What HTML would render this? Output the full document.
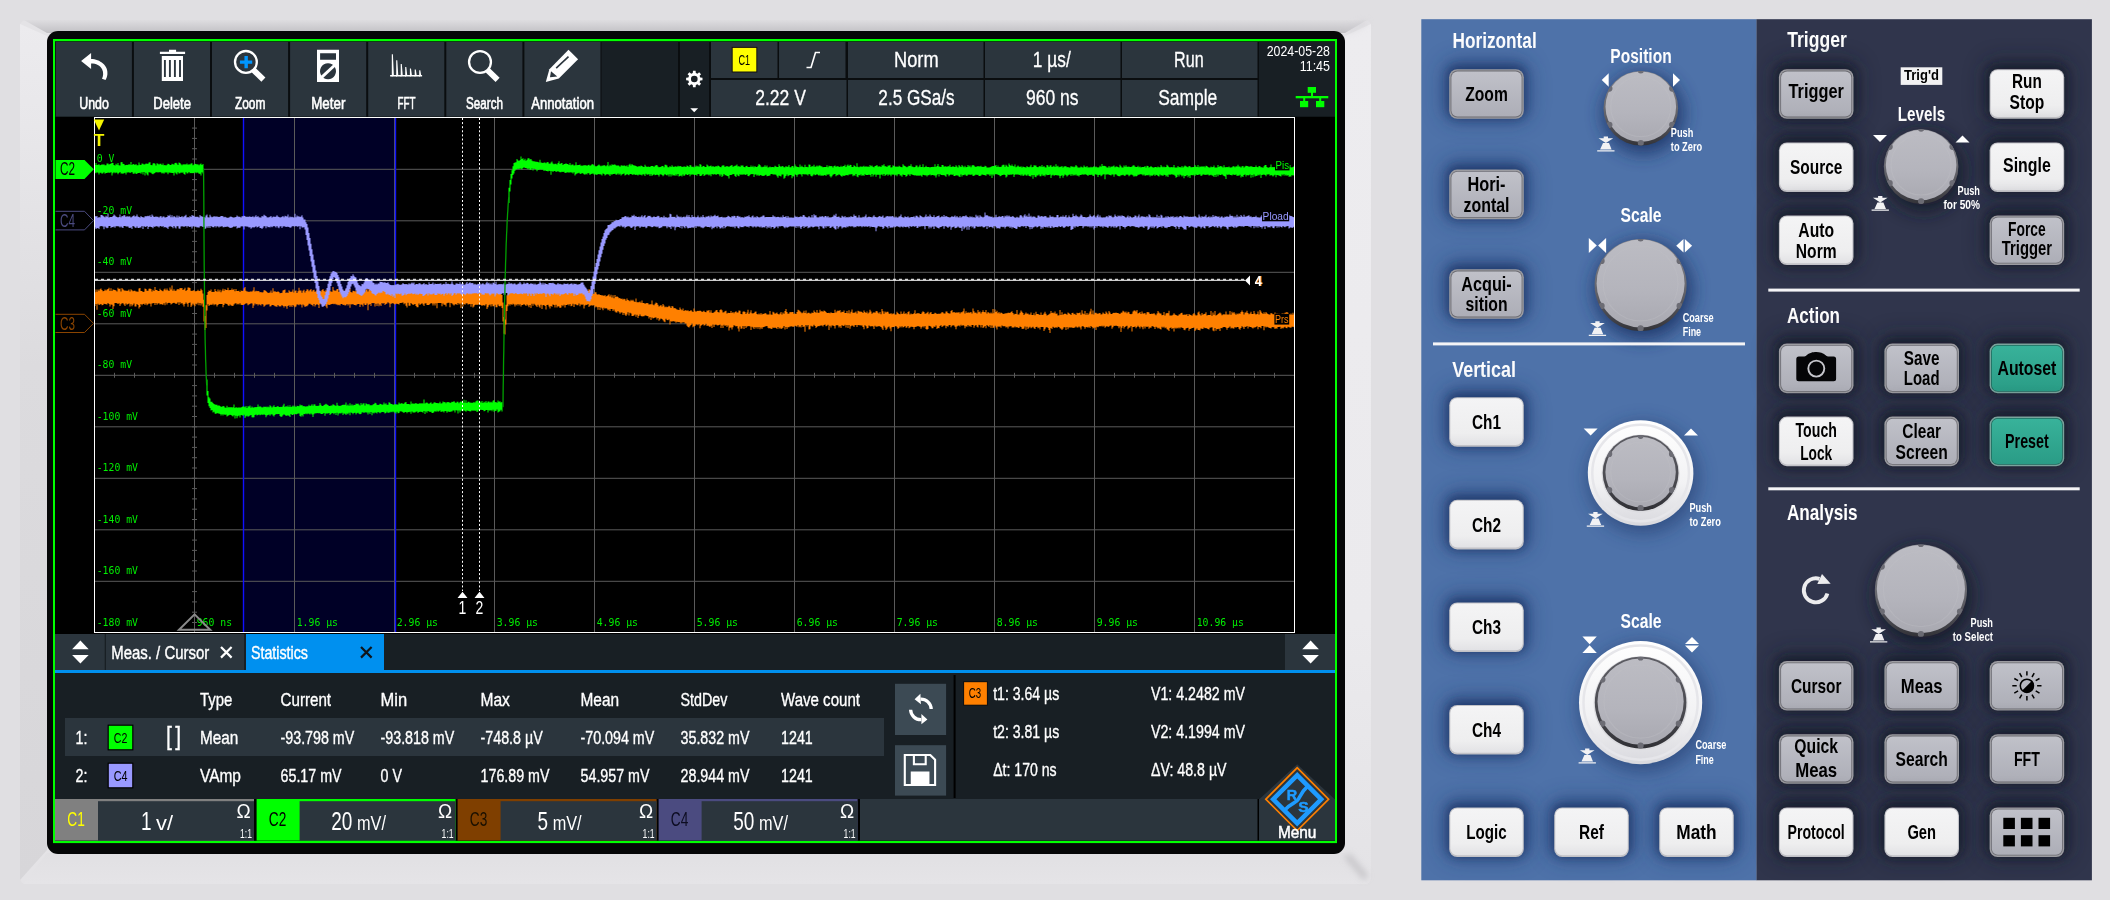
<!DOCTYPE html>
<html lang="en"><head><meta charset="utf-8"><title>Oscilloscope</title>
<style>
html,body{margin:0;padding:0;background:#e0dfe2;overflow:hidden}
svg{display:block;position:absolute;left:0;top:0;will-change:transform}
text{white-space:pre}
.s,.sb{font-family:"Liberation Sans",Arial,sans-serif}
.sb,.mb{font-weight:bold}
.m,.mb{font-family:"DejaVu Sans Mono","Liberation Mono",monospace}
</style></head>
<body>
<svg width="2110" height="900" viewBox="0 0 2110 900">
<defs>
<linearGradient id="bzT" x1="0" y1="0" x2="0" y2="1"><stop offset="0" stop-color="#dedde0"/><stop offset="1" stop-color="#c1c0c4"/></linearGradient>
<linearGradient id="bzB" x1="0" y1="0" x2="0" y2="1"><stop offset="0" stop-color="#e1e0e3"/><stop offset="1" stop-color="#e5e4e7"/></linearGradient>
<linearGradient id="bzL" x1="0" y1="0" x2="0" y2="1"><stop offset="0" stop-color="#ecebee"/><stop offset="0.12" stop-color="#e8e7ea"/><stop offset="0.4" stop-color="#dcdbde"/><stop offset="1" stop-color="#d7d6d9"/></linearGradient>
<linearGradient id="bzR" x1="0" y1="0" x2="0" y2="1"><stop offset="0" stop-color="#edecef"/><stop offset="0.7" stop-color="#ebeaed"/><stop offset="1" stop-color="#e4e3e6"/></linearGradient>
<filter id="bzblur" x="-100%" y="-100%" width="300%" height="300%"><feGaussianBlur stdDeviation="3"/></filter>
<filter id="bl" x="-50%" y="-50%" width="200%" height="200%"><feGaussianBlur stdDeviation="7.5"/></filter>
<filter id="bl3" x="-60%" y="-80%" width="220%" height="260%"><feGaussianBlur stdDeviation="10"/></filter>
<filter id="bl4" x="-50%" y="-50%" width="200%" height="200%"><feGaussianBlur stdDeviation="4.5"/></filter>
<filter id="bl2" x="-50%" y="-50%" width="200%" height="200%"><feGaussianBlur stdDeviation="9"/></filter>
<linearGradient id="gG" x1="0" y1="0" x2="0" y2="1"><stop offset="0" stop-color="#c0c1c9"/><stop offset="1" stop-color="#adaeb7"/></linearGradient>
<linearGradient id="gW" x1="0" y1="0" x2="0" y2="1"><stop offset="0" stop-color="#f4f4f5"/><stop offset="0.75" stop-color="#eeeeef"/><stop offset="1" stop-color="#e2e2e5"/></linearGradient>
<linearGradient id="gT" x1="0" y1="0" x2="0" y2="1"><stop offset="0" stop-color="#38b29a"/><stop offset="1" stop-color="#2a9c86"/></linearGradient>
<linearGradient id="kF" x1="0" y1="0" x2="0" y2="1"><stop offset="0" stop-color="#bcbcc3"/><stop offset="0.6" stop-color="#b4b4bc"/><stop offset="1" stop-color="#a9a9b1"/></linearGradient>
<linearGradient id="kR" x1="0" y1="0" x2="0" y2="1"><stop offset="0" stop-color="#85858c"/><stop offset="0.5" stop-color="#6a6a71"/><stop offset="0.85" stop-color="#45454b"/><stop offset="1" stop-color="#333338"/></linearGradient>
<linearGradient id="kR2" x1="0" y1="0" x2="0" y2="1"><stop offset="0" stop-color="#5c5c63"/><stop offset="0.6" stop-color="#4a4a50"/><stop offset="1" stop-color="#303035"/></linearGradient>
<linearGradient id="kW" x1="0" y1="0" x2="0" y2="1"><stop offset="0" stop-color="#ffffff"/><stop offset="0.6" stop-color="#f2f2f4"/><stop offset="1" stop-color="#d9d9de"/></linearGradient>
</defs>
<rect x="0" y="0" width="2110" height="900" fill="#e0dfe2"/>
<rect x="20" y="20" width="1351" height="864" fill="#e4e3e6" rx="6"/>
<path d="M24 20H1367L1345 33H47Z" fill="url(#bzT)"/>
<path d="M20 24L47 36V850L20 880Z" fill="url(#bzL)"/>
<path d="M1371 24L1345 36V850L1371 880Z" fill="url(#bzR)"/>
<path d="M47 853H1345L1368 884H23Z" fill="url(#bzB)"/>
<path d="M1347 855L1366 878" stroke="#bdbcc0" stroke-width="7" opacity="0.7" filter="url(#bzblur)"/>
<path d="M1347 31L1367 22" stroke="#cfced2" stroke-width="5" opacity="0.6" filter="url(#bzblur)"/>
<g id="screen">
<rect x="47" y="31" width="1298" height="823" fill="#050607" rx="11"/>
<rect x="53" y="39" width="1284" height="804.1" fill="#00ff00"/>
<rect x="55" y="41.5" width="1280" height="799.1" fill="#000"/>
<rect x="55" y="41.5" width="1280" height="75.5" fill="#0a0d0f"/>
<rect x="55.8" y="41.8" width="76.1" height="74.8" fill="#2b353d"/>
<text class="s" transform="translate(94.00 108.90) scale(0.7836 1)" font-size="15.8" fill="#fff" text-anchor="middle" stroke="#fff" stroke-width="0.6">Undo</text>
<rect x="133.9" y="41.8" width="76.1" height="74.8" fill="#2b353d"/>
<text class="s" transform="translate(172.10 108.90) scale(0.8276 1)" font-size="15.8" fill="#fff" text-anchor="middle" stroke="#fff" stroke-width="0.6">Delete</text>
<rect x="212" y="41.8" width="76.1" height="74.8" fill="#2b353d"/>
<text class="s" transform="translate(250.20 108.90) scale(0.7576 1)" font-size="15.8" fill="#fff" text-anchor="middle" stroke="#fff" stroke-width="0.6">Zoom</text>
<rect x="290.1" y="41.8" width="76.1" height="74.8" fill="#2b353d"/>
<text class="s" transform="translate(328.30 108.90) scale(0.8443 1)" font-size="15.8" fill="#fff" text-anchor="middle" stroke="#fff" stroke-width="0.6">Meter</text>
<rect x="368.2" y="41.8" width="76.1" height="74.8" fill="#2b353d"/>
<text class="s" transform="translate(406.40 108.90) scale(0.6217 1)" font-size="15.8" fill="#fff" text-anchor="middle" stroke="#fff" stroke-width="0.6">FFT</text>
<rect x="446.3" y="41.8" width="76.1" height="74.8" fill="#2b353d"/>
<text class="s" transform="translate(484.50 108.90) scale(0.7371 1)" font-size="15.8" fill="#fff" text-anchor="middle" stroke="#fff" stroke-width="0.6">Search</text>
<rect x="524.4" y="41.8" width="76.1" height="74.8" fill="#2b353d"/>
<text class="s" transform="translate(562.60 108.90) scale(0.8312 1)" font-size="15.8" fill="#fff" text-anchor="middle" stroke="#fff" stroke-width="0.6">Annotation</text>
<rect x="601.5" y="41.8" width="76.5" height="74.8" fill="#181f24"/>
<rect x="680" y="41.8" width="29" height="74.8" fill="#181f24"/>
<rect x="711" y="41.8" width="66.5" height="36.2" fill="#2b353d"/>
<rect x="779" y="41.8" width="66.5" height="36.2" fill="#2b353d"/>
<rect x="848" y="41.8" width="135.5" height="36.2" fill="#2b353d"/>
<rect x="985" y="41.8" width="135.5" height="36.2" fill="#2b353d"/>
<rect x="1122" y="41.8" width="135.5" height="36.2" fill="#2b353d"/>
<rect x="711" y="80" width="135.5" height="36.6" fill="#2b353d"/>
<rect x="848" y="80" width="135.5" height="36.6" fill="#2b353d"/>
<rect x="985" y="80" width="135.5" height="36.6" fill="#2b353d"/>
<rect x="1122" y="80" width="135.5" height="36.6" fill="#2b353d"/>
<rect x="1259" y="41.8" width="76" height="74.8" fill="#181f24"/>
<text class="s" transform="translate(916.30 67.00) scale(0.8109 1)" font-size="22.5" fill="#fff" text-anchor="middle" stroke="#fff" stroke-width="0.3">Norm</text>
<text class="s" transform="translate(1051.80 67.00) scale(0.7699 1)" font-size="22.5" fill="#fff" text-anchor="middle" stroke="#fff" stroke-width="0.3">1 µs/</text>
<text class="s" transform="translate(1188.80 67.00) scale(0.7171 1)" font-size="22.5" fill="#fff" text-anchor="middle" stroke="#fff" stroke-width="0.3">Run</text>
<text class="s" transform="translate(780.50 104.80) scale(0.7794 1)" font-size="22.5" fill="#fff" text-anchor="middle" stroke="#fff" stroke-width="0.3">2.22 V</text>
<text class="s" transform="translate(916.50 104.80) scale(0.7636 1)" font-size="22.5" fill="#fff" text-anchor="middle" stroke="#fff" stroke-width="0.3">2.5 GSa/s</text>
<text class="s" transform="translate(1052.30 104.80) scale(0.7786 1)" font-size="22.5" fill="#fff" text-anchor="middle" stroke="#fff" stroke-width="0.3">960 ns</text>
<text class="s" transform="translate(1187.70 104.80) scale(0.7746 1)" font-size="22.5" fill="#fff" text-anchor="middle" stroke="#fff" stroke-width="0.3">Sample</text>
<rect x="731.7" y="46.9" width="25.6" height="25.6" fill="#101010"/>
<rect x="732.7" y="47.9" width="23.6" height="23.6" fill="#ffff00"/>
<text class="s" transform="translate(744.30 64.80) scale(0.5892 1)" font-size="15.4" fill="#000" text-anchor="middle">C1</text>
<path d="M806.5 67.5h4.5l4.5-15h4.5" fill="none" stroke="#fff" stroke-width="1.6"/>
<text class="s" transform="translate(1330.00 56.00) scale(0.7983 1)" font-size="15.5" fill="#fff" text-anchor="end">2024-05-28</text>
<text class="s" transform="translate(1330.00 71.00) scale(0.8050 1)" font-size="15.5" fill="#fff" text-anchor="end">11:45</text>
<g fill="#00ff00"><rect x="1307.7" y="87" width="8.3" height="5.8"/><rect x="1311" y="92" width="2" height="5"/><rect x="1295.7" y="96" width="32.6" height="2.3"/><rect x="1303.2" y="98" width="2" height="4"/><rect x="1319.2" y="98" width="2" height="4"/><rect x="1300" y="101" width="8.2" height="6.2"/><rect x="1316" y="101" width="8.3" height="6.2"/></g>
<path d="M702.49 77.68L702.49 80.32L700.25 80.52L699.58 82.13L701.03 83.86L699.16 85.73L697.43 84.28L695.82 84.95L695.62 87.19L692.98 87.19L692.78 84.95L691.17 84.28L689.44 85.73L687.57 83.86L689.02 82.13L688.35 80.52L686.11 80.32L686.11 77.68L688.35 77.48L689.02 75.87L687.57 74.14L689.44 72.27L691.17 73.72L692.78 73.05L692.98 70.81L695.62 70.81L695.82 73.05L697.43 73.72L699.16 72.27L701.03 74.14L699.58 75.87L700.25 77.48ZM697.62 79A3.32 3.32 0 1 0 690.98 79A3.32 3.32 0 1 0 697.62 79Z" fill="#fff" fill-rule="evenodd"/>
<path d="M690.3 108.2h7.8l-3.9 4z" fill="#fff"/>
<path d="M81.1 61L91.1 53V59C100 59 108.6 66 107.4 74.2C107.1 76.6 106.5 78.5 105.5 80L102 78.8C103.4 76 103.6 72.4 102.2 69.5C100.2 65.6 96.2 63.6 91.1 63.6V68.9Z" fill="#fff"/>
<path d="M159.9 51.7h9.1v-1.9h7.1v1.9h9v2.4h-25.2zM161.8 56h21.2v25h-21.2z" fill="#fff"/>
<path d="M164.9 60v16.9M169.9 60v16.9M174.9 60v16.9M180 60v16.9" stroke="#2b353d" stroke-width="1.9"/>
<path d="M252.8 69.4l10.6 10.2" stroke="#fff" stroke-width="5.8"/><circle cx="245.9" cy="61.9" r="10.9" fill="#2b353d" stroke="#fff" stroke-width="2.3"/><path d="M239.9 62.1h12.3M246.15 56v12.2" stroke="#0096ff" stroke-width="3.4"/>
<path d="M317 49.8h22v32.2h-22zM320.1 53.2h15.9v6.6h-15.9zM328 63.2a8 8 0 1 0 .01 0z" fill="#fff" fill-rule="evenodd"/><path d="M321.3 77.6l13.6-12.6" stroke="#fff" stroke-width="3"/>
<path d="M391.8 77V54.3h1.1l1 21.7zM396.2 77V60.2h1.1l1 15.8zM400.7 77V64.1h1.1l1 11.9zM405.2 77V67h1.1l1 9.0zM409.90000000000003 77V68.6h1.1l1 7.4zM414.7 77V69.6h1.1l1 6.4zM419.2 77V70.2h1.1l1 5.8zM390.1 75h32v1.5h-32z" fill="#fff"/>
<path d="M487 69.6l10.6 10.2" stroke="#fff" stroke-width="5.8"/><circle cx="480" cy="62" r="10.95" fill="#2b353d" stroke="#fff" stroke-width="2.3"/>
<path d="M545.8 81.9L549.4 69.3L568.5 49.8L578.1 59.2L558.8 78.5Z" fill="#fff"/><path d="M551 71.2L557.2 76.5L550 77.2Z" fill="#2b353d"/><path d="M556.2 68.1L568.5 56.6" stroke="#2b353d" stroke-width="1.6"/>
<rect x="243.5" y="118" width="152" height="514" fill="#000026"/>
<path d="M194.5 117.5V632.5M294.5 117.5V632.5M394.5 117.5V632.5M494.5 117.5V632.5M594.5 117.5V632.5M694.5 117.5V632.5M794.5 117.5V632.5M894.5 117.5V632.5M994.5 117.5V632.5M1094.5 117.5V632.5M1194.5 117.5V632.5M94.5 169.3H1294.5M94.5 220.8H1294.5M94.5 272.3H1294.5M94.5 323.8H1294.5M94.5 375.3H1294.5M94.5 426.8H1294.5M94.5 478.3H1294.5M94.5 529.8H1294.5M94.5 581.3H1294.5" stroke="#5a5a5a" stroke-width="1" fill="none"/>
<path d="M192 128.1h5M192 138.4h5M192 148.7h5M192 159.0h5M192 169.3h5M192 179.6h5M192 189.9h5M192 200.2h5M192 210.5h5M192 220.8h5M192 231.1h5M192 241.4h5M192 251.7h5M192 262.0h5M192 272.3h5M192 282.6h5M192 292.9h5M192 303.2h5M192 313.5h5M192 323.8h5M192 334.1h5M192 344.4h5M192 354.7h5M192 365.0h5M192 375.3h5M192 385.6h5M192 395.9h5M192 406.2h5M192 416.5h5M192 426.8h5M192 437.1h5M192 447.4h5M192 457.7h5M192 468.0h5M192 478.3h5M192 488.6h5M192 498.9h5M192 509.2h5M192 519.5h5M192 529.8h5M192 540.1h5M192 550.4h5M192 560.7h5M192 571.0h5M192 581.3h5M192 591.6h5M192 601.9h5M192 612.2h5M192 622.5h5M114.5 372.8v5M134.5 372.8v5M154.5 372.8v5M174.5 372.8v5M194.5 372.8v5M214.5 372.8v5M234.5 372.8v5M254.5 372.8v5M274.5 372.8v5M294.5 372.8v5M314.5 372.8v5M334.5 372.8v5M354.5 372.8v5M374.5 372.8v5M394.5 372.8v5M414.5 372.8v5M434.5 372.8v5M454.5 372.8v5M474.5 372.8v5M494.5 372.8v5M514.5 372.8v5M534.5 372.8v5M554.5 372.8v5M574.5 372.8v5M594.5 372.8v5M614.5 372.8v5M634.5 372.8v5M654.5 372.8v5M674.5 372.8v5M694.5 372.8v5M714.5 372.8v5M734.5 372.8v5M754.5 372.8v5M774.5 372.8v5M794.5 372.8v5M814.5 372.8v5M834.5 372.8v5M854.5 372.8v5M874.5 372.8v5M894.5 372.8v5M914.5 372.8v5M934.5 372.8v5M954.5 372.8v5M974.5 372.8v5M994.5 372.8v5M1014.5 372.8v5M1034.5 372.8v5M1054.5 372.8v5M1074.5 372.8v5M1094.5 372.8v5M1114.5 372.8v5M1134.5 372.8v5M1154.5 372.8v5M1174.5 372.8v5M1194.5 372.8v5M1214.5 372.8v5M1234.5 372.8v5M1254.5 372.8v5M1274.5 372.8v5" stroke="#5a5a5a" stroke-width="1" fill="none"/>
<path d="M243.5 117.5V632.5M395.5 117.5V632.5" stroke="#1010ff" stroke-width="1.4"/>
<path d="M94.5 292.3H95.5V289.4H96.5V291.7H97.5V289.6H98.5V290.7H99.5V289.2H100.5V288.4H101.5V289.9H102.5V291.3H103.5V291.1H104.5V289.5H105.5V290.5H106.5V289.5H107.5V289H108.5V287.8H109.5V290.9H110.5V288.3H111.5V291.1H112.5V289.4H113.5V289.8H114.5V290H115.5V290.4H116.5V291.4H117.5V287.8H118.5V289H119.5V288.4H120.5V291.5H121.5V288.1H122.5V289.2H123.5V290.3H124.5V290.8H125.5V290.4H126.5V291.1H127.5V290.6H128.5V289.5H129.5V291.4H130.5V289.3H131.5V290.2H132.5V291.2H133.5V290.7H134.5V290.8H135.5V291.4H136.5V291.5H137.5V291.8H138.5V288.5H139.5V288H140.5V290.9H141.5H141.5H142.5V292H143.5V291.8H144.5V288.5H145.5V288.9H146.5V290.8H147.5V290.7H148.5V288.7H149.5V288.5H150.5V288.9H151.5V291.4H152.5V289.8H153.5V291.1H154.5V287.1H155.5V290H156.5V290.1H157.5V291.1H158.5V290.9H159.5V288.8H160.5V290H161.5V290.8H162.5V291.2H163.5V289.5H164.5V288.4H165.5V290.2H166.5V288.6H167.5V290.2H168.5V290.9H169.5V287.6H170.5V289.4H171.5V285.6H172.5V290.7H173.5V289.3H174.5V290.8H175.5H175.5H176.5V289.6H177.5V288.9H178.5V289.6H179.5V288.1H180.5V288.2H181.5V288H182.5V290.1H183.5V289.2H184.5V287.7H185.5V290.9H186.5V290.1H187.5V287.4H188.5V287.6H189.5V288.1H190.5V290.7H191.5V290.9H192.5V290.4H193.5V290.2H194.5V291.3H195.5V291.3H196.5V291H197.5V289.8H198.5V291H199.5V290.8H200.5V288.7H201.5V290.3H202.5V293.5H203.5V299.8H204.5V315.9H205.5V305.2H206.5V295.1H207.5V292.1H208.5V290.6H209.5V290.9H210.5V289.4H211.5V292.1H212.5V291.8H213.5V292H214.5V289.1H215.5V291.1H216.5V291.7H217.5V289.5H218.5V291.4H219.5V289.8H220.5V292.2H221.5V290.5H222.5V288.8H223.5V290.8H224.5V288.9H225.5V290.1H226.5V290H227.5V287.8H228.5V290.3H229.5V290H230.5V290.1H231.5V288.6H232.5V290.1H233.5V289.1H234.5V291.2H235.5V289H236.5V291H237.5H237.5H238.5V290.7H239.5V291.9H240.5V290.6H241.5V291H242.5V290.7H243.5V288.2H244.5V287H245.5V290.8H246.5V291.5H247.5H247.5H248.5V292H249.5V291.5H250.5V291.6H251.5V291.4H252.5V290.5H253.5V287.3H254.5V291.4H255.5V290.8H256.5V291.2H257.5V291.1H258.5V291.2H259.5V292.3H260.5V292H261.5V292.4H262.5V292.2H263.5V290.2H264.5H264.5H265.5V291.1H266.5V292H267.5V292.9H268.5V292.7H269.5V292.5H270.5V290.4H271.5V292.8H272.5V288.3H273.5V291.4H274.5V291.2H275.5V291.8H276.5V292H277.5V291.3H278.5V292.1H279.5V293.2H280.5V293H281.5V292.7H282.5V290.6H283.5V290H284.5V289.5H285.5V293.1H286.5V292.2H287.5V293.1H288.5V290.3H289.5V291.6H290.5V292H291.5V291.4H292.5V289.4H293.5V292.4H294.5V290.8H295.5V290.5H296.5V292.9H297.5V291.3H298.5V287.8H299.5V290.4H300.5V290.6H301.5V292.7H302.5V290.8H303.5V289.8H304.5V292.5H305.5V291.1H306.5V289.3H307.5V289.4H308.5V291.3H309.5V290H310.5V289.1H311.5V291.4H312.5V290.2H313.5V289.8H314.5V291.7H315.5V291.3H316.5V289.6H317.5V291.4H318.5V291.6H319.5V291H320.5V291.4H321.5V290.1H322.5V288.9H323.5V290.8H324.5V291.6H325.5V289.7H326.5V291H327.5V291.7H328.5V287.7H329.5V290.8H330.5V291.6H331.5V291.7H332.5V287.1H333.5V290.3H334.5V290.7H335.5V290.5H336.5V289H337.5V289.1H338.5V291.9H339.5V287.6H340.5V292.3H341.5V289.7H342.5V290.6H343.5V291.2H344.5V291.8H345.5V289.1H346.5V291.1H347.5V292.4H348.5V290.5H349.5V288.6H350.5V292H351.5V292.4H352.5V290.7H353.5V291H354.5V291.4H355.5V290.5H356.5V291.6H357.5V291.8H358.5V290H359.5V292H360.5V289.5H361.5V290.6H362.5V290.8H363.5V287.8H364.5V291.7H365.5V290H366.5V289H367.5V291.6H368.5V288.2H369.5V289.5H370.5V291H371.5V289.1H372.5V287.8H373.5V288.6H374.5V290.1H375.5V290H376.5V289.3H377.5V290.7H378.5V289.2H379.5V290.1H380.5V288.3H381.5V290.1H382.5V290.4H383.5V288.7H384.5V290.3H385.5V290.9H386.5V287.1H387.5V288.4H388.5V290.4H389.5V287.4H390.5V290.6H391.5V289.1H392.5V287.3H393.5V287.9H394.5V290.8H395.5V289.3H396.5V289H397.5V289.8H398.5V290.3H399.5V289.6H400.5V290.2H401.5V290.7H402.5V290.1H403.5V288H404.5V290H405.5V288H406.5V291.1H407.5V290.2H408.5V290.8H409.5V290.7H410.5V290H411.5V290.9H412.5V289.6H413.5V288.7H414.5V289.6H415.5V291H416.5V290H417.5V291.7H418.5V288.8H419.5V290.4H420.5V291.3H421.5V291.7H422.5V290.2H423.5V290.8H424.5V291.6H425.5V291H426.5V291.1H427.5V291.5H428.5V291.6H429.5V289.7H430.5V291.3H431.5V290.4H432.5V290.1H433.5V291.5H434.5V288.2H435.5V290.7H436.5V286.8H437.5V290.2H438.5V287.3H439.5V291H440.5V289.9H441.5V290.9H442.5V291.2H443.5H443.5H444.5V290.4H445.5V289.5H446.5V289.6H447.5V289.8H448.5V289.9H449.5V291.2H450.5V291H451.5V290.3H452.5V290.4H453.5V289.8H454.5V291.4H455.5V291.2H456.5V289.5H457.5V289.6H458.5V290.9H459.5V290.5H460.5V290.4H461.5V290.9H462.5V290.7H463.5V290.9H464.5H464.5H465.5V287.3H466.5V290.4H467.5V291.9H468.5V290.7H469.5V289.8H470.5V291.1H471.5V291.9H472.5V289.5H473.5V291.5H474.5V292.3H475.5V291.1H476.5H476.5H477.5V291.4H478.5V288.9H479.5V292.3H480.5V291.4H481.5V292.5H482.5V292H483.5V291.3H484.5V290.2H485.5V290.9H486.5H486.5H487.5V291.5H488.5V289.6H489.5V292.5H490.5V293.1H491.5V290.3H492.5V289.6H493.5V292.4H494.5V293H495.5V292.5H496.5V292.2H497.5V291.8H498.5V291.9H499.5V291.1H500.5V293.4H501.5V295.1H502.5V302.4H503.5V317H504.5V319.4H505.5V304.8H506.5V295.3H507.5V292.5H508.5V290.7H509.5V292.4H510.5V290.7H511.5V292.6H512.5V291.5H513.5V290.3H514.5V290.2H515.5V289.3H516.5V290.7H517.5H517.5H518.5V290.9H519.5V292H520.5V292.2H521.5V292.4H522.5V292.1H523.5V291.5H524.5V288.4H525.5V291.6H526.5V292.1H527.5V289.8H528.5V292.3H529.5V291.1H530.5V292.2H531.5V289.3H532.5V290.9H533.5V289.8H534.5V290.6H535.5V289.3H536.5V291H537.5V291.7H538.5V292.6H539.5V291.4H540.5V290.9H541.5V291.6H542.5V292.6H543.5V292.1H544.5V291.1H545.5V292.9H546.5V290.4H547.5V289.7H548.5V292H549.5V292.8H550.5V293H551.5V291H552.5V293H553.5V291.2H554.5V291.7H555.5V292.5H556.5V293H557.5V291.5H558.5V291.9H559.5V288.1H560.5V292.5H561.5V292.9H562.5V290.1H563.5V289.6H564.5V291.7H565.5V291.3H566.5V292H567.5V292.2H568.5V291.9H569.5V292.3H570.5V289.9H571.5V290.5H572.5V291.6H573.5V288.8H574.5V291.3H575.5V292.1H576.5V291.6H577.5V291.9H578.5V291.6H579.5V290.5H580.5V291.4H581.5V290H582.5V291.5H583.5V290.3H584.5H584.5H585.5V290.3H586.5V290.5H587.5V290.7H588.5V289.2H589.5V289.7H590.5V292.8H591.5V290.9H592.5V293.4H593.5V293.9H594.5V292.2H595.5H595.5H596.5V294.3H597.5V294.8H598.5V294H599.5V295H600.5V295.1H601.5V295.4H602.5V295.3H603.5V296H604.5V295.1H605.5V296.6H606.5V296H607.5V295.2H608.5V294.2H609.5V296.6H610.5V294.7H611.5V297.5H612.5V295.2H613.5V298.2H614.5V295.1H615.5V297H616.5V296.3H617.5V297H618.5V298.3H619.5V298H620.5V299H621.5V298.6H622.5V299.6H623.5V298.8H624.5V299.3H625.5V300.7H626.5V298.5H627.5V300H628.5V300.5H629.5V301.3H630.5V299.7H631.5V300.8H632.5V299.8H633.5V301.3H634.5V302H635.5V298.6H636.5V302.2H637.5V302.3H638.5V302.2H639.5V301.5H640.5V302.8H641.5V300.4H642.5V302.9H643.5V303H644.5V303.8H645.5V303.3H646.5V303H647.5V303.3H648.5V304.4H649.5V304.2H650.5V304.3H651.5V300.6H652.5V304.4H653.5V305.3H654.5V303.8H655.5V302.5H656.5V303.1H657.5V304.7H658.5V306.4H659.5V305.7H660.5V305H661.5V306.4H662.5V303.9H663.5V305.5H664.5V307.3H665.5V306.6H666.5V307.2H667.5V306.7H668.5V305.8H669.5V306.6H670.5V308.1H671.5V306.1H672.5V306.4H673.5V308.2H674.5V307.9H675.5V308.7H676.5V309.4H677.5V309.8H678.5V309.9H679.5V307.5H680.5V309.2H681.5V310.2H682.5V308.5H683.5V311.1H684.5V310.2H685.5H685.5H686.5V310.8H687.5V310.3H688.5V311.2H689.5V311H690.5V310H691.5V311.2H692.5V311.9H693.5V308.6H694.5V310.8H695.5V311.7H696.5V310.9H697.5V310.8H698.5V310.9H699.5V310.4H700.5V311H701.5V311.9H702.5V311.4H703.5V310.7H704.5V312H705.5V312.2H706.5V310.6H707.5V310.8H708.5V309.9H709.5V312.5H710.5V310.3H711.5V312.8H712.5V312.9H713.5V312.2H714.5V311.4H715.5V310.3H716.5V310.1H717.5V312H718.5V312.5H719.5V310.1H720.5V309.3H721.5V310.2H722.5V312.6H723.5V312.3H724.5V311.2H725.5V310.7H726.5V313.5H727.5V312.7H728.5V312.9H729.5V313H730.5V311H731.5V313H732.5V312H733.5V313.3H734.5V311.9H735.5V311.2H736.5V312.5H737.5H737.5H738.5V310.4H739.5V310.8H740.5V314H741.5V314.2H742.5V311.8H743.5V311.2H744.5V312H745.5V313.9H746.5V312.6H747.5V309.7H748.5V314H749.5V312.6H750.5V310.3H751.5V313.3H752.5V313.6H753.5V312.9H754.5V311.7H755.5V311.5H756.5V314.1H757.5V314.6H758.5V313.4H759.5V314.4H760.5V312.9H761.5V314.6H762.5V313.7H763.5V314H764.5V312.9H765.5V313.6H766.5V314.4H767.5V314.6H768.5V314.4H769.5V310.9H770.5V314.5H771.5V314.7H772.5V311.8H773.5V312.6H774.5V313.8H775.5V313.3H776.5V312.6H777.5V314.1H778.5V314.5H779.5V313.6H780.5V312.1H781.5V314.5H782.5V312.4H783.5V313.8H784.5V311.1H785.5V309.1H786.5V311.9H787.5V313.8H788.5V313.4H789.5V312H790.5V312.2H791.5V312.1H792.5H792.5H793.5V313.8H794.5V313.5H795.5V314.1H796.5V311.9H797.5V309.7H798.5V310.2H799.5V311.3H800.5V312.3H801.5V313.2H802.5V312.4H803.5V310.8H804.5V313.1H805.5V310.6H806.5V313.6H807.5V312.7H808.5V312.8H809.5V313.4H810.5V313.4H811.5V312.6H812.5V312.9H813.5V310.4H814.5V312H815.5V312.7H816.5V309.9H817.5V312.8H818.5H818.5H819.5V309.7H820.5V311.6H821.5V311H822.5V311.7H823.5V310.4H824.5V310.9H825.5V312.1H826.5V313.1H827.5H827.5H828.5V312.7H829.5V313.2H830.5V312.3H831.5V313H832.5H832.5H833.5V312.9H834.5V309.7H835.5V312.4H836.5V311.2H837.5V310.5H838.5V311.1H839.5V310.1H840.5V312.5H841.5V311.7H842.5V311.9H843.5V310.4H844.5V312.9H845.5V312.9H846.5V310.9H847.5V313.3H848.5V310.3H849.5V313.4H850.5V311.8H851.5V309.6H852.5V312.8H853.5H853.5H854.5V312.5H855.5V311.6H856.5V313.4H857.5V310.7H858.5V311.3H859.5V311.7H860.5V311.4H861.5V312.1H862.5V313H863.5V310.6H864.5V311.9H865.5V313.1H866.5V311.5H867.5V313.5H868.5V312.6H869.5V309.8H870.5V311.4H871.5V313.8H872.5V312.7H873.5V312.3H874.5V312.8H875.5V311.3H876.5V310.9H877.5V312.5H878.5V313.5H879.5V312.1H880.5V314.2H881.5V308.9H882.5V311.2H883.5V313.7H884.5V311.5H885.5V312.5H886.5V311.7H887.5V311.7H888.5V313.4H889.5V313.9H890.5V313.1H891.5V314.2H892.5V313.4H893.5H893.5H894.5V314.5H895.5H895.5H896.5V311.8H897.5V312.9H898.5V313.9H899.5V314.2H900.5V311.4H901.5V314.1H902.5V313.4H903.5V311.6H904.5V313.9H905.5V313.1H906.5V314.3H907.5V312H908.5V311.3H909.5V314.4H910.5V313.4H911.5V314.2H912.5V314.1H913.5V313.3H914.5V310.2H915.5V314H916.5V313.1H917.5V313.5H918.5V313.1H919.5V313.9H920.5V314H921.5V312.6H922.5V311.2H923.5V312H924.5V313.8H925.5V313.5H926.5V312.7H927.5V311.7H928.5V314.2H929.5V312.7H930.5V312.1H931.5V313.9H932.5H932.5H933.5V313.7H934.5V312.7H935.5V313.2H936.5V313.9H937.5V313.7H938.5H938.5H939.5H939.5H940.5V313.3H941.5V312H942.5V312.5H943.5V313.6H944.5H944.5H945.5V311.4H946.5H946.5H947.5V313.1H948.5V313.4H949.5V313.6H950.5V311H951.5V310.1H952.5V312.4H953.5V312H954.5V312.6H955.5V312.8H956.5V312.2H957.5V312.7H958.5V312H959.5V313.4H960.5V312.2H961.5V312.2H962.5V311.3H963.5V308.5H964.5V313.4H965.5V311.2H966.5V312.9H967.5V312.2H968.5V312.8H969.5V312.6H970.5V311.9H971.5V313.4H972.5V308.4H973.5V311.3H974.5V312.7H975.5V312.6H976.5V313.5H977.5V310H978.5V312.2H979.5V311.5H980.5V313.5H981.5V312H982.5V310.3H983.5V311.9H984.5V312.2H985.5V310H986.5V313.4H987.5V311.9H988.5V312.8H989.5V313.6H990.5V312.5H991.5V313.6H992.5V309H993.5V313.3H994.5V309.5H995.5V312.1H996.5V310.7H997.5V313.2H998.5V311.9H999.5V313.4H1000.5V312.4H1001.5V312.9H1002.5V314H1003.5V313.7H1004.5V313.6H1005.5V313.2H1006.5V313.3H1007.5V312.8H1008.5H1008.5H1009.5V313.1H1010.5V311.9H1011.5V311.2H1012.5V312.9H1013.5V314.4H1014.5V313.7H1015.5V314H1016.5V310.1H1017.5V314.5H1018.5V314.4H1019.5V312.7H1020.5V310.6H1021.5V311.7H1022.5V313.1H1023.5V314.9H1024.5V313.8H1025.5V312.6H1026.5V313.8H1027.5V313.5H1028.5V314.5H1029.5H1029.5H1030.5V312.5H1031.5V314.9H1032.5V315H1033.5V313.2H1034.5V315.3H1035.5V311.8H1036.5V314.1H1037.5V313.9H1038.5V314.5H1039.5V314.9H1040.5V312.5H1041.5V314.9H1042.5V314.7H1043.5V313.4H1044.5V311.8H1045.5V313.8H1046.5V315.5H1047.5V314.9H1048.5V314.3H1049.5V313.5H1050.5V311.1H1051.5V313H1052.5V312.5H1053.5V313.2H1054.5V311.5H1055.5V313.7H1056.5V313.5H1057.5V315.4H1058.5V315.2H1059.5V310H1060.5V314.9H1061.5V312.3H1062.5V314.7H1063.5V314H1064.5V313.4H1065.5V313.9H1066.5V314.7H1067.5V312.4H1068.5V313.2H1069.5V313.9H1070.5V314.9H1071.5V313.1H1072.5V312.7H1073.5V314.2H1074.5V313.8H1075.5V315H1076.5V312.7H1077.5V313.2H1078.5V313.1H1079.5V312.5H1080.5V314.7H1081.5V310.3H1082.5V313.5H1083.5V314.2H1084.5V310.9H1085.5V314.7H1086.5V312.9H1087.5V314.7H1088.5V313.5H1089.5V311.5H1090.5V308.8H1091.5V314.2H1092.5V310.5H1093.5V314.5H1094.5V312.7H1095.5V312.7H1096.5V313.6H1097.5V313.7H1098.5V313.3H1099.5V312.9H1100.5V314.5H1101.5V314.3H1102.5V312.5H1103.5V313.6H1104.5V313.9H1105.5V311.6H1106.5V312.8H1107.5V314.2H1108.5V310.9H1109.5V312.5H1110.5V313.9H1111.5V314H1112.5V313.1H1113.5V312.8H1114.5V313.1H1115.5V312.5H1116.5V313.1H1117.5H1117.5H1118.5V313.6H1119.5V313.9H1120.5V312.7H1121.5V312.6H1122.5V310.7H1123.5V311.4H1124.5V312.4H1125.5V311.4H1126.5V313.3H1127.5V311.8H1128.5V312.2H1129.5V313.9H1130.5V314.2H1131.5V313.8H1132.5V311.5H1133.5V310.4H1134.5V310.6H1135.5V311.6H1136.5V310.1H1137.5V313.4H1138.5V313.1H1139.5V312H1140.5V313.9H1141.5V311.6H1142.5V313.6H1143.5V313.6H1144.5V313H1145.5V314.4H1146.5V312.2H1147.5V312H1148.5V312.5H1149.5V314H1150.5H1150.5H1151.5V313.4H1152.5V314.1H1153.5V312.9H1154.5V314.2H1155.5V315.2H1156.5V313.4H1157.5V311.1H1158.5V312.5H1159.5V313.6H1160.5V313.5H1161.5V315.3H1162.5V315.1H1163.5V312H1164.5V315.4H1165.5V313.6H1166.5V313.1H1167.5V313.3H1168.5V310.7H1169.5V315.5H1170.5V315.4H1171.5V315.6H1172.5V314.7H1173.5V313.3H1174.5V314.6H1175.5V314.9H1176.5V315.4H1177.5V315.8H1178.5V314.4H1179.5V314.3H1180.5V313H1181.5V312.8H1182.5V314.8H1183.5H1183.5H1184.5V314.5H1185.5V314.8H1186.5V314.1H1187.5V316H1188.5V314.1H1189.5V314.8H1190.5V314.9H1191.5V315.8H1192.5V314.3H1193.5V313.1H1194.5V314.5H1195.5V315.4H1196.5V315.3H1197.5V312.6H1198.5V311.6H1199.5V314.3H1200.5V315.5H1201.5V313.1H1202.5V314.8H1203.5V314.1H1204.5V313.8H1205.5V312.2H1206.5V315.5H1207.5V315H1208.5H1208.5H1209.5H1209.5H1210.5V311.1H1211.5V315.7H1212.5V312.4H1213.5V314.8H1214.5V310.9H1215.5V315.5H1216.5V314.9H1217.5V313.9H1218.5V313.2H1219.5V312.6H1220.5V313.4H1221.5V315.3H1222.5V314.4H1223.5V314.2H1224.5V314.5H1225.5V311.6H1226.5V314.4H1227.5V314.4H1228.5V314.6H1229.5V310.9H1230.5V314.8H1231.5V311.8H1232.5V313.3H1233.5V312H1234.5V313.4H1235.5V314.7H1236.5V313.4H1237.5V314.3H1238.5V313.2H1239.5V313.8H1240.5V312.1H1241.5V310.6H1242.5V311.9H1243.5V314.4H1244.5V312.5H1245.5V312.6H1246.5V310.8H1247.5V312.9H1248.5V314.3H1249.5V313.4H1250.5V311.8H1251.5V313.9H1252.5V314H1253.5V311H1254.5V313.4H1255.5V314.6H1256.5V313.9H1257.5V311.6H1258.5V314.4H1259.5V310.1H1260.5V311.4H1261.5V312.9H1262.5V314H1263.5V312.3H1264.5V313.8H1265.5V311.9H1266.5V313.2H1267.5V314H1268.5V314.4H1269.5V314.5H1270.5V313H1271.5V313.4H1272.5V314.2H1273.5H1273.5H1274.5V312.5H1275.5V314.3H1276.5V313.6H1277.5V314.7H1278.5V313.8H1279.5V314.8H1280.5V314.4H1281.5V313.5H1282.5V313.6H1283.5V313.8H1284.5V312.8H1285.5V312.4H1286.5V312.1H1287.5V312.7H1288.5V313.9H1289.5V314.7H1290.5V313.4H1291.5V314.7H1292.5V312.7H1293.5V314.5H1294.5V327.3H1293.5V326.7H1292.5H1292.5H1291.5V327.7H1290.5V327.6H1289.5V327.2H1288.5V326.8H1287.5V328.3H1286.5V328.1H1285.5V326.8H1284.5V327.5H1283.5V328.4H1282.5V327.7H1281.5V329H1280.5V326.8H1279.5V327H1278.5V327H1277.5V328.8H1276.5V328.3H1275.5V329.1H1274.5V327.6H1273.5V327H1272.5V327.2H1271.5V328.4H1270.5V327.9H1269.5V327.8H1268.5V327.3H1267.5V326.7H1266.5V327.4H1265.5V326.6H1264.5V330.2H1263.5V325.9H1262.5V326H1261.5V328.3H1260.5V327.3H1259.5V326.9H1258.5V329.2H1257.5V326.2H1256.5V326.9H1255.5V327.5H1254.5V327.6H1253.5V328.4H1252.5V327.8H1251.5V326.9H1250.5V327H1249.5V326.6H1248.5V328.6H1247.5V326.1H1246.5V326.9H1245.5V326.8H1244.5V328.9H1243.5V327.2H1242.5V326.2H1241.5V327.9H1240.5V329.8H1239.5V328.7H1238.5V327H1237.5H1237.5H1236.5V327.8H1235.5V327H1234.5V328.5H1233.5H1233.5H1232.5V327.7H1231.5V328.4H1230.5V326.5H1229.5V327.5H1228.5V328.1H1227.5V329.8H1226.5V327.8H1225.5V327.1H1224.5H1224.5H1223.5V327.2H1222.5V328.2H1221.5V328.1H1220.5V330.9H1219.5V328.8H1218.5V329.3H1217.5V328.9H1216.5V330.7H1215.5V328H1214.5V331.3H1213.5V330.5H1212.5V327.2H1211.5V327.4H1210.5V327.7H1209.5V329.5H1208.5V328.9H1207.5V328.4H1206.5V327.9H1205.5V328.2H1204.5V327.5H1203.5V329H1202.5V328.7H1201.5V328.6H1200.5V330.6H1199.5V330H1198.5H1198.5H1197.5V328.6H1196.5V329.8H1195.5V331H1194.5V327.4H1193.5V328H1192.5V328.1H1191.5V328.7H1190.5V329H1189.5V330.8H1188.5V327.8H1187.5V328H1186.5V328.6H1185.5V330.3H1184.5V329.8H1183.5V327.9H1182.5V327.7H1181.5V327.3H1180.5V328.5H1179.5V327.5H1178.5V328.6H1177.5V327.7H1176.5V328.8H1175.5V327.7H1174.5V331.5H1173.5V328H1172.5V329.1H1171.5V327.5H1170.5V328H1169.5V330.9H1168.5V329.8H1167.5V329.2H1166.5V327.4H1165.5V328.3H1164.5V326.8H1163.5V327.7H1162.5V326.8H1161.5V329.4H1160.5V328.9H1159.5V327.8H1158.5V328.4H1157.5V327.4H1156.5V326.8H1155.5V329H1154.5V326.9H1153.5V326.3H1152.5H1152.5H1151.5V327.8H1150.5V327.4H1149.5V328.7H1148.5V326.5H1147.5V327.1H1146.5V326.4H1145.5V328.4H1144.5V326.4H1143.5V329.2H1142.5V327.2H1141.5V326.5H1140.5V328.4H1139.5V326.9H1138.5V325.8H1137.5V327H1136.5V328.2H1135.5V326.6H1134.5V327H1133.5H1133.5H1132.5V331.5H1131.5V325.9H1130.5V327.4H1129.5V327.8H1128.5V329.3H1127.5V325.7H1126.5V326.3H1125.5V327H1124.5V328.6H1123.5V325.9H1122.5V327.8H1121.5V331.9H1120.5V326.6H1119.5V328.2H1118.5V326.3H1117.5V326H1116.5V325.5H1115.5V326H1114.5V325.7H1113.5V327.3H1112.5V328.7H1111.5V325.5H1110.5V325.8H1109.5V326.6H1108.5V327.1H1107.5V326.1H1106.5V326.8H1105.5V327.8H1104.5V325.7H1103.5V326.7H1102.5V325.8H1101.5V326.4H1100.5V326.1H1099.5V326.6H1098.5V327.3H1097.5V326.7H1096.5V329.9H1095.5V327.4H1094.5V327.8H1093.5V328.5H1092.5V327H1091.5V326.1H1090.5V327.9H1089.5V326.8H1088.5V327.7H1087.5V327.1H1086.5V327.3H1085.5V328.7H1084.5V327.1H1083.5V326.1H1082.5V326.4H1081.5V329.6H1080.5V327.4H1079.5V326.4H1078.5V327.5H1077.5V327.6H1076.5V326.6H1075.5V327.4H1074.5V327.7H1073.5V328.1H1072.5V327.6H1071.5H1071.5H1070.5V327.4H1069.5V327.4H1068.5V329.2H1067.5V327H1066.5V329.9H1065.5V327.3H1064.5H1064.5H1063.5V328.7H1062.5V330.1H1061.5V328.8H1060.5V328.3H1059.5V327.1H1058.5V326.7H1057.5V327.9H1056.5V327H1055.5V328.1H1054.5V327.6H1053.5V326.8H1052.5V329.1H1051.5V328.1H1050.5V332.9H1049.5V330.1H1048.5V328H1047.5V327.1H1046.5V327.4H1045.5V329.3H1044.5V330.9H1043.5V327.1H1042.5V326.9H1041.5V327.1H1040.5V329.5H1039.5V327.6H1038.5V328.3H1037.5V326.8H1036.5V326.9H1035.5V329H1034.5V328.3H1033.5V326.7H1032.5V327.4H1031.5V328.2H1030.5V326.8H1029.5V327.8H1028.5V328.9H1027.5V326.8H1026.5V329.8H1025.5V326.6H1024.5V328.4H1023.5V328.9H1022.5V328.7H1021.5V326.9H1020.5V326.4H1019.5V328H1018.5V327.7H1017.5V327H1016.5V327.4H1015.5V326.5H1014.5V327.6H1013.5V327.6H1012.5V327.5H1011.5V325.9H1010.5V326.5H1009.5V326.4H1008.5V328.4H1007.5V326.7H1006.5V327.4H1005.5V326.2H1004.5V326.3H1003.5V326.2H1002.5V325.5H1001.5V327.7H1000.5V326.6H999.5V326.8H998.5V326.6H997.5V329.5H996.5V327.6H995.5V325.8H994.5V327.5H993.5V328H992.5V325.6H991.5V327.9H990.5V325.2H989.5V326.9H988.5V325.9H987.5V325.1H986.5V328.3H985.5V326H984.5V327.2H983.5V327.9H982.5V325.1H981.5V327.6H980.5V325.2H979.5V324.8H978.5V327.5H977.5V326.7H976.5V325.1H975.5V325.8H974.5V327.7H973.5V325.1H972.5V324.9H971.5V327.1H970.5V325.7H969.5V326.6H968.5V325.1H967.5V326.8H966.5V326.2H965.5V328.3H964.5V325.7H963.5V325H962.5V326H961.5V324.8H960.5V326.5H959.5V325.5H958.5V325.8H957.5V326.4H956.5V329.3H955.5V326.8H954.5V325.6H953.5V325.2H952.5V325.7H951.5V327.2H950.5V325.1H949.5V325.3H948.5V326.7H947.5V326H946.5V328.2H945.5V325.6H944.5H944.5H943.5V326.2H942.5V327.1H941.5V325.3H940.5V326.1H939.5V328.3H938.5V328.1H937.5V328.9H936.5V325.6H935.5V327.1H934.5V326.4H933.5V328.2H932.5V328.3H931.5V326.8H930.5V325.9H929.5V325.7H928.5V328.9H927.5V329.8H926.5V329.1H925.5V325.9H924.5V327.6H923.5V326.3H922.5V327.2H921.5V328.7H920.5V326.8H919.5V326.6H918.5V325.9H917.5V326.5H916.5V326.7H915.5V326.9H914.5V329.2H913.5V326.9H912.5V326.7H911.5V326.8H910.5V327.5H909.5V328.2H908.5V326.1H907.5V327.6H906.5V327.8H905.5V326.1H904.5V326.9H903.5V327.4H902.5V326.2H901.5V327.4H900.5V326.4H899.5V328H898.5V328.9H897.5V327.2H896.5V326.1H895.5V326.6H894.5V327H893.5V327.1H892.5V327.3H891.5V331.3H890.5V328.6H889.5V326.6H888.5V327.3H887.5V328.8H886.5V330H885.5V327.5H884.5V325.8H883.5V330.1H882.5V328.4H881.5V327H880.5V326.5H879.5V326H878.5V326.4H877.5H877.5H876.5V326.8H875.5V325.7H874.5V329H873.5V326.4H872.5V325.9H871.5V326.5H870.5V326.2H869.5V325.6H868.5V328H867.5V328.4H866.5V326.2H865.5V325.2H864.5V329.3H863.5V327.1H862.5V325.5H861.5V325.6H860.5V325.3H859.5V325.2H858.5V325H857.5V326.9H856.5V325.1H855.5V325.3H854.5V327H853.5V325.7H852.5V325.4H851.5V326.2H850.5V328.8H849.5V325.1H848.5V327.9H847.5V325H846.5V327.4H845.5V324.7H844.5V326.1H843.5V325.8H842.5V325.3H841.5V327.9H840.5V326.2H839.5V327.6H838.5V325.6H837.5V325H836.5V325.4H835.5V328.5H834.5V326.1H833.5V325.4H832.5V325.4H831.5V327.6H830.5V325.8H829.5V330H828.5V324.8H827.5V325.8H826.5V326.3H825.5V324.6H824.5V325H823.5V326.5H822.5V325.4H821.5H821.5H820.5V325.8H819.5V326.3H818.5V325.9H817.5V327.1H816.5V327.9H815.5V326H814.5V324.8H813.5V326.4H812.5V326.6H811.5V325.8H810.5V329.2H809.5V329.4H808.5V324.9H807.5V326.5H806.5V325H805.5V331.7H804.5V326.4H803.5V327H802.5V325.1H801.5V327.5H800.5V326.6H799.5V327.3H798.5V325.3H797.5V326.7H796.5V326.3H795.5V325.7H794.5V326.6H793.5V327H792.5V326.2H791.5V326.6H790.5V326.4H789.5V327.3H788.5H788.5H787.5V328.9H786.5V326.9H785.5V329.4H784.5V325.9H783.5V327.8H782.5V328.6H781.5V328.9H780.5V327.8H779.5V328.7H778.5V326.9H777.5V328.9H776.5V328H775.5V327.6H774.5V327.9H773.5V327.4H772.5V328.8H771.5V329.1H770.5V327.9H769.5V328.4H768.5V327.7H767.5V326.1H766.5V326.3H765.5V326.6H764.5V326.9H763.5V327.2H762.5V328.9H761.5V327.5H760.5V329.3H759.5V327.1H758.5V328.8H757.5V326.9H756.5V328.4H755.5V327H754.5V328.9H753.5V327.5H752.5V326.7H751.5V329.9H750.5V326.5H749.5V326.1H748.5V326.3H747.5V326.4H746.5V327.9H745.5V325.9H744.5V329.1H743.5V326H742.5V328.5H741.5V328.7H740.5V326.6H739.5V331.5H738.5V328.6H737.5V326H736.5V326.4H735.5V325.8H734.5V325.3H733.5V327.2H732.5V329.4H731.5V327.5H730.5V327.8H729.5V330.4H728.5V325.4H727.5V327.1H726.5V325.3H725.5V326.1H724.5V324.8H723.5V328.1H722.5V325.5H721.5V327.9H720.5V324.5H719.5V324.9H718.5V325.4H717.5V325.2H716.5V324.5H715.5V324.7H714.5V327.1H713.5V324.6H712.5V328.1H711.5V325.8H710.5V327H709.5V326.2H708.5V325.5H707.5V326H706.5V323.8H705.5V325.2H704.5V325.5H703.5V323.9H702.5V325H701.5V325.8H700.5V328.2H699.5V324.1H698.5V325.2H697.5V324.2H696.5V324.4H695.5V326H694.5V326.3H693.5V327.2H692.5V323.4H691.5V325.1H690.5V326.3H689.5V327.4H688.5V327H687.5V325.8H686.5V323.6H685.5V323.5H684.5V322.3H683.5V322.5H682.5V322.4H681.5V323.6H680.5V322.6H679.5V322H678.5V322.2H677.5V321.8H676.5V322.8H675.5V321.4H674.5V321.5H673.5V321.1H672.5V321.7H671.5V321.3H670.5V324.4H669.5V319.4H668.5V320.2H667.5V320H666.5V318.8H665.5V322.2H664.5V321.4H663.5V320.2H662.5V319H661.5V318.6H660.5V319.6H659.5V320.7H658.5V318.1H657.5V319.4H656.5V317.6H655.5H655.5H654.5V318.1H653.5V318.5H652.5V317.6H651.5V320H650.5V317.1H649.5V318.6H648.5V316.2H647.5V316H646.5V315.6H645.5V315.4H644.5V316.2H643.5H643.5H642.5V316.5H641.5V316H640.5V314.6H639.5V316H638.5V318H637.5V314.7H636.5V316.8H635.5V314.6H634.5V315.5H633.5V316H632.5H632.5H631.5V313.4H630.5V312.7H629.5V315.4H628.5V312.3H627.5V314.5H626.5V315.9H625.5V314.8H624.5V313H623.5V315H622.5V312.5H621.5H621.5H620.5V313.8H619.5V312.2H618.5V311.1H617.5V312.5H616.5V312.4H615.5V311.5H614.5V309.6H613.5V310.9H612.5V309.1H611.5V309H610.5V311.1H609.5V309.5H608.5V310.2H607.5V308.7H606.5V307.9H605.5V308.7H604.5V307.8H603.5V310.3H602.5V308.4H601.5V307.4H600.5V309.9H599.5V307.1H598.5V309.8H597.5V307.3H596.5V306.4H595.5V307.4H594.5V305.1H593.5V305.8H592.5V305.2H591.5V305.5H590.5V305.7H589.5V307H588.5V303.9H587.5V305H586.5V304.8H585.5V305.5H584.5V308.4H583.5V304.5H582.5V304.7H581.5V304.6H580.5V306.3H579.5V303.4H578.5V305.2H577.5H577.5H576.5V304.4H575.5V304.3H574.5V307H573.5V303.7H572.5V305.7H571.5V306.3H570.5V304.1H569.5V305.4H568.5V304.3H567.5V305.1H566.5V304.9H565.5V307.4H564.5V304.8H563.5V306.2H562.5V305.3H561.5V307.5H560.5V308H559.5V306.5H558.5V306.2H557.5V307.5H556.5V304.7H555.5V307.5H554.5V305H553.5V304.5H552.5V306.8H551.5V306.1H550.5V308.6H549.5V306.6H548.5V304.8H547.5V305.1H546.5V309.5H545.5V305.9H544.5V305.1H543.5V305.2H542.5V309.1H541.5V304.7H540.5V307.8H539.5V306.4H538.5V304.7H537.5V307H536.5V305.8H535.5V304.7H534.5V303.7H533.5V305.8H532.5V303.8H531.5V308H530.5V305.1H529.5V307.3H528.5V305.4H527.5V304.5H526.5V306.1H525.5V305.1H524.5V304.1H523.5V305H522.5H522.5H521.5V306.6H520.5V304.3H519.5V305.5H518.5V303.9H517.5V305.5H516.5V304.6H515.5V306.4H514.5V304.5H513.5V303.8H512.5V304.9H511.5V304.1H510.5V305.5H509.5V304.3H508.5V306.3H507.5V311.1H506.5V324.5H505.5V334.4H504.5V333.7H503.5V321.5H502.5V308.1H501.5V305.7H500.5V306.6H499.5V306H498.5V304.5H497.5V307.2H496.5H496.5H495.5V304.8H494.5V306.3H493.5V306.3H492.5V304.3H491.5V306.4H490.5V304.4H489.5V305.2H488.5V307.3H487.5V309.1H486.5V304.2H485.5V305.5H484.5V305.6H483.5V304.9H482.5V306H481.5V304.9H480.5V304.7H479.5V304.4H478.5V304.6H477.5V304.9H476.5V304.4H475.5V305.1H474.5V306.6H473.5V307.6H472.5V304H471.5V306.8H470.5V303.9H469.5V304.2H468.5V304.5H467.5V303.3H466.5V303.5H465.5V304.8H464.5V303.9H463.5V306.4H462.5V303.4H461.5V307.9H460.5V303.4H459.5V304.5H458.5V302.9H457.5V305H456.5V303.9H455.5V304.4H454.5V305.5H453.5V304.6H452.5V303.5H451.5V303.1H450.5V307.3H449.5V302.8H448.5V302.8H447.5V303.3H446.5V306.5H445.5V304.8H444.5H444.5H443.5V303.4H442.5V306.2H441.5V303H440.5V303H439.5V302.9H438.5V303H437.5V308.2H436.5V303.2H435.5V305.4H434.5V303.5H433.5V305.5H432.5V303.6H431.5V303H430.5V304H429.5V305H428.5V305.1H427.5V305H426.5V303.2H425.5V303.5H424.5V306H423.5V304.4H422.5V303.2H421.5V303.9H420.5V305H419.5V303.4H418.5V307.3H417.5V307.2H416.5V306.1H415.5V303.9H414.5V304.4H413.5V305.1H412.5V304.1H411.5V303.1H410.5V305.8H409.5V305.7H408.5V302.8H407.5V307.5H406.5V305.7H405.5V303.2H404.5V304.3H403.5V302.5H402.5V302.8H401.5V303.1H400.5V302.9H399.5V304.6H398.5V304H397.5V303.8H396.5H396.5H395.5V304.6H394.5V303.9H393.5V303.1H392.5V303.6H391.5V303.8H390.5V307.3H389.5V303.3H388.5V302.3H387.5V303.6H386.5V304H385.5V304.9H384.5V303H383.5V303.8H382.5V303H381.5V305.9H380.5V304.6H379.5V306.3H378.5V303.5H377.5V306.1H376.5V303.7H375.5V306.4H374.5V302.9H373.5V303.3H372.5V303H371.5V306.1H370.5V304H369.5V304.7H368.5V310.2H367.5V303.4H366.5V305.1H365.5V305H364.5V303.5H363.5V306.5H362.5V304.8H361.5V304.4H360.5V306.9H359.5V303.9H358.5V304.1H357.5V304.6H356.5V305.6H355.5V304.9H354.5V305H353.5V303.9H352.5V304.4H351.5V304.2H350.5V307.7H349.5V304.2H348.5V305.5H347.5V304H346.5V305.3H345.5V305.4H344.5V304.8H343.5V305.1H342.5V303.9H341.5H341.5H340.5V305.4H339.5V304.7H338.5V305.2H337.5V304.4H336.5V304.5H335.5V303.8H334.5V304.2H333.5V303.7H332.5V303.9H331.5V304.3H330.5V304.7H329.5V304.9H328.5V304.5H327.5V308.2H326.5V306.6H325.5V303.6H324.5V304H323.5V305.9H322.5V304.5H321.5V303.5H320.5V304.3H319.5V308H318.5V305.1H317.5V304.1H316.5V305H315.5V306.4H314.5V303.9H313.5V306.3H312.5V304.9H311.5V304.5H310.5V303.7H309.5V303.8H308.5V305.2H307.5V306.2H306.5H306.5H305.5V307.1H304.5V305.6H303.5V304.5H302.5V307.4H301.5V304.8H300.5V304.3H299.5V305.2H298.5V304.4H297.5H297.5H296.5V306.5H295.5V307.2H294.5V306.3H293.5V304.9H292.5V307.1H291.5V305.4H290.5V307.1H289.5V305.3H288.5V306.1H287.5V308.8H286.5V306.5H285.5V305.9H284.5V307.4H283.5V305.9H282.5V304.9H281.5V306.3H280.5V306.5H279.5V306.3H278.5V305H277.5V306.7H276.5V306.6H275.5V306.2H274.5V305.4H273.5V305.1H272.5V305H271.5V306.2H270.5V306.5H269.5V304.3H268.5V304.6H267.5V304.4H266.5V304.8H265.5V305.7H264.5V306.8H263.5V304.5H262.5V304.1H261.5V305.5H260.5V304.7H259.5V304.2H258.5V305.5H257.5V303.9H256.5V304.6H255.5V303.6H254.5V305.5H253.5V308.1H252.5V303.4H251.5V303.3H250.5V303.9H249.5V304.6H248.5V305.2H247.5V303.5H246.5V303.3H245.5V303.9H244.5V304.7H243.5V305H242.5V305.1H241.5V304.7H240.5V303.2H239.5V304.5H238.5V303.8H237.5V304.4H236.5V303.2H235.5V303.4H234.5V304.4H233.5V306.1H232.5V305.8H231.5V305.4H230.5V304.4H229.5V305.9H228.5V305.3H227.5V303.9H226.5V303.7H225.5V303.4H224.5V305.1H223.5V307.3H222.5V304H221.5V303.9H220.5H220.5H219.5V304H218.5V305H217.5V306.5H216.5V304.4H215.5V304.3H214.5V305.2H213.5V303.8H212.5V305.1H211.5V304.6H210.5V305H209.5V305.9H208.5V304.2H207.5V310.4H206.5V328H205.5V330.1H204.5V321.4H203.5V306.8H202.5V303.6H201.5V305.4H200.5V303.1H199.5V305.2H198.5V302.8H197.5V304.4H196.5V303.4H195.5V306.3H194.5V305.2H193.5V303.5H192.5V305.4H191.5V307.1H190.5V302.6H189.5V303H188.5V306.8H187.5V303.7H186.5V302.5H185.5V304H184.5V306.4H183.5V304.4H182.5V303.1H181.5V303.8H180.5V302.3H179.5V305H178.5V302.3H177.5V303.6H176.5V303.9H175.5V303.2H174.5V302.7H173.5V302.9H172.5V303.7H171.5V304.5H170.5V303H169.5V302.8H168.5V303H167.5V304.5H166.5V302.5H165.5V305.2H164.5V303.3H163.5V304.8H162.5V304.4H161.5V304H160.5V304.6H159.5V303.2H158.5V303.6H157.5V304.8H156.5V302.9H155.5V305H154.5V302.9H153.5V303.3H152.5V303.5H151.5V306.6H150.5V303.8H149.5V303.6H148.5V304.3H147.5V305.2H146.5V303.5H145.5V305.1H144.5V303.8H143.5V304H142.5V305.2H141.5V303.9H140.5V307.1H139.5V308.4H138.5V305H137.5V304.1H136.5V306.6H135.5V306.4H134.5V303.6H133.5V304.7H132.5V306.3H131.5V304.3H130.5V306.5H129.5V303.5H128.5V304H127.5V304.7H126.5V303.4H125.5V306H124.5V304.5H123.5V303.3H122.5H122.5H121.5V304.3H120.5V306H119.5V303.2H118.5V303.9H117.5V303.3H116.5V303.1H115.5V302.9H114.5V306.3H113.5V308.9H112.5V304.7H111.5V304.4H110.5V306.4H109.5V303.9H108.5V303.1H107.5V304.6H106.5V304.2H105.5V304.1H104.5V303.7H103.5V305.1H102.5V305.3H101.5V304H100.5V304.6H99.5V305.1H98.5V303.8H97.5V309.7H96.5V304H95.5V306H94.5Z" fill="#ff8000"/>
<path d="M94.5 216.1H95.5V216.5H96.5V216H97.5V217.7H98.5V217.1H99.5V217.5H100.5V215H101.5H101.5H102.5V215.7H103.5V216.4H104.5V217.2H105.5V215.7H106.5V216.8H107.5V213.5H108.5V217.6H109.5V217.1H110.5V217H111.5H111.5H112.5V216H113.5V214.5H114.5V215.4H115.5V216.6H116.5V217H117.5V217.5H118.5V216.9H119.5V214.4H120.5V217.3H121.5V216.1H122.5V216.2H123.5V215.1H124.5V215.5H125.5V217.1H126.5V215.9H127.5V216.8H128.5V216.2H129.5V216.5H130.5V217.4H131.5V216.8H132.5V216H133.5V215.3H134.5V216.6H135.5V216.2H136.5V214.4H137.5V216.4H138.5V216.9H139.5V217.4H140.5V216H141.5V216.9H142.5V217.3H143.5V217.6H144.5V216.3H145.5H145.5H146.5H146.5H147.5V215.8H148.5V216.3H149.5V215.3H150.5V216.9H151.5V214.6H152.5V215.8H153.5V217.1H154.5V216.7H155.5V216.4H156.5V216.8H157.5V216.7H158.5V217.4H159.5V216.6H160.5V216H161.5V217.5H162.5V216.6H163.5H163.5H164.5V217.6H165.5V217.2H166.5V217.1H167.5V215.3H168.5V216.1H169.5V214.7H170.5V217.2H171.5V215.3H172.5V217.2H173.5V216H174.5V216.7H175.5V217.4H176.5V215.6H177.5V217.6H178.5V215.7H179.5V216.9H180.5V217H181.5V216.1H182.5V217.2H183.5V216.4H184.5V215.7H185.5V214.7H186.5V217.6H187.5V217H188.5V217.6H189.5V216H190.5V216.9H191.5V215.1H192.5V215.8H193.5H193.5H194.5V216.8H195.5V216.8H196.5H196.5H197.5H197.5H198.5V217.6H199.5V215H200.5V216.2H201.5V216.3H202.5V217H203.5V217.1H204.5V217.5H205.5V215.5H206.5V214.5H207.5V217.2H208.5V217.6H209.5V214.7H210.5V216.6H211.5V217.2H212.5V216.8H213.5V216.3H214.5V216.5H215.5H215.5H216.5H216.5H217.5V216.7H218.5V217H219.5V216.7H220.5V216.1H221.5V216H222.5V216.3H223.5V217.2H224.5V216.8H225.5V217.2H226.5V217.7H227.5H227.5H228.5V217.4H229.5V216.8H230.5V216.4H231.5V216.9H232.5V217.4H233.5H233.5H234.5V217.2H235.5V217.1H236.5V215.6H237.5V216.5H238.5V216.7H239.5H239.5H240.5V217.5H241.5V216.3H242.5V216.2H243.5V215.7H244.5V216H245.5V217H246.5V216.5H247.5V217.1H248.5V216.6H249.5H249.5H250.5V217.1H251.5V216.8H252.5V216.2H253.5V217.2H254.5V216.6H255.5V215.2H256.5V216.9H257.5V216H258.5V217.2H259.5V217.6H260.5V217.4H261.5V216.1H262.5V216.5H263.5V214.8H264.5V215.6H265.5V216H266.5V217.2H267.5V217.4H268.5V217.3H269.5V216.8H270.5V216.1H271.5V217.5H272.5V216.8H273.5V216.6H274.5V217H275.5V216.4H276.5V215.2H277.5V216.6H278.5V216.9H279.5V217.4H280.5V217.2H281.5V216.7H282.5V215.9H283.5V217.3H284.5V215.7H285.5V216.3H286.5V216.6H287.5V214.5H288.5V217.5H289.5V216.4H290.5V217.3H291.5V216.7H292.5V217.3H293.5V217.4H294.5V213.8H295.5V217.2H296.5V215.4H297.5V216.4H298.5V216.3H299.5V217.1H300.5V216.4H301.5V215.3H302.5V217.5H303.5V219.6H304.5H304.5H305.5V222.3H306.5V224.1H307.5V227.6H308.5V233H309.5V237.9H310.5V243.7H311.5V249.2H312.5V254.6H313.5V259.8H314.5V265.3H315.5V270.5H316.5V276.1H317.5V281.5H318.5V286.1H319.5V290.8H320.5V295.5H321.5V296.9H322.5V299H323.5V298.9H324.5V295.3H325.5V292H326.5V287.9H327.5V283.7H328.5V279.3H329.5V276.3H330.5V273.6H331.5V272.3H332.5V271.1H333.5V271.3H334.5V271.7H335.5V272H336.5V273.1H337.5V275.1H338.5V277.3H339.5V280.8H340.5V284H341.5V286.6H342.5V289.4H343.5V291.1H344.5V290.4H345.5V288.2H346.5V285.3H347.5V282.1H348.5V279.7H349.5V277.9H350.5V276.1H351.5V276.2H352.5V274.2H353.5V275.7H354.5V277H355.5V277.6H356.5V280.4H357.5V283.3H358.5V285H359.5V285.4H360.5V286.2H361.5V283.9H362.5V284.3H363.5V282.5H364.5V280.1H365.5V278.6H366.5V277.9H367.5V279.2H368.5V279.8H369.5V279.7H370.5V280.6H371.5V280.8H372.5V282.5H373.5V283H374.5V284.6H375.5V283.6H376.5V284.4H377.5V283.5H378.5V283.4H379.5V281.8H380.5V282.1H381.5V282H382.5V282.5H383.5H383.5H384.5V282.2H385.5V283H386.5H386.5H387.5V282.2H388.5V283.7H389.5V284.7H390.5V284.9H391.5V285.2H392.5V284.9H393.5V285.2H394.5V284.8H395.5V284.4H396.5V284.2H397.5V283.8H398.5V284.6H399.5V284.8H400.5H400.5H401.5V284.2H402.5V283H403.5V284H404.5V284.2H405.5V284H406.5V284.2H407.5V284.4H408.5V283.2H409.5V284.3H410.5V283.5H411.5V282.5H412.5V283.6H413.5V282.6H414.5V284.7H415.5V284H416.5V283.9H417.5V284.2H418.5V283.2H419.5V283.3H420.5V284.3H421.5V284.4H422.5V283.9H423.5V283.1H424.5V284.4H425.5V284.1H426.5V284.6H427.5V284.7H428.5V282.3H429.5V283.9H430.5H430.5H431.5V283.7H432.5V282.6H433.5V284.5H434.5V283.5H435.5V283.9H436.5H436.5H437.5V283.7H438.5V283.9H439.5V283.6H440.5V283.4H441.5V284.7H442.5V284H443.5V283.8H444.5V284.3H445.5V282H446.5V283.9H447.5V283.4H448.5V284H449.5V284.3H450.5V283.7H451.5V281.5H452.5V283.7H453.5V284.8H454.5V284.7H455.5V283.6H456.5H456.5H457.5V283.8H458.5V284H459.5V282.3H460.5V284.3H461.5V283.4H462.5V283.1H463.5V284.7H464.5V284.4H465.5V283.5H466.5V282.1H467.5V284.1H468.5V283H469.5V282.3H470.5V283.3H471.5V283H472.5V283.2H473.5V284.6H474.5V283.8H475.5V284.4H476.5V284.6H477.5V283.7H478.5V284.1H479.5V283.2H480.5V284.5H481.5V283.8H482.5V283.3H483.5V284.3H484.5V284.5H485.5V283.2H486.5V281.7H487.5V283.6H488.5V282.8H489.5V284.2H490.5V283.2H491.5V284.6H492.5V282.7H493.5V282.8H494.5V284H495.5V281.8H496.5V284.4H497.5V284.6H498.5V283.9H499.5V284.3H500.5V284.1H501.5V284.2H502.5H502.5H503.5V283.3H504.5V284.6H505.5V284.4H506.5V283.7H507.5V283.9H508.5V282.3H509.5V283.7H510.5V283.3H511.5V283.6H512.5V284.2H513.5V283.6H514.5V283.5H515.5V284.6H516.5H516.5H517.5V283.8H518.5V283.4H519.5V282H520.5V283.4H521.5V284.5H522.5V284.1H523.5V282.4H524.5V283.7H525.5V283.6H526.5V282.8H527.5V283.1H528.5V284.3H529.5V284H530.5V282.9H531.5V284H532.5V283.6H533.5V284.4H534.5V283.5H535.5V284.4H536.5V284.4H537.5V283.9H538.5V283.5H539.5V281.5H540.5V283H541.5V284.5H542.5V282.7H543.5V284.4H544.5V282.9H545.5V283.9H546.5V284H547.5V284.5H548.5V283.1H549.5V282.9H550.5H550.5H551.5V283.3H552.5V282.8H553.5V283.4H554.5V284.1H555.5V284.7H556.5V284.2H557.5V283H558.5V284.2H559.5V283.7H560.5V284.3H561.5V284.5H562.5H562.5H563.5V283.4H564.5V283.8H565.5V283.9H566.5V283.8H567.5V283.4H568.5V284.5H569.5V284.1H570.5V283.6H571.5V283.5H572.5V284.5H573.5V283.5H574.5V284.1H575.5V283.7H576.5V284.5H577.5V284.4H578.5V284.2H579.5V284H580.5V282.8H581.5V282.4H582.5H582.5H583.5V284.7H584.5V286.5H585.5V287.8H586.5V289.2H587.5V290.9H588.5V292.9H589.5V290.2H590.5V286.1H591.5V281.6H592.5V276.6H593.5V271.6H594.5V267.1H595.5V263H596.5V258.9H597.5V254.6H598.5V250.2H599.5V246.4H600.5V242.4H601.5V239.1H602.5V236.4H603.5V233H604.5V230.2H605.5V228.9H606.5V228.3H607.5V225H608.5H608.5H609.5V224.5H610.5V223.8H611.5V222.2H612.5H612.5H613.5V221.3H614.5V221.1H615.5V219.8H616.5V220.2H617.5V220.1H618.5V219.9H619.5V218.9H620.5H620.5H621.5V217.3H622.5H622.5H623.5V217H624.5V216.1H625.5V216.2H626.5V217.3H627.5V216.5H628.5V217.6H629.5V217.3H630.5H630.5H631.5V215.5H632.5V215.9H633.5V214.8H634.5V216.6H635.5V216H636.5V217.1H637.5H637.5H638.5V216.4H639.5V217.3H640.5V216.5H641.5V215.3H642.5V217.2H643.5V216H644.5V215.1H645.5V217.7H646.5V217.1H647.5V215.7H648.5V216.1H649.5V215.7H650.5V216.7H651.5V217.4H652.5V217.1H653.5V216.3H654.5V217.1H655.5H655.5H656.5V216.6H657.5V215.7H658.5V216.3H659.5V217.7H660.5V217H661.5V217.2H662.5V217.5H663.5V215.8H664.5V217.4H665.5V217H666.5V217.7H667.5V217.5H668.5V217.3H669.5V213.7H670.5V214.2H671.5V216.9H672.5V216.8H673.5V217H674.5V216.8H675.5V217.7H676.5V214.8H677.5V216.6H678.5V216.5H679.5V217.3H680.5V216.6H681.5V217.4H682.5V216.9H683.5V216.6H684.5V217.2H685.5V216.6H686.5V214.7H687.5V216.7H688.5V214.9H689.5V216.9H690.5V217.4H691.5V215H692.5V217.1H693.5V216.8H694.5V216.8H695.5V217.5H696.5V217.1H697.5V215.5H698.5V217.2H699.5V217.4H700.5V216.6H701.5V217.2H702.5V214.9H703.5V217.1H704.5V217.6H705.5V216.4H706.5V216.7H707.5V216.2H708.5V215.8H709.5V217.2H710.5V215.5H711.5V216.5H712.5V216.2H713.5V215.8H714.5V214.7H715.5V216.2H716.5V215.9H717.5V215.5H718.5V217.3H719.5V217.2H720.5V216.9H721.5V216.8H722.5V217.5H723.5V217.2H724.5V217.6H725.5V217.2H726.5V216.9H727.5V215.8H728.5V216.3H729.5V217H730.5V217.6H731.5V216H732.5V216.5H733.5V215.7H734.5V215.9H735.5V217.7H736.5V216.1H737.5V215.8H738.5V216.7H739.5V216.6H740.5V217.4H741.5V217.1H742.5V217.4H743.5V217.5H744.5V216.5H745.5V217.1H746.5V216H747.5V216.6H748.5V215.3H749.5V216.9H750.5V217.6H751.5V216.3H752.5V215.4H753.5V217.6H754.5V216.8H755.5V217.6H756.5V216.1H757.5V217H758.5V217.5H759.5V217.2H760.5V216.8H761.5V216.5H762.5V215.4H763.5V215.5H764.5V217.3H765.5V216.9H766.5V217.1H767.5V216.9H768.5V217.1H769.5H769.5H770.5V216.9H771.5V217.1H772.5V215.2H773.5V216.6H774.5H774.5H775.5V217.3H776.5V217H777.5V216.7H778.5V217.1H779.5V217.4H780.5V216.7H781.5V217.5H782.5V215.3H783.5V217.1H784.5V216.9H785.5V216.1H786.5V217.7H787.5V216H788.5V217.6H789.5H789.5H790.5H790.5H791.5V217.6H792.5V217.7H793.5V217.6H794.5V215.7H795.5V216.9H796.5V216.4H797.5V217.2H798.5V217H799.5V216.8H800.5V216.3H801.5V217.1H802.5V215.3H803.5V215.1H804.5V216.4H805.5V216.9H806.5V217.5H807.5V217.3H808.5V216.1H809.5V217.3H810.5V217.6H811.5V215.1H812.5V217.6H813.5V214.2H814.5V215.4H815.5V215.2H816.5V217.2H817.5V217.4H818.5V217.2H819.5V216.3H820.5V217H821.5V216.1H822.5V216.4H823.5V217.2H824.5V215.9H825.5H825.5H826.5V217.3H827.5V216.1H828.5V217.6H829.5V217.3H830.5V217.6H831.5V216.9H832.5V216.5H833.5V214.8H834.5V215.8H835.5V213.8H836.5V217H837.5V216.8H838.5V216.4H839.5V217.4H840.5V217.7H841.5V215.7H842.5V216.5H843.5V217.2H844.5V216.1H845.5V217.5H846.5V216.9H847.5V217.4H848.5V216.7H849.5V217.2H850.5V215.9H851.5V217.1H852.5V216.7H853.5V214.6H854.5V216.1H855.5V215.8H856.5V217.6H857.5V217.5H858.5V215.3H859.5V217.6H860.5V217.5H861.5V217.6H862.5V216.8H863.5V217.3H864.5V216.2H865.5V214.4H866.5V217.4H867.5V216.9H868.5V216.6H869.5V217.1H870.5H870.5H871.5V217.4H872.5V216.5H873.5V215.3H874.5V216.8H875.5V217.1H876.5V217.6H877.5V217H878.5V216.2H879.5V216.1H880.5V217.1H881.5V216.6H882.5V215.5H883.5V217.7H884.5V217.4H885.5V216.5H886.5V216.3H887.5V216.1H888.5V216.8H889.5V216.1H890.5V216.8H891.5V216.1H892.5V216.3H893.5V217.3H894.5V217.6H895.5V216.4H896.5V217.4H897.5H897.5H898.5V216.4H899.5V216.2H900.5V214.6H901.5V216.9H902.5V217.6H903.5H903.5H904.5V216.3H905.5V216.9H906.5V217.2H907.5V216.3H908.5V217.5H909.5V217.6H910.5V217H911.5V217.1H912.5V217H913.5V216.2H914.5V217.5H915.5V215.8H916.5H916.5H917.5V216.7H918.5V217.6H919.5V215.3H920.5V216H921.5V216.7H922.5V217.3H923.5H923.5H924.5V216.6H925.5V214.6H926.5V217.1H927.5V215.9H928.5V216.7H929.5V214.6H930.5V216.3H931.5V217.1H932.5H932.5H933.5V215.2H934.5V217.2H935.5V216.9H936.5V216.2H937.5V216H938.5V215.6H939.5V217.4H940.5V216.9H941.5V216.1H942.5V217.1H943.5V215.1H944.5V216.7H945.5V216H946.5V216.5H947.5V217.1H948.5V217.3H949.5V217.6H950.5V217.1H951.5V216.1H952.5V217.1H953.5V216.4H954.5V215.4H955.5V217.2H956.5V216.1H957.5V217.2H958.5V217.4H959.5V215.9H960.5V217.5H961.5V216.8H962.5V215.9H963.5V216.3H964.5V216.3H965.5V215.3H966.5V216.6H967.5V217.1H968.5V217.4H969.5V216.2H970.5V217.3H971.5V216.4H972.5V217.4H973.5V217.1H974.5V217.7H975.5V214.7H976.5V216.4H977.5V215.4H978.5V217.5H979.5V215.3H980.5V216.5H981.5V216.7H982.5V217.4H983.5V216.7H984.5V212.6H985.5V215.5H986.5V215.1H987.5V215.7H988.5V216.5H989.5V216.3H990.5V217.1H991.5V216.6H992.5V217.4H993.5V217.3H994.5V217.2H995.5V214.8H996.5V217.2H997.5V216.9H998.5V216.2H999.5V216.5H1000.5V217H1001.5V216.1H1002.5V216.1H1003.5V217.6H1004.5V215.8H1005.5V216.5H1006.5V215.2H1007.5V216.5H1008.5V215.5H1009.5V216.4H1010.5V217.1H1011.5V216.5H1012.5V215.9H1013.5V217.1H1014.5V217.7H1015.5V217.5H1016.5V216.8H1017.5V217.6H1018.5V217.4H1019.5V215.4H1020.5V215.1H1021.5V216.3H1022.5V217.5H1023.5V215.4H1024.5V214.3H1025.5V216.4H1026.5V215.4H1027.5V216.9H1028.5V213.5H1029.5V216.7H1030.5V215.7H1031.5V217.2H1032.5V216.6H1033.5V216.5H1034.5V216.7H1035.5V217.7H1036.5H1036.5H1037.5V215.4H1038.5H1038.5H1039.5V216.8H1040.5V216.3H1041.5V216H1042.5V216.8H1043.5V216.4H1044.5V215.9H1045.5V216.3H1046.5V217.6H1047.5V217.5H1048.5V217.6H1049.5V215.3H1050.5V216.8H1051.5V216.8H1052.5V216.6H1053.5V217.3H1054.5V217.2H1055.5H1055.5H1056.5V215.1H1057.5V214.9H1058.5V217.4H1059.5V217H1060.5V216.3H1061.5V217.1H1062.5V215.4H1063.5V217.1H1064.5V216.5H1065.5V215H1066.5V217.6H1067.5V217.2H1068.5V215.6H1069.5V216.9H1070.5V217.5H1071.5V217H1072.5V213.7H1073.5V215.9H1074.5V216.2H1075.5V214.8H1076.5V216.2H1077.5V216.4H1078.5V217.3H1079.5V216.2H1080.5V214.4H1081.5V215.5H1082.5V216.9H1083.5V217H1084.5V216.9H1085.5V217.5H1086.5V217.3H1087.5V216.9H1088.5V216.6H1089.5V214.6H1090.5V216.1H1091.5V216.9H1092.5V216.1H1093.5V215.1H1094.5V216.6H1095.5V217.6H1096.5V215.8H1097.5V214.6H1098.5V217.2H1099.5V215.5H1100.5V217.3H1101.5V217.6H1102.5H1102.5H1103.5V217.2H1104.5V217.6H1105.5V216.8H1106.5V215.9H1107.5V217.3H1108.5V215.2H1109.5V216H1110.5V215.6H1111.5V216.8H1112.5V217.6H1113.5V216.7H1114.5V214.6H1115.5V216H1116.5V217H1117.5V215.5H1118.5V216.2H1119.5V215.6H1120.5V216.5H1121.5V215.2H1122.5V216H1123.5H1123.5H1124.5V217.1H1125.5V217.7H1126.5V216.7H1127.5V215.6H1128.5V217.5H1129.5V215.9H1130.5V217H1131.5V217.7H1132.5V217.3H1133.5V216.9H1134.5V215.5H1135.5V215.8H1136.5V217.4H1137.5V216.2H1138.5V214.6H1139.5V217.4H1140.5V216.5H1141.5V216.3H1142.5V216.6H1143.5V216.7H1144.5H1144.5H1145.5V217.2H1146.5V215.9H1147.5V217.2H1148.5V214.3H1149.5V215.2H1150.5V217.1H1151.5V217.6H1152.5V216.8H1153.5V217.5H1154.5V217.1H1155.5V217.5H1156.5V214.7H1157.5V217.7H1158.5V215.9H1159.5V217.7H1160.5V214.8H1161.5V215.5H1162.5V217.7H1163.5V217.4H1164.5V217.4H1165.5V216.2H1166.5V217.4H1167.5V216.1H1168.5V217H1169.5V217.3H1170.5V216.2H1171.5V217H1172.5V216.1H1173.5V217.4H1174.5V216.8H1175.5V217.2H1176.5V216.2H1177.5V217.5H1178.5V216.7H1179.5V216.1H1180.5V215.9H1181.5V217.1H1182.5V217.5H1183.5V215.5H1184.5V216.6H1185.5H1185.5H1186.5V216.5H1187.5H1187.5H1188.5V217H1189.5V216.7H1190.5H1190.5H1191.5V217H1192.5V216.6H1193.5V216.8H1194.5V215.9H1195.5V216.7H1196.5V217.6H1197.5H1197.5H1198.5V214.5H1199.5V216.5H1200.5V217.5H1201.5V216H1202.5V217H1203.5V216.4H1204.5V216.5H1205.5V214.8H1206.5V217.4H1207.5V216.9H1208.5V216.3H1209.5V217.5H1210.5V216.4H1211.5V217.3H1212.5V215H1213.5V216.9H1214.5V215.8H1215.5V216.3H1216.5V216.2H1217.5V217.1H1218.5V216.3H1219.5V217.7H1220.5V216.8H1221.5V216.2H1222.5V217.4H1223.5V217.4H1224.5V216.5H1225.5V216.9H1226.5V216.1H1227.5V217.1H1228.5V216.5H1229.5V214.4H1230.5V216H1231.5V215.7H1232.5V216.3H1233.5V217.4H1234.5V216.3H1235.5V217.4H1236.5V214.8H1237.5V217.3H1238.5V216.2H1239.5V217H1240.5V215H1241.5V216.3H1242.5V217H1243.5V214.8H1244.5V216.8H1245.5V216.6H1246.5V216.2H1247.5V215.8H1248.5V215.3H1249.5V216.7H1250.5V216.2H1251.5V217.2H1252.5V217.1H1253.5V216.7H1254.5V217H1255.5V215.8H1256.5V217.2H1257.5V217.2H1258.5V217.4H1259.5V217.4H1260.5V216.6H1261.5V215.1H1262.5V217.2H1263.5V216.1H1264.5V215H1265.5V217.6H1266.5H1266.5H1267.5V217.4H1268.5V217.2H1269.5V216.5H1270.5V217H1271.5V215.6H1272.5V216.5H1273.5V217.7H1274.5V215.6H1275.5V217.5H1276.5V217.1H1277.5V217.2H1278.5V217.6H1279.5V217.7H1280.5V216.5H1281.5V215.9H1282.5V217.3H1283.5V215.6H1284.5V217.2H1285.5V215.3H1286.5V217.4H1287.5V217.7H1288.5V215H1289.5V215.7H1290.5V216H1291.5V216.2H1292.5V217H1293.5V217.3H1294.5V226.7H1293.5V227.4H1292.5V227.9H1291.5V227.3H1290.5V227.8H1289.5V228.4H1288.5V226.1H1287.5V226.3H1286.5V226.5H1285.5V227.3H1284.5V226.8H1283.5V226H1282.5V227.6H1281.5V226.9H1280.5V226.3H1279.5V227.4H1278.5V226.2H1277.5V227.7H1276.5V226.1H1275.5V226.6H1274.5V228.3H1273.5V228.1H1272.5V226.4H1271.5V226.2H1270.5V227.5H1269.5V227H1268.5V227.5H1267.5V226.6H1266.5V226.1H1265.5V229H1264.5V226.2H1263.5V226.7H1262.5V228.5H1261.5V226.9H1260.5V227.2H1259.5V226.1H1258.5V227.8H1257.5V226.2H1256.5V227.5H1255.5V226H1254.5V228.2H1253.5V225.9H1252.5H1252.5H1251.5V227.4H1250.5V226.6H1249.5V226.7H1248.5V226.1H1247.5H1247.5H1246.5V226.1H1245.5H1245.5H1244.5V226.8H1243.5V226.5H1242.5V226.2H1241.5V226.6H1240.5V226.1H1239.5V226.2H1238.5V226.5H1237.5V227.2H1236.5V227.7H1235.5V226.4H1234.5V227.9H1233.5V226.9H1232.5V226.5H1231.5V226.4H1230.5V226.9H1229.5V226.8H1228.5V229.4H1227.5V228.5H1226.5V227.1H1225.5V226.4H1224.5V226.8H1223.5V226.1H1222.5V227.1H1221.5V228.6H1220.5V227.3H1219.5V226.1H1218.5V227.7H1217.5V227.5H1216.5V225.9H1215.5V227.3H1214.5V226.7H1213.5V226.1H1212.5V226.4H1211.5V226.9H1210.5V227.3H1209.5V227.8H1208.5V226H1207.5V226.5H1206.5V225.9H1205.5V228.4H1204.5V227.9H1203.5V226.4H1202.5V227.2H1201.5V228.5H1200.5V226.8H1199.5V226.6H1198.5V226.3H1197.5V227.4H1196.5V227.9H1195.5V227.2H1194.5V227.4H1193.5V226.8H1192.5V226.6H1191.5V226.3H1190.5V227.1H1189.5V227.6H1188.5V226H1187.5V226.1H1186.5V229.8H1185.5V229.2H1184.5V229.4H1183.5V228.1H1182.5V227H1181.5V226.4H1180.5V227H1179.5V229H1178.5V226.9H1177.5V226.1H1176.5V228.7H1175.5V227H1174.5V226.8H1173.5V226H1172.5V226.3H1171.5V226.1H1170.5V226.9H1169.5H1169.5H1168.5V227.1H1167.5V228.2H1166.5V227.5H1165.5V227.9H1164.5V226.7H1163.5V226H1162.5V227.8H1161.5V226.4H1160.5V227H1159.5V227.1H1158.5V227.9H1157.5V228.5H1156.5V226.1H1155.5V226.9H1154.5V228.3H1153.5V226.5H1152.5V228.1H1151.5V226.4H1150.5V227.5H1149.5V229.1H1148.5V230H1147.5V226.3H1146.5V226.4H1145.5V226.2H1144.5V228.1H1143.5V227.2H1142.5V226.5H1141.5V226.8H1140.5H1140.5H1139.5V227.8H1138.5V227.6H1137.5V226.9H1136.5V227.2H1135.5V226.7H1134.5V226.3H1133.5H1133.5H1132.5V226.1H1131.5V226.6H1130.5V226.8H1129.5V225.9H1128.5H1128.5H1127.5V226.5H1126.5V226.9H1125.5V228.6H1124.5V226.9H1123.5H1123.5H1122.5V226.1H1121.5V225.9H1120.5V229.4H1119.5V226.3H1118.5V226.2H1117.5V227.2H1116.5V227.8H1115.5V226.3H1114.5V227.7H1113.5V226.5H1112.5V226.4H1111.5V227.4H1110.5V226H1109.5V226.6H1108.5V228H1107.5V227.3H1106.5V226.7H1105.5V226.7H1104.5V226.2H1103.5V227.7H1102.5V226.5H1101.5V226.6H1100.5V226.8H1099.5V226.1H1098.5H1098.5H1097.5V227.4H1096.5V226.1H1095.5V228H1094.5V229.6H1093.5V226H1092.5V227.4H1091.5V226.3H1090.5V227.5H1089.5V226.2H1088.5V226.7H1087.5V226.2H1086.5H1086.5H1085.5H1085.5H1084.5V226.6H1083.5V228.3H1082.5V226H1081.5V226.1H1080.5V225.9H1079.5H1079.5H1078.5V227H1077.5V226.6H1076.5V226.3H1075.5V227.8H1074.5V226.6H1073.5V229H1072.5V229.4H1071.5V230H1070.5V226H1069.5V226.3H1068.5V226.9H1067.5V226H1066.5V226.4H1065.5V227.3H1064.5V227.9H1063.5V227.2H1062.5V226H1061.5V227.1H1060.5H1060.5H1059.5V226.1H1058.5V227.2H1057.5V227.3H1056.5V227.1H1055.5V226.9H1054.5V227.7H1053.5V227.6H1052.5V226.2H1051.5V227.9H1050.5V227.7H1049.5V226.2H1048.5V227.7H1047.5V226.7H1046.5V227.4H1045.5V227H1044.5V226.8H1043.5V228.5H1042.5V227.3H1041.5V229H1040.5V226.6H1039.5V226H1038.5V227H1037.5V227.6H1036.5V226.6H1035.5V226.4H1034.5V227.3H1033.5V227.5H1032.5V229H1031.5V226.9H1030.5V229.3H1029.5V227H1028.5V226.3H1027.5V226H1026.5V227.9H1025.5V226H1024.5V226.5H1023.5H1023.5H1022.5V225.9H1021.5V226.5H1020.5V227.2H1019.5V227.1H1018.5V226.6H1017.5V228.7H1016.5V228.9H1015.5V228H1014.5V228.1H1013.5V227H1012.5V228.4H1011.5V226.7H1010.5V228H1009.5V226.4H1008.5V226.7H1007.5V226.3H1006.5V227H1005.5V228.5H1004.5V226.7H1003.5V227.2H1002.5V226.7H1001.5V226.8H1000.5V228.6H999.5V228.5H998.5V228H997.5V228.4H996.5V227.3H995.5V226H994.5V226.2H993.5V228.2H992.5V227.3H991.5V226.7H990.5V227.1H989.5V227.6H988.5V226.1H987.5V229H986.5V226H985.5V227.1H984.5V227.5H983.5V227.3H982.5V226.2H981.5V226.4H980.5V226.7H979.5V226.4H978.5V227.1H977.5V226.4H976.5V226.2H975.5V228.2H974.5V228.5H973.5V226.4H972.5V227.5H971.5V226H970.5V227.1H969.5V229.8H968.5V226.2H967.5V229.7H966.5V226.8H965.5V227.7H964.5V229.2H963.5V226.4H962.5V230.9H961.5V227.7H960.5V228H959.5V227.4H958.5V226.4H957.5V227.4H956.5V227.9H955.5V228.3H954.5V226.4H953.5V227H952.5V227.6H951.5V229.8H950.5V226.5H949.5V226.7H948.5V227.9H947.5V226.9H946.5V226.2H945.5H945.5H944.5V228.8H943.5V226H942.5V226.6H941.5V226.9H940.5V227.3H939.5V228.5H938.5V227.9H937.5V227.6H936.5V226.7H935.5V226.3H934.5V229H933.5V226.4H932.5V226.8H931.5V228.3H930.5V226.8H929.5V228.5H928.5V226.2H927.5V226H926.5H926.5H925.5V229.3H924.5V226.3H923.5V226.1H922.5V226.4H921.5V226H920.5V226.9H919.5V226.2H918.5V227.8H917.5V228.1H916.5V226H915.5V226.7H914.5V226.4H913.5V226.1H912.5V226.8H911.5V226.7H910.5V226.1H909.5V228.3H908.5V226.8H907.5V226.8H906.5V227.2H905.5V227.1H904.5V226.6H903.5V227.6H902.5V226.7H901.5V226.4H900.5V227.5H899.5V226.7H898.5H898.5H897.5V225.9H896.5V226.8H895.5V227.3H894.5V226.4H893.5V227.5H892.5V227.6H891.5H891.5H890.5V227.7H889.5V226H888.5V228.4H887.5V227.3H886.5V226.8H885.5V225.9H884.5V227.7H883.5V228.9H882.5V227.1H881.5V226.5H880.5V227.1H879.5V226H878.5V226.5H877.5V227.7H876.5V231.3H875.5V227.5H874.5V227.1H873.5V227H872.5V226.9H871.5V226.5H870.5V227.6H869.5V225.9H868.5V226.7H867.5H867.5H866.5V226.3H865.5V226.7H864.5V226.4H863.5V226.2H862.5V227.3H861.5V226.2H860.5V226.3H859.5V226.4H858.5H858.5H857.5V226H856.5V227.3H855.5V226.7H854.5V227.6H853.5V226.4H852.5V226.3H851.5V226.6H850.5V226.4H849.5V226.1H848.5V227.2H847.5V226.4H846.5V227.7H845.5V227.3H844.5V227.2H843.5V227.5H842.5V228.4H841.5V226.5H840.5V226.2H839.5V227.2H838.5V228.7H837.5V226H836.5V229.4H835.5V229.2H834.5V228.1H833.5V226.6H832.5V226.8H831.5V227.8H830.5V228H829.5V226.1H828.5V226.8H827.5V225.9H826.5V227.8H825.5V226.2H824.5V228.5H823.5V228.2H822.5V226.5H821.5V226.6H820.5V226.1H819.5V229.2H818.5V226.8H817.5V226.4H816.5V226.5H815.5H815.5H814.5V226.9H813.5V227.4H812.5V226.7H811.5V226.5H810.5V227.6H809.5V227.4H808.5V228.2H807.5V225.9H806.5V226.9H805.5V226.5H804.5V228H803.5V226H802.5V227H801.5V228.9H800.5V227.4H799.5V225.9H798.5V227.4H797.5V226.1H796.5V227.9H795.5V226.6H794.5V226.5H793.5V226.4H792.5V226.5H791.5V226.5H790.5V226.3H789.5V226.8H788.5V227.2H787.5V227.7H786.5V226.7H785.5V228.2H784.5V227.2H783.5V226.2H782.5V225.9H781.5V226.3H780.5V226.4H779.5V226.3H778.5V228.3H777.5V226.6H776.5V226.8H775.5V228.1H774.5V228.8H773.5V227.1H772.5V227H771.5V228.4H770.5V226.5H769.5V227.9H768.5V226.7H767.5V228.4H766.5V226H765.5V227.6H764.5V227.2H763.5V227.3H762.5V227.8H761.5V226.6H760.5V227.5H759.5V226.8H758.5V226.5H757.5V226.4H756.5V227.5H755.5V226.6H754.5V226.4H753.5V227.5H752.5V226.6H751.5V226.2H750.5V226H749.5V227.4H748.5V226.6H747.5V226.9H746.5V226.3H745.5H745.5H744.5V226.4H743.5V227.3H742.5V227.1H741.5V227.2H740.5V226.6H739.5V228.6H738.5V228.1H737.5V226.4H736.5V226.2H735.5V228.2H734.5V226.4H733.5V227.3H732.5V226.6H731.5V226.9H730.5V226.4H729.5V226.6H728.5V226.3H727.5H727.5H726.5V227.1H725.5V228.2H724.5V226H723.5V228.4H722.5V227.3H721.5V228.3H720.5V228.6H719.5V227H718.5V226.2H717.5V228.2H716.5V226.4H715.5V227.1H714.5V228.2H713.5V227.7H712.5V229.2H711.5V226.5H710.5V227.6H709.5V226.9H708.5H708.5H707.5V227H706.5V226.2H705.5V226.8H704.5V227.4H703.5V228.3H702.5V227.4H701.5V227.6H700.5V226.5H699.5V226.6H698.5V226.5H697.5V226.2H696.5V228H695.5V226.3H694.5V227.2H693.5V228H692.5V226.9H691.5V228.1H690.5V227.7H689.5V228.1H688.5V228.4H687.5V227.4H686.5V225.9H685.5V228.2H684.5V227.3H683.5V226H682.5V228.4H681.5V226H680.5V228H679.5V226.9H678.5V227H677.5V226.7H676.5V227.6H675.5V230.2H674.5V226.6H673.5V227.2H672.5V226.2H671.5V228.9H670.5V227.3H669.5V227.2H668.5V226.6H667.5V228.2H666.5V226.4H665.5V226.1H664.5V226.5H663.5V226.1H662.5V227.3H661.5V227.6H660.5V228H659.5V228.2H658.5V226.4H657.5V227.3H656.5V226.6H655.5V226.7H654.5V225.9H653.5V227H652.5V227.2H651.5V226.8H650.5V226.3H649.5H649.5H648.5V226H647.5V227.6H646.5V228.3H645.5V226.7H644.5H644.5H643.5V227H642.5V226.5H641.5V226.8H640.5V228H639.5V226.6H638.5V226.3H637.5V226.3H636.5V226.7H635.5V229.9H634.5V226.2H633.5V226.8H632.5V227.7H631.5V228.1H630.5V226.8H629.5V226.3H628.5H628.5H627.5V226.6H626.5V227H625.5V228.2H624.5V226.6H623.5V227.3H622.5V226.6H621.5V225.5H620.5V226.7H619.5V226.3H618.5H618.5H617.5V226.8H616.5V227.4H615.5V228.4H614.5V228.5H613.5V229.9H612.5V230.5H611.5V231.4H610.5V232.5H609.5V234.7H608.5V235.2H607.5V238.1H606.5V239.8H605.5V243.5H604.5V246H603.5V249.8H602.5V253.8H601.5V257.2H600.5V261.4H599.5V266.1H598.5V269.4H597.5V274.3H596.5V279.4H595.5V284.1H594.5V288.9H593.5V293.8H592.5V296.1H591.5V299.2H590.5V301.2H589.5V301.5H588.5V301H587.5V301.2H586.5V299.3H585.5V296.5H584.5V294.5H583.5V294.4H582.5V293.3H581.5V293.6H580.5H580.5H579.5H579.5H578.5V294.7H577.5V295.1H576.5V295.6H575.5V293.7H574.5V296H573.5V293.4H572.5V293H571.5V293.4H570.5V293.5H569.5V293.1H568.5V294.7H567.5V294.2H566.5V293.1H565.5V293.5H564.5V293.9H563.5V294.6H562.5V294.3H561.5V294.6H560.5V296H559.5V293.4H558.5V294.7H557.5V293.4H556.5V294.6H555.5V293.2H554.5V293.6H553.5V294.7H552.5V294H551.5V293.7H550.5V296.2H549.5V294.4H548.5V293.6H547.5V293.8H546.5V296.9H545.5V293.7H544.5V293H543.5V293.2H542.5V293.8H541.5V293.7H540.5V293.5H539.5V293.9H538.5H538.5H537.5V293.1H536.5V294.5H535.5V293.3H534.5V295.9H533.5V294H532.5V293.4H531.5V296.1H530.5V293.7H529.5V293.6H528.5V296.1H527.5V293.8H526.5V293.1H525.5V294.1H524.5V293.1H523.5V294.3H522.5V293.9H521.5V293.4H520.5V293.8H519.5V294.1H518.5V294.2H517.5V294.1H516.5V293.1H515.5V293.4H514.5V294.1H513.5V293.3H512.5V293.2H511.5H511.5H510.5V293.4H509.5V294.6H508.5V295.4H507.5V293H506.5V293.1H505.5V294.7H504.5V294.8H503.5V293.1H502.5V293.8H501.5V293.9H500.5V294.2H499.5V294.5H498.5V294.1H497.5V293H496.5V294.5H495.5V296.5H494.5V293.4H493.5V293.8H492.5V293.4H491.5V294.4H490.5V295.6H489.5V294.2H488.5V293.1H487.5V293.7H486.5V293.1H485.5V293.4H484.5V295.1H483.5V294.3H482.5V294.8H481.5V293.3H480.5H480.5H479.5V293.1H478.5V293.9H477.5V293.2H476.5V293.3H475.5V293.2H474.5V293.2H473.5V293.6H472.5V293.4H471.5V294.3H470.5V293.4H469.5V294.3H468.5V293.5H467.5V293.3H466.5V294.3H465.5V295.2H464.5V294H463.5V293.8H462.5V294.9H461.5V294.3H460.5V293.3H459.5V293.6H458.5V293.3H457.5V293.5H456.5V294.8H455.5V293.1H454.5V293.6H453.5V295.1H452.5V295.9H451.5V293.2H450.5V294.5H449.5V293.3H448.5V293.5H447.5V294.7H446.5V293.1H445.5V293.9H444.5V295.8H443.5V293.7H442.5V293.9H441.5V294.7H440.5V293.6H439.5V293.9H438.5V293.3H437.5V294.7H436.5V294.9H435.5V295H434.5V293.4H433.5V293.8H432.5V294.5H431.5V294.2H430.5V294.6H429.5V293.2H428.5V295.6H427.5V293.4H426.5V294H425.5V295.1H424.5V295.8H423.5V296.1H422.5V294H421.5H421.5H420.5V293.5H419.5V294.1H418.5V295H417.5V293.8H416.5V294.7H415.5V293.6H414.5V294H413.5V294.2H412.5V293.4H411.5V293.2H410.5V294.1H409.5V293.4H408.5V294H407.5V294.2H406.5V295.3H405.5V293.5H404.5V294.9H403.5V295.5H402.5V295.8H401.5V293.5H400.5V294.3H399.5V294H398.5V293.5H397.5V294.3H396.5V293.6H395.5V298H394.5V295.5H393.5V296.8H392.5V294.2H391.5V296H390.5V294.7H389.5V295H388.5V293.8H387.5V294.4H386.5V294.3H385.5V292.1H384.5V291.5H383.5V290.9H382.5V292.7H381.5V292.4H380.5V293.3H379.5V292.6H378.5V293.2H377.5V293.9H376.5V295.6H375.5V295.2H374.5V293.9H373.5V293.7H372.5V293.2H371.5V291H370.5V290.6H369.5V289.3H368.5V289H367.5V288.8H366.5V289.4H365.5V292.3H364.5V293.4H363.5V294.7H362.5V295.7H361.5H361.5H360.5V295.1H359.5V294.6H358.5V293.8H357.5V293.7H356.5V290.6H355.5V287.5H354.5V285.5H353.5V283.7H352.5V284.2H351.5V286.4H350.5V289H349.5V292.3H348.5V294.3H347.5V296.1H346.5V297.3H345.5H345.5H344.5H344.5H343.5V298.2H342.5V296.4H341.5V294.6H340.5V292.4H339.5V289.8H338.5V286.3H337.5V283.2H336.5V280.9H335.5V278H334.5V276.9H333.5V279.1H332.5V282.8H331.5V286H330.5V290.5H329.5V294.9H328.5V298.5H327.5V301.7H326.5V304H325.5V305.5H324.5V306H323.5V307H322.5V306.4H321.5V304.3H320.5V303.1H319.5V300H318.5V297.9H317.5V294H316.5V288.5H315.5V282.9H314.5V277.8H313.5V272.6H312.5V266.7H311.5V261.4H310.5V256.1H309.5V250.6H308.5V245.6H307.5V240.1H306.5V235H305.5V229.6H304.5V227.2H303.5V227.4H302.5V227.5H301.5V226.3H300.5V229.2H299.5V226.1H298.5V226.7H297.5V226.5H296.5V226.1H295.5V226.4H294.5V226.4H293.5V226H292.5V226.4H291.5V227.4H290.5V227.7H289.5V227H288.5V226.7H287.5H287.5H286.5V226.9H285.5V226.4H284.5V226.2H283.5V226.4H282.5V228.1H281.5V226.3H280.5V226.6H279.5V228.3H278.5V227.5H277.5V226.1H276.5V227.5H275.5V226.4H274.5V226.1H273.5V226.5H272.5V227.3H271.5V226.6H270.5V227.6H269.5V226.9H268.5V227.2H267.5V226.3H266.5V228.3H265.5V226.3H264.5V226.2H263.5V227.8H262.5V228.9H261.5V228H260.5H260.5H259.5V226.2H258.5V227H257.5V227.4H256.5V226.2H255.5V226.9H254.5V227.8H253.5V227.1H252.5V227.7H251.5V228.7H250.5V227.3H249.5V227.4H248.5V226.7H247.5V226.4H246.5V226.5H245.5V226.3H244.5V229.5H243.5V226.5H242.5V226.2H241.5V226.6H240.5V227.8H239.5V227.8H238.5V227.7H237.5V228.4H236.5V226H235.5V226.9H234.5V226.3H233.5V226.9H232.5V227.7H231.5V227.8H230.5V228H229.5V227.2H228.5V226.8H227.5V226.5H226.5V227H225.5V226.7H224.5V227.3H223.5V227.2H222.5V226.1H221.5V226.8H220.5V226.5H219.5V227.4H218.5V226.5H217.5V226.3H216.5V227.4H215.5V226H214.5V227.3H213.5V227.2H212.5V226.8H211.5V226.1H210.5V228H209.5V226.2H208.5V227.9H207.5V226.5H206.5V228.2H205.5V228.9H204.5V226.7H203.5V227H202.5V226.6H201.5V225.9H200.5V226.6H199.5V227.7H198.5V227.2H197.5V227.6H196.5V226.7H195.5V226.8H194.5V226.2H193.5V226.5H192.5V228.4H191.5V226.5H190.5V226.9H189.5V226.7H188.5V226H187.5V227.6H186.5V226H185.5V226.6H184.5V226.8H183.5V226.4H182.5V226.3H181.5V226.5H180.5V228.8H179.5V228.5H178.5V226.3H177.5V226.2H176.5V228.4H175.5V227.4H174.5V226.1H173.5V228.2H172.5V226.9H171.5V226.6H170.5V226.2H169.5V226.7H168.5V229H167.5V227.7H166.5V227.5H165.5V227H164.5V227.4H163.5V226H162.5V226.9H161.5V226H160.5V226.3H159.5V227.4H158.5V226.5H157.5H157.5H156.5V226.1H155.5V226.9H154.5V226.4H153.5V228.2H152.5V227.2H151.5V226.9H150.5V226.5H149.5V226.9H148.5V228.9H147.5V225.9H146.5V227.1H145.5V226.7H144.5V226.3H143.5V228.9H142.5V226H141.5V227.5H140.5V227.6H139.5V227.9H138.5V228.1H137.5V226.4H136.5V228H135.5V227.5H134.5V226.5H133.5V226H132.5V229H131.5V227.4H130.5V227.9H129.5V227.7H128.5V226.5H127.5V226.4H126.5H126.5H125.5V226.1H124.5V225.9H123.5V228H122.5V227.6H121.5V226.5H120.5V227.4H119.5V226.5H118.5V226.3H117.5H117.5H116.5H116.5H115.5V227.8H114.5V226.6H113.5V227.3H112.5V226.9H111.5V228H110.5V226H109.5V226.1H108.5V227.8H107.5V228.2H106.5V227.6H105.5V226.5H104.5V229.2H103.5V226.4H102.5V226.2H101.5V225.9H100.5V226.6H99.5V228.9H98.5V228.1H97.5V228.2H96.5V228.9H95.5V227.5H94.5Z" fill="#9999ff"/>
<path d="M94.5 165.1H95.5V163H96.5V164.9H97.5V164.7H98.5V164.2H99.5V165.2H100.5V165.1H101.5V164.2H102.5V164.8H103.5V164.3H104.5V165.3H105.5V165.3H106.5V163.4H107.5H107.5H108.5V164.6H109.5V164.1H110.5V163.4H111.5V162.8H112.5V162.9H113.5V165.1H114.5V165.4H115.5V163.8H116.5V164.7H117.5V162.9H118.5V165.3H119.5V165.4H120.5V162.3H121.5V162H122.5V163.7H123.5V163.9H124.5V165.2H125.5V165H126.5V164.8H127.5V164.9H128.5V163.9H129.5V164.8H130.5V162.1H131.5V165.1H132.5V164H133.5V164.2H134.5V164.9H135.5V163.9H136.5V165.2H137.5H137.5H138.5V162.4H139.5V164.8H140.5V164.9H141.5V163.5H142.5V163.8H143.5V164.6H144.5V164.3H145.5V163.4H146.5V163.7H147.5H147.5H148.5V162.6H149.5V162.3H150.5V165H151.5V165.3H152.5V163.4H153.5V162.9H154.5V163.7H155.5V165.4H156.5V163.3H157.5V163.7H158.5V164.5H159.5V163.7H160.5H160.5H161.5V164.9H162.5V163.4H163.5V165.3H164.5V165H165.5V165.4H166.5V164.8H167.5V163.7H168.5V164.1H169.5V165H170.5V164.9H171.5V163.7H172.5V164.2H173.5V164.5H174.5V163.1H175.5V162.8H176.5V163.6H177.5V165H178.5V162.5H179.5V163.1H180.5V164.2H181.5V165.3H182.5V164.3H183.5V164.6H184.5V164.3H185.5V164.6H186.5V163.4H187.5V164.7H188.5V164.2H189.5V164.5H190.5V163.4H191.5V163.2H192.5V165.2H193.5V164.6H194.5V163.7H195.5V164.1H196.5V164.5H197.5V164.2H198.5V165.2H199.5V164.2H200.5V163.6H201.5V165.1H202.5V163.9H203.5V173.6H202.5V172.3H201.5V175.5H200.5V173.8H199.5H199.5H198.5V172.7H197.5V172.6H196.5V173.2H195.5V172.3H194.5V173.2H193.5V173H192.5V173.3H191.5V173H190.5V173.3H189.5V172.1H188.5V173.2H187.5V173.5H186.5V172.3H185.5V174.7H184.5V174.1H183.5V172.5H182.5V172.7H181.5V172.4H180.5V173.3H179.5V173.4H178.5V172.2H177.5V174.4H176.5V173.4H175.5V172.6H174.5V175.5H173.5V173.1H172.5V172.9H171.5V172.8H170.5V172.7H169.5V172.4H168.5V174.2H167.5V172.5H166.5V172.5H165.5H165.5H164.5V173.7H163.5V172.8H162.5V173.4H161.5V172.6H160.5V172.1H159.5V172.4H158.5V172.2H157.5V172.4H156.5V172.1H155.5V173H154.5V173.5H153.5V174.2H152.5V173.8H151.5V172.8H150.5V172.5H149.5V172.2H148.5V175.4H147.5V174.4H146.5V172.7H145.5V175.4H144.5V172.1H143.5V174.5H142.5V172.3H141.5V173.8H140.5V172.7H139.5V173H138.5H138.5H137.5V173.7H136.5V174H135.5V172.8H134.5V174H133.5V173.6H132.5V172.1H131.5V172.5H130.5V172.9H129.5V172.3H128.5V172.5H127.5H127.5H126.5V174.4H125.5V172.8H124.5V173.2H123.5V173.7H122.5V173.4H121.5H121.5H120.5V172.1H119.5V173H118.5V174.3H117.5V172.8H116.5V172.5H115.5V173.3H114.5V172.3H113.5V173.3H112.5V175.4H111.5V172.3H110.5V172.7H109.5V172.8H108.5V172.5H107.5V173.1H106.5H106.5H105.5V173.8H104.5V172.3H103.5V173.3H102.5V173.7H101.5V172.8H100.5H100.5H99.5V174.5H98.5V172.7H97.5V172.3H96.5V173.2H95.5V172.7H94.5ZM206.5 379.4H207.5V391.1H208.5V397.3H209.5V398.6H210.5V401.7H211.5H211.5H212.5V403.1H213.5V404.1H214.5V404.6H215.5V404.8H216.5V404.7H217.5V405.8H218.5V405.3H219.5V406H220.5V406.8H221.5V406.7H222.5V405.9H223.5V406.3H224.5V407.5H225.5V407.8H226.5V405.7H227.5V407.6H228.5V406.9H229.5V407.4H230.5V407.1H231.5V407.5H232.5V407.3H233.5V404.4H234.5V408H235.5V407H236.5V407.8H237.5V407.5H238.5H238.5H239.5V407.4H240.5H240.5H241.5V407.1H242.5V406.2H243.5V406.6H244.5V407.3H245.5V406.1H246.5V407.9H247.5V406.2H248.5V406.6H249.5V405.6H250.5V407.8H251.5V406.5H252.5V407.6H253.5V407.4H254.5V407H255.5V407.3H256.5V407H257.5V404.4H258.5V406.7H259.5V406.2H260.5V406.7H261.5V407.5H262.5V407.2H263.5V406.6H264.5V407.1H265.5V406.6H266.5V407.2H267.5V406.6H268.5V407.2H269.5V405.2H270.5V406.3H271.5V407.4H272.5V406.5H273.5V405.3H274.5V407H275.5V406.9H276.5V406.5H277.5V405.9H278.5V406.9H279.5V407.1H280.5V406.7H281.5V406.9H282.5V405.5H283.5V403.8H284.5V407.1H285.5V406.1H286.5V406.8H287.5V405.5H288.5V407H289.5V405.3H290.5V406.9H291.5V406.6H292.5V405.5H293.5V406.6H294.5V405.7H295.5V406.9H296.5V405.8H297.5V405.9H298.5V406.2H299.5V404.6H300.5V405.4H301.5V404.9H302.5V406.2H303.5V406H304.5V406.4H305.5V406.6H306.5V406.2H307.5H307.5H308.5V404.8H309.5V406.1H310.5V405.5H311.5V404.2H312.5V405.8H313.5V404.3H314.5V404.5H315.5V406H316.5V405.7H317.5V405.9H318.5V405.5H319.5V402.9H320.5V404.8H321.5V406.1H322.5V405.9H323.5V405H324.5V404.6H325.5V403.8H326.5V404.5H327.5V405H328.5V405.9H329.5H329.5H330.5V405.5H331.5V405.6H332.5V404.3H333.5V404.7H334.5V405.4H335.5V405.8H336.5V402.7H337.5V405.3H338.5V406H339.5V405.7H340.5H340.5H341.5V405.1H342.5V404.7H343.5H343.5H344.5H344.5H345.5V402.5H346.5V405.5H347.5V404.4H348.5V405.8H349.5V403.3H350.5V405.4H351.5V404.3H352.5V405.4H353.5V404.7H354.5V404.9H355.5V403.6H356.5V404.1H357.5V403.4H358.5V404.4H359.5V405.5H360.5V403H361.5V404.8H362.5V403.6H363.5V403.2H364.5V405.4H365.5V403.3H366.5V403.9H367.5V404.5H368.5V404H369.5V405.2H370.5H370.5H371.5H371.5H372.5V404.4H373.5V403.9H374.5V402.7H375.5V403.2H376.5V404.8H377.5V405H378.5V404.7H379.5V403.8H380.5V404.1H381.5V404.7H382.5V404.5H383.5V402.5H384.5V404.2H385.5V403.2H386.5V404.8H387.5V404.7H388.5V402.3H389.5V402.8H390.5V404H391.5V404.1H392.5V404.8H393.5V404.6H394.5V404.3H395.5H395.5H396.5V404.5H397.5V404.4H398.5V402.5H399.5V403.8H400.5V403.4H401.5V403.1H402.5V403.9H403.5V403.6H404.5V402.5H405.5V401.9H406.5V403.9H407.5V404H408.5V403.9H409.5V404.5H410.5V401.6H411.5V403.7H412.5V403.3H413.5V403.9H414.5V403.3H415.5V403.2H416.5V403.5H417.5V404.1H418.5V403.4H419.5V403.2H420.5V403.6H421.5V403.3H422.5V403.5H423.5V399.4H424.5V403.6H425.5V402.7H426.5V402.6H427.5V403.3H428.5V404.1H429.5V403.1H430.5V402.3H431.5V403.7H432.5V403.6H433.5V402.5H434.5V402.3H435.5V402.9H436.5H436.5H437.5V403.3H438.5V403.2H439.5V401.8H440.5V403.4H441.5V403.2H442.5V401.5H443.5V402.2H444.5V402H445.5V403.2H446.5V402.1H447.5V402.3H448.5V401.9H449.5V403.1H450.5V402.4H451.5V401.7H452.5V402.1H453.5V401.1H454.5V402.3H455.5V403.1H456.5V401.8H457.5H457.5H458.5V403.3H459.5V402.1H460.5V401.2H461.5V402H462.5V402.8H463.5V399.8H464.5V402.8H465.5V400.3H466.5V403H467.5V401.7H468.5H468.5H469.5V402.7H470.5V402.6H471.5V403.1H472.5V402.5H473.5V402.3H474.5V402.6H475.5V401.3H476.5V400.5H477.5H477.5H478.5V402.6H479.5V401.5H480.5V402.5H481.5V400.9H482.5V402.9H483.5V401.7H484.5V402.6H485.5V400.9H486.5V402.7H487.5V401.6H488.5H488.5H489.5V402.5H490.5V401.7H491.5V402.5H492.5V400.8H493.5V399.9H494.5V402.3H495.5V402.1H496.5V402.7H497.5V400.6H498.5V401.7H499.5V401.2H500.5V402.4H501.5V402H502.5V411.4H501.5V409.7H500.5V411.3H499.5V411.8H498.5V412.4H497.5V409.4H496.5V411.1H495.5V410.7H494.5V411.7H493.5V409.8H492.5V411.2H491.5V410.1H490.5V410.7H489.5V410.2H488.5V412.6H487.5V410.1H486.5H486.5H485.5V411.1H484.5V411.3H483.5V410H482.5V409.9H481.5V409.8H480.5V409.9H479.5V410.1H478.5V411.5H477.5V412H476.5V410.4H475.5V411.1H474.5V410.2H473.5V410.9H472.5V410.2H471.5V411.2H470.5V411.6H469.5V410.9H468.5V410.8H467.5V410.5H466.5V411.8H465.5V411H464.5V410.2H463.5V411.3H462.5V410.9H461.5V410.5H460.5V412.4H459.5V410.4H458.5V413.5H457.5V410.5H456.5V410.3H455.5V412.4H454.5V410.4H453.5H453.5H452.5V411.5H451.5H451.5H450.5V411.9H449.5V411.8H448.5V411.5H447.5V412.8H446.5V411.2H445.5V411H444.5V412.4H443.5V411.4H442.5V411.6H441.5V412H440.5V410.6H439.5V411.3H438.5V411.7H437.5V410.8H436.5V412.1H435.5V411H434.5V412.3H433.5V413H432.5V412.9H431.5V411.7H430.5V412H429.5V411.4H428.5V411.1H427.5V412.7H426.5V411.6H425.5V414H424.5V411.1H423.5V412.7H422.5V411.9H421.5V411.7H420.5V411.8H419.5V412.1H418.5V413H417.5V411.5H416.5V411.8H415.5V412.5H414.5V412.6H413.5V412.4H412.5V411.5H411.5V413.7H410.5V411.8H409.5V412.2H408.5V412H407.5V413.2H406.5V411.9H405.5V412.1H404.5V412.9H403.5V412.3H402.5V411.7H401.5V411.3H400.5V411.5H399.5V413.1H398.5V413.2H397.5V411.8H396.5V413.5H395.5V412.4H394.5V412.3H393.5V411.5H392.5V412.3H391.5V411.8H390.5V412.5H389.5V412.5H388.5V412.9H387.5V411.7H386.5V412.9H385.5V413.4H384.5V412.2H383.5V411.9H382.5V412H381.5V412.4H380.5V413.3H379.5V412.4H378.5V412.1H377.5V413.6H376.5V412.7H375.5V412.4H374.5V413.4H373.5V412.7H372.5V415.2H371.5V412.1H370.5V413.9H369.5V412.5H368.5V414.5H367.5V412.6H366.5V412.5H365.5V412.2H364.5V413.1H363.5V412.2H362.5V412.4H361.5V413.9H360.5V414.3H359.5V413.8H358.5V412.8H357.5V413.3H356.5V414.6H355.5V412.8H354.5V413.1H353.5V414.3H352.5V413H351.5V412.4H350.5V415.3H349.5V412.8H348.5V414.2H347.5V413.4H346.5V415H345.5V413.7H344.5V413.6H343.5V415.1H342.5V412.7H341.5V413.6H340.5V413.3H339.5V413.4H338.5V415.6H337.5V412.8H336.5V415.1H335.5V412.9H334.5V414.3H333.5V413.2H332.5V413H331.5V414.1H330.5V415.1H329.5V412.9H328.5V413.5H327.5V413.4H326.5H326.5H325.5V415.7H324.5V413.1H323.5V413.7H322.5V413.9H321.5V414H320.5V413.2H319.5H319.5H318.5V413.3H317.5V413.1H316.5V413.4H315.5V413.3H314.5V414.3H313.5V417.1H312.5V414.5H311.5V413.5H310.5V414.5H309.5V413.8H308.5V413.4H307.5V414.3H306.5V413.5H305.5V414.3H304.5V414H303.5V416.5H302.5V415.3H301.5V416.7H300.5V415.9H299.5V413.5H298.5H298.5H297.5V414H296.5V414.5H295.5V414H294.5V414.1H293.5V414.9H292.5V415H291.5V414.1H290.5V417H289.5V415.8H288.5V415.4H287.5H287.5H286.5V415.9H285.5V415.1H284.5V414.3H283.5V415.2H282.5V416.5H281.5V417.1H280.5V416H279.5V413.9H278.5V414.1H277.5V414.3H276.5V414.1H275.5V415.1H274.5V416.6H273.5V415.4H272.5V414.3H271.5V414.5H270.5V415.7H269.5V414.4H268.5V415.1H267.5V415.5H266.5V417.3H265.5V415H264.5V414.2H263.5V415H262.5V414.5H261.5V414.7H260.5V415.3H259.5V414.4H258.5V415.1H257.5V415.6H256.5V414.6H255.5V415.1H254.5V417.3H253.5V417.5H252.5V417.3H251.5V415H250.5V415.5H249.5V416.2H248.5V416.7H247.5V415.8H246.5V416.4H245.5V418H244.5V414.7H243.5V416H242.5V415.1H241.5V415.3H240.5V417.5H239.5V415.4H238.5V416.2H237.5V418.3H236.5V415.7H235.5V418.6H234.5V415.3H233.5V416.4H232.5V415.8H231.5V415H230.5V414.8H229.5V415.2H228.5V415.8H227.5V416.6H226.5V414.5H225.5V415H224.5V414.3H223.5V415.5H222.5V414.2H221.5V415.5H220.5V413.9H219.5V413.5H218.5V413.6H217.5V412.9H216.5V414.1H215.5V413.5H214.5V411.7H213.5V412.6H212.5V410.1H211.5V410.6H210.5V408H209.5V406.2H208.5V403.1H207.5V395.4H206.5ZM508.5 187.8H509.5V180.1H510.5V174H511.5V170.2H512.5V166.2H513.5V163H514.5V162.5H515.5V162.3H516.5V159H517.5V160.3H518.5V160.9H519.5V160.1H520.5V156.6H521.5V158.9H522.5V158.3H523.5V160.2H524.5V158.8H525.5V160.8H526.5V159.8H527.5V158.3H528.5V158.2H529.5V159.4H530.5V158.9H531.5V160.4H532.5V161.2H533.5H533.5H534.5V161.4H535.5V161.7H536.5H536.5H537.5V162H538.5V162.5H539.5V159.7H540.5V162.5H541.5V162.7H542.5V163H543.5V162.6H544.5H544.5H545.5V163.2H546.5V162.3H547.5V162.1H548.5V163.6H549.5V163.8H550.5V162.5H551.5V161.4H552.5V163.5H553.5V164.2H554.5V163.7H555.5H555.5H556.5V164.5H557.5V163H558.5V161.2H559.5V164H560.5V163.3H561.5V162.9H562.5V164.9H563.5V164H564.5H564.5H565.5V163.2H566.5V164H567.5H567.5H568.5V164.9H569.5V163H570.5V165.3H571.5V164.6H572.5V164.5H573.5V165.4H574.5V165.2H575.5V162.3H576.5V165.3H577.5V165.1H578.5V164.9H579.5V164.6H580.5V165.8H581.5V165.5H582.5V165.8H583.5V165.1H584.5V165.5H585.5V165H586.5V165.9H587.5V165H588.5V164.8H589.5V165.7H590.5V165.3H591.5V164.3H592.5V164.3H593.5V165.2H594.5V165.8H595.5V166.4H596.5V165.9H597.5V165.2H598.5V164.5H599.5V165.5H600.5V166.2H601.5V165.6H602.5V165.8H603.5V165.1H604.5V165.5H605.5V166.3H606.5V165.3H607.5V162.1H608.5V166.2H609.5V164.8H610.5V165.7H611.5V164.3H612.5V165.1H613.5V164.4H614.5H614.5H615.5V165.2H616.5V165.8H617.5V165.3H618.5V165.7H619.5V166.7H620.5V165.6H621.5V165.2H622.5V166H623.5V165.2H624.5V165.7H625.5V166.2H626.5V165.2H627.5V166.7H628.5V164.7H629.5V163.8H630.5V165.6H631.5V164.1H632.5V165.1H633.5V165.5H634.5V165.4H635.5V166H636.5V166.5H637.5V166.7H638.5V166.1H639.5V166.5H640.5V165.5H641.5V166H642.5V166.8H643.5V166.9H644.5V164.7H645.5V166.2H646.5V166.9H647.5V166.5H648.5V166.7H649.5V166.9H650.5V166.1H651.5V166H652.5V165.9H653.5V167.1H654.5V165.7H655.5V165.2H656.5V165H657.5V166.4H658.5V167.2H659.5V166.9H660.5V166.8H661.5V166.1H662.5H662.5H663.5V167.2H664.5V164.7H665.5H665.5H666.5V165.4H667.5V167.3H668.5H668.5H669.5V165.9H670.5V167.1H671.5V165.3H672.5V166.6H673.5V166.9H674.5V166.2H675.5V166.5H676.5V166.7H677.5V165.8H678.5V166.4H679.5V166H680.5V166.3H681.5V167H682.5V166.7H683.5V166.6H684.5H684.5H685.5V167.1H686.5V165.5H687.5V166.1H688.5V167.1H689.5V165.1H690.5V165.6H691.5V167.1H692.5V166.6H693.5V167.3H694.5V166.8H695.5V165.6H696.5V166.4H697.5V165.7H698.5V166.8H699.5V164H700.5V164.7H701.5V167H702.5V165.9H703.5V166.1H704.5V166.9H705.5V167.1H706.5V164.4H707.5V165.5H708.5V166.5H709.5V165.9H710.5V165.4H711.5V166.8H712.5V166.1H713.5V166.8H714.5V166.7H715.5V166H716.5V166.4H717.5V165.6H718.5V166.1H719.5V166.9H720.5V167.2H721.5V165.7H722.5V165.3H723.5V165.6H724.5V167H725.5V166.2H726.5V166.3H727.5H727.5H728.5V167.1H729.5V166H730.5V165.6H731.5V164.9H732.5V166.7H733.5V166.3H734.5V165.7H735.5V165.5H736.5V164.6H737.5V166.5H738.5V166H739.5V167H740.5V165.6H741.5H741.5H742.5H742.5H743.5V167H744.5V167.2H745.5V165.9H746.5V165.7H747.5V167.1H748.5V166.9H749.5H749.5H750.5V165.5H751.5V167H752.5V165.8H753.5V167.3H754.5V166H755.5V167.1H756.5H756.5H757.5V165.8H758.5V163.9H759.5V164.9H760.5V166.5H761.5V167.2H762.5V166.8H763.5V166.7H764.5V165.2H765.5V166.8H766.5V165.4H767.5V167.4H768.5V167.2H769.5V166.6H770.5V167.2H771.5V166.9H772.5V167.1H773.5V167.3H774.5V165.7H775.5V166.4H776.5V166.9H777.5H777.5H778.5V164.2H779.5V166.1H780.5V167.1H781.5V165.9H782.5V166.2H783.5V167.2H784.5V167.2H785.5V166.1H786.5V166.9H787.5V166.6H788.5V164.9H789.5V167.2H790.5V167.3H791.5V166.1H792.5V165.9H793.5V167.4H794.5V164.6H795.5V166.2H796.5V166.7H797.5V166.9H798.5V167.3H799.5V164.5H800.5V166.7H801.5V165.8H802.5V167.1H803.5V167.3H804.5V164.7H805.5V166.9H806.5V166.7H807.5V167.3H808.5V164.4H809.5V164.7H810.5V167H811.5V166H812.5V166.5H813.5V164.7H814.5V166.8H815.5V166.4H816.5V165.6H817.5V166.4H818.5V165.5H819.5H819.5H820.5V166.3H821.5V166.5H822.5V167.2H823.5V167.1H824.5V166.9H825.5V167.1H826.5V165.3H827.5V167.3H828.5V165.8H829.5V166.3H830.5V166.1H831.5V166.2H832.5V167.4H833.5V166H834.5V165.4H835.5V166.8H836.5V166.3H837.5H837.5H838.5V166.7H839.5V167H840.5V165.7H841.5V167H842.5V166H843.5H843.5H844.5V164.7H845.5V167.1H846.5V165.4H847.5V164.5H848.5V166H849.5V164.7H850.5V164.9H851.5V167.1H852.5H852.5H853.5V165.2H854.5V165.9H855.5V167H856.5V163.3H857.5V166.7H858.5V167.3H859.5V166.4H860.5H860.5H861.5V166.8H862.5V166.4H863.5V165.8H864.5V167H865.5V166H866.5V167.1H867.5V166.2H868.5V167.1H869.5V164.9H870.5V166.2H871.5V165.4H872.5V166.8H873.5V167.3H874.5V166.1H875.5V165.8H876.5V165H877.5V166.4H878.5H878.5H879.5V166.3H880.5V166.9H881.5V165.3H882.5V165.6H883.5V164.3H884.5V166.2H885.5H885.5H886.5V166.9H887.5V165.4H888.5V165.7H889.5V164.9H890.5V167.4H891.5V167.3H892.5V165.2H893.5V165.9H894.5V166.3H895.5V167.1H896.5V166.2H897.5V167.1H898.5V165.8H899.5V166.6H900.5V167H901.5V167.3H902.5V164.3H903.5V165.6H904.5V166H905.5V166.7H906.5V167.3H907.5V166.5H908.5V165.7H909.5V166.1H910.5V164.3H911.5V166.6H912.5V166.8H913.5V167.3H914.5V167.1H915.5V165.6H916.5H916.5H917.5V167.2H918.5V166.4H919.5V164.8H920.5V166.9H921.5H921.5H922.5V164.3H923.5V167.3H924.5V167H925.5V165.8H926.5V167H927.5V166.9H928.5H928.5H929.5V167.5H930.5V167H931.5V167H932.5V166.7H933.5V167.1H934.5V164.2H935.5V167H936.5V166.1H937.5V164.1H938.5V166.6H939.5V166.7H940.5V167.1H941.5V165H942.5H942.5H943.5V166.5H944.5H944.5H945.5V166.2H946.5V167.1H947.5V166.1H948.5V166.5H949.5V164.8H950.5V167.1H951.5V166.8H952.5V166.2H953.5V166.8H954.5V167H955.5V165.3H956.5V166.5H957.5V167.5H958.5V164.9H959.5V166.3H960.5V166.9H961.5V164.9H962.5V166.3H963.5V167.3H964.5V165.8H965.5V167.3H966.5V167.1H967.5V165.1H968.5V166.5H969.5V165.4H970.5V167.3H971.5V165.6H972.5V165H973.5V165.6H974.5V166.4H975.5V166.9H976.5V166.2H977.5V166.3H978.5V166.2H979.5V166.5H980.5V165.7H981.5V167H982.5V166.7H983.5V167H984.5V165.8H985.5V166.2H986.5V167.5H987.5H987.5H988.5V167.4H989.5V167.2H990.5V166.7H991.5V166.2H992.5V166H993.5V166.1H994.5V165.7H995.5V165.1H996.5V167H997.5V165.6H998.5V167.1H999.5V166.8H1000.5V166.9H1001.5V165.6H1002.5V164.7H1003.5V164.8H1004.5V166.8H1005.5V164.7H1006.5V165.8H1007.5V167H1008.5V163.5H1009.5V165.1H1010.5V166.1H1011.5V164.6H1012.5V166.1H1013.5V166.6H1014.5V164.6H1015.5V167.2H1016.5V166.5H1017.5V165.6H1018.5V166.5H1019.5V166.9H1020.5V166.2H1021.5V167.5H1022.5V166.6H1023.5V167H1024.5V167.2H1025.5V167.4H1026.5V165.9H1027.5V166.9H1028.5V167.2H1029.5V166.6H1030.5V164.7H1031.5V167.3H1032.5V166.9H1033.5V165.2H1034.5V165.6H1035.5V165.6H1036.5V167H1037.5V167.2H1038.5V166.4H1039.5V166H1040.5V166.8H1041.5V165.1H1042.5V166.9H1043.5V166H1044.5V167.3H1045.5V167.5H1046.5V165.1H1047.5V165.6H1048.5V166.9H1049.5V165.6H1050.5V165.3H1051.5V167.1H1052.5V166.5H1053.5V165.7H1054.5V167H1055.5V164.2H1056.5V166.6H1057.5V165.8H1058.5V167.3H1059.5V166.7H1060.5V166.8H1061.5V166.1H1062.5V167.4H1063.5V166.6H1064.5V166.3H1065.5H1065.5H1066.5V167.2H1067.5V167.1H1068.5V167.5H1069.5V167.4H1070.5V166.1H1071.5V166.7H1072.5V166.6H1073.5V167.2H1074.5V166.6H1075.5V165H1076.5V166.2H1077.5V167.6H1078.5H1078.5H1079.5V167.5H1080.5V166.6H1081.5V167.3H1082.5V167.6H1083.5V165.5H1084.5V166.8H1085.5V167.2H1086.5V166H1087.5V167.5H1088.5V167.2H1089.5V167.5H1090.5V166.7H1091.5V167.5H1092.5V167H1093.5V166.1H1094.5V167.3H1095.5V166.6H1096.5V167.2H1097.5V167.4H1098.5V167.2H1099.5V165.8H1100.5V166.8H1101.5V163.9H1102.5V166H1103.5V165.7H1104.5V166H1105.5V166.4H1106.5V167.5H1107.5V167.6H1108.5V165.9H1109.5V167.6H1110.5V166.5H1111.5V166.7H1112.5V166.3H1113.5V165.4H1114.5V167.2H1115.5V166.5H1116.5V166.6H1117.5V166.9H1118.5V167.5H1119.5V164.8H1120.5V166.2H1121.5V167.6H1122.5V167.4H1123.5V165.6H1124.5V166.7H1125.5V165.3H1126.5V166.7H1127.5V166.8H1128.5V166.4H1129.5V167.1H1130.5H1130.5H1131.5V166.5H1132.5V165.5H1133.5V165.3H1134.5V166.4H1135.5V166.9H1136.5H1136.5H1137.5V165.7H1138.5V167.2H1139.5V166.6H1140.5V167.4H1141.5V166.9H1142.5V167H1143.5V167.1H1144.5V166.1H1145.5V167.5H1146.5V165.7H1147.5V166H1148.5V167.4H1149.5V167H1150.5V166H1151.5V167H1152.5V167.6H1153.5H1153.5H1154.5V167.1H1155.5V166.9H1156.5V167.6H1157.5V166.6H1158.5V167.2H1159.5V167.3H1160.5V165.1H1161.5V166.5H1162.5V167.3H1163.5V166.4H1164.5V167.2H1165.5V167.1H1166.5V164.8H1167.5V165.8H1168.5V167H1169.5V167.5H1170.5V167.1H1171.5V167.2H1172.5H1172.5H1173.5V165.1H1174.5V167.5H1175.5H1175.5H1176.5H1176.5H1177.5V165.9H1178.5V167.2H1179.5V167H1180.5V167.6H1181.5V166.1H1182.5V167.6H1183.5V166.5H1184.5V165.4H1185.5V166.2H1186.5V166.8H1187.5V167.2H1188.5V165.9H1189.5V166.3H1190.5V167.3H1191.5H1191.5H1192.5V167.1H1193.5H1193.5H1194.5V164.9H1195.5V166.5H1196.5V167H1197.5V165H1198.5V167.2H1199.5V166.3H1200.5V167H1201.5V165.9H1202.5V167.1H1203.5V166.1H1204.5V167.2H1205.5V165.7H1206.5V165.9H1207.5V167.1H1208.5V167.4H1209.5H1209.5H1210.5V166.5H1211.5V167.3H1212.5V167H1213.5V165.6H1214.5V167.4H1215.5V167.5H1216.5V167.6H1217.5V164.9H1218.5V167H1219.5V166H1220.5V166.3H1221.5V166.4H1222.5V167.6H1223.5V165.3H1224.5V167.3H1225.5H1225.5H1226.5V167.1H1227.5V167.3H1228.5V166.5H1229.5V167.4H1230.5H1230.5H1231.5V167.3H1232.5V166.2H1233.5H1233.5H1234.5V167.2H1235.5V166.3H1236.5V166.4H1237.5V164.7H1238.5V166.5H1239.5V166.6H1240.5V167.4H1241.5V166.3H1242.5V165.9H1243.5V167.4H1244.5V166.5H1245.5V165.8H1246.5V165.9H1247.5V166.3H1248.5V166.8H1249.5V166.6H1250.5V166.2H1251.5V166.5H1252.5V167.1H1253.5H1253.5H1254.5V166.9H1255.5V165.4H1256.5V167.1H1257.5V167.2H1258.5V166.1H1259.5V166.3H1260.5V167.3H1261.5H1261.5H1262.5V167.7H1263.5V166.3H1264.5V165H1265.5V165.1H1266.5V167H1267.5V167.7H1268.5V167.6H1269.5V166.9H1270.5V164.4H1271.5V167.2H1272.5V167.1H1273.5V167.3H1274.5V167.1H1275.5V167.2H1276.5V167.7H1277.5V166.2H1278.5V165.7H1279.5V165.6H1280.5V167.6H1281.5V165.6H1282.5V167.5H1283.5V166.3H1284.5V167.6H1285.5V166.3H1286.5V164.3H1287.5V167.7H1288.5V166.7H1289.5V165H1290.5V167.3H1291.5V167.4H1292.5V167.1H1293.5V166.3H1294.5V175H1293.5V175.8H1292.5V175H1291.5V176.5H1290.5V176.6H1289.5V176.8H1288.5V175H1287.5V175.9H1286.5V174.8H1285.5V175.8H1284.5V174.3H1283.5V175.6H1282.5V174.4H1281.5V176.5H1280.5V176.1H1279.5V175.5H1278.5V175.3H1277.5V175.1H1276.5V177.3H1275.5V174.8H1274.5V175.4H1273.5V176.6H1272.5V175.5H1271.5V175.1H1270.5V175.8H1269.5V174.3H1268.5V174.4H1267.5V174.6H1266.5V176.3H1265.5V175.1H1264.5V174.6H1263.5V174.8H1262.5V175.1H1261.5V177.9H1260.5V174.5H1259.5V175.6H1258.5V174.8H1257.5V175.9H1256.5V175.8H1255.5V176.4H1254.5V174.6H1253.5V177.2H1252.5V175.1H1251.5V177.8H1250.5V174.6H1249.5V175.3H1248.5V175.5H1247.5V175.1H1246.5V176.5H1245.5V174.5H1244.5V174.9H1243.5V177H1242.5V176.2H1241.5V177.6H1240.5V174.8H1239.5V175.8H1238.5V175.6H1237.5V175.9H1236.5V174.6H1235.5V174.9H1234.5V174.8H1233.5V174.5H1232.5V175.4H1231.5V175H1230.5H1230.5H1229.5V174.3H1228.5V174.9H1227.5V174.5H1226.5V178.9H1225.5V176.5H1224.5V176H1223.5V175.3H1222.5V174.3H1221.5V175.1H1220.5V175.1H1219.5V174.5H1218.5V176.2H1217.5V174.6H1216.5V177H1215.5V175.1H1214.5V176.9H1213.5V175.8H1212.5V175.4H1211.5V174.8H1210.5V175.2H1209.5V175.5H1208.5V174.5H1207.5V174.7H1206.5V174.8H1205.5V175.1H1204.5V174.4H1203.5V174.5H1202.5V175.6H1201.5V176H1200.5V174.6H1199.5V174.5H1198.5V175H1197.5H1197.5H1196.5V174.6H1195.5V176H1194.5V174.8H1193.5V175.4H1192.5V174.9H1191.5V175.2H1190.5V178.1H1189.5V175.7H1188.5V177.2H1187.5V175.1H1186.5V176.3H1185.5V176H1184.5V178.3H1183.5V175.5H1182.5V176.4H1181.5V175.3H1180.5V174.4H1179.5V176.4H1178.5V174.7H1177.5V177.1H1176.5V177.8H1175.5V175.7H1174.5V174.8H1173.5H1173.5H1172.5V174.3H1171.5V174.5H1170.5V174.7H1169.5V174.6H1168.5V176.9H1167.5V175.6H1166.5V176.5H1165.5V175.1H1164.5V174.8H1163.5V175.9H1162.5V175.3H1161.5V175.4H1160.5V174.5H1159.5V176.6H1158.5V176.1H1157.5V175H1156.5V174.8H1155.5V176.1H1154.5V174.6H1153.5V175.3H1152.5V175.9H1151.5V175.3H1150.5V176.6H1149.5V174.8H1148.5V175.6H1147.5V175H1146.5V175.5H1145.5V175.7H1144.5V174.4H1143.5V175.5H1142.5V174.4H1141.5V174.2H1140.5H1140.5H1139.5V174.7H1138.5H1138.5H1137.5V175.9H1136.5V176.4H1135.5V175.7H1134.5V176.7H1133.5V175.6H1132.5V174.8H1131.5V174.5H1130.5V175.3H1129.5V176.2H1128.5V174.8H1127.5V174.5H1126.5V174.8H1125.5V176.1H1124.5V175.6H1123.5V174.7H1122.5V175.2H1121.5V175.3H1120.5V176.3H1119.5V176.2H1118.5V176.1H1117.5V175.2H1116.5V174.3H1115.5V174.4H1114.5V176.8H1113.5V174.6H1112.5V174.6H1111.5V175.5H1110.5V174.9H1109.5V174.7H1108.5V174.2H1107.5V174.5H1106.5H1106.5H1105.5V179.3H1104.5V174.3H1103.5V174.4H1102.5V175.4H1101.5V176.3H1100.5V174.7H1099.5V175.1H1098.5V176.9H1097.5V174.8H1096.5V174.4H1095.5V174.2H1094.5V175.8H1093.5V176.1H1092.5V174.7H1091.5H1091.5H1090.5V175H1089.5V174.7H1088.5V175.9H1087.5V174.9H1086.5V174.5H1085.5V174.3H1084.5V174.7H1083.5V174.5H1082.5H1082.5H1081.5V175H1080.5V175.1H1079.5V176.6H1078.5V175.5H1077.5V175.8H1076.5V174.4H1075.5V175.6H1074.5V174.7H1073.5V175.7H1072.5V174.2H1071.5V176.1H1070.5V174.5H1069.5V174.8H1068.5V175.5H1067.5V176.5H1066.5V175.2H1065.5V174.4H1064.5V175.7H1063.5V177.7H1062.5V175.2H1061.5V176.1H1060.5V178.2H1059.5V175.8H1058.5V175.2H1057.5V175.5H1056.5V175H1055.5V175.2H1054.5V175.7H1053.5V174.7H1052.5V175.6H1051.5V177.9H1050.5V174.4H1049.5V175.1H1048.5V174.9H1047.5V175.3H1046.5V174.5H1045.5V176.6H1044.5V175.2H1043.5V175.9H1042.5V174.5H1041.5V176.3H1040.5H1040.5H1039.5V174.5H1038.5V175.5H1037.5H1037.5H1036.5V177.3H1035.5V176.7H1034.5V175H1033.5V178.8H1032.5V174.9H1031.5V176.4H1030.5V176.3H1029.5V176.1H1028.5V174.5H1027.5V175.8H1026.5V175.5H1025.5V174.4H1024.5V175.6H1023.5V176H1022.5V174.6H1021.5V175.8H1020.5V174.8H1019.5V174.9H1018.5V174.3H1017.5V174.7H1016.5V174.2H1015.5V174.8H1014.5V177H1013.5V174.3H1012.5V174.5H1011.5V174.8H1010.5V174.5H1009.5V174.9H1008.5V174.5H1007.5V176.4H1006.5V177.6H1005.5V174.9H1004.5V174.5H1003.5V175.1H1002.5V174.9H1001.5V176.1H1000.5V176.2H999.5V174.9H998.5V174.7H997.5V174.2H996.5H996.5H995.5V174.3H994.5V175.7H993.5V174.4H992.5V177.9H991.5V174.5H990.5V176H989.5V174.5H988.5V174.6H987.5V174.2H986.5V175.7H985.5V175.3H984.5V175.1H983.5V174.8H982.5V174.6H981.5V175.4H980.5V176.1H979.5H979.5H978.5V174.8H977.5V175H976.5V174.5H975.5V175.3H974.5V175.7H973.5V176.1H972.5V174.5H971.5V174.7H970.5V174.8H969.5V174.5H968.5V174.8H967.5V176H966.5V175.4H965.5V174.4H964.5V175.3H963.5V174.9H962.5V176.4H961.5V174.4H960.5V177.1H959.5V176.5H958.5V175.6H957.5V175.4H956.5V175.3H955.5V176.1H954.5V176H953.5V174.5H952.5V175H951.5V174.3H950.5V174.9H949.5V176.3H948.5V174.6H947.5V174.2H946.5V176.7H945.5V175.7H944.5V175.1H943.5V175.3H942.5V175H941.5V175.1H940.5V174.1H939.5V176.5H938.5V174.1H937.5V175.3H936.5V177.5H935.5V175.5H934.5H934.5H933.5V174.9H932.5H932.5H931.5V175.4H930.5V174.5H929.5V175.2H928.5V175.3H927.5V176.4H926.5V175.2H925.5V175.5H924.5V175.1H923.5V174.7H922.5V176.8H921.5V175.8H920.5V175.2H919.5V176.1H918.5V175.3H917.5V175.9H916.5V175.3H915.5V175.6H914.5V175.3H913.5V175.1H912.5V174.6H911.5V174.3H910.5V176.1H909.5V174.6H908.5V174.5H907.5V175.9H906.5V176.8H905.5V175H904.5H904.5H903.5V174.4H902.5V176.8H901.5V175.4H900.5V175.5H899.5V174.1H898.5V174.6H897.5V176.3H896.5V174.8H895.5V175.4H894.5V174.4H893.5V174.8H892.5V174.6H891.5V176.3H890.5V174.7H889.5V174.4H888.5V175.7H887.5V174.2H886.5V174.9H885.5V175.9H884.5V174.1H883.5V175.7H882.5V174.6H881.5V174.8H880.5V178.5H879.5V174.7H878.5H878.5H877.5V174.7H876.5V176.7H875.5V174.5H874.5V174.7H873.5V176.6H872.5V174.1H871.5V176.8H870.5V174.9H869.5V174.4H868.5V174.9H867.5V175.1H866.5V175H865.5V174.2H864.5V175.9H863.5V175.1H862.5V176H861.5V174.4H860.5V175.4H859.5V175.1H858.5V177.2H857.5V176.5H856.5V174.1H855.5V175.8H854.5V175.2H853.5V176.3H852.5V174.3H851.5H851.5H850.5V174.5H849.5V174.4H848.5V175.4H847.5V175H846.5V175.3H845.5V175.5H844.5V176H843.5V175.6H842.5V176.8H841.5V176.1H840.5V174.9H839.5V174.3H838.5V175.2H837.5V175.3H836.5V176.2H835.5V174.1H834.5V174.2H833.5V174.7H832.5V176.2H831.5V177.4H830.5V176.3H829.5V174.3H828.5V174.8H827.5V174.4H826.5V175.9H825.5V175.1H824.5V175.3H823.5V175.9H822.5V175.3H821.5V176H820.5V174.7H819.5V175.8H818.5V174.9H817.5V174.1H816.5V174.9H815.5V175.3H814.5V174.3H813.5V175.4H812.5V176.5H811.5V176.1H810.5V174.6H809.5V174.1H808.5V175.6H807.5V174.4H806.5V174.5H805.5V174.3H804.5V174.4H803.5V174.1H802.5V176.6H801.5V174.5H800.5V174.2H799.5V174.3H798.5V174.7H797.5V176.7H796.5V174.9H795.5V174.3H794.5V176.5H793.5V176.3H792.5V178.2H791.5V174.9H790.5V175H789.5V175.6H788.5V176.3H787.5V174.4H786.5V176H785.5V177.8H784.5V178.7H783.5V174.5H782.5V174.6H781.5V176.5H780.5V175.9H779.5V175.5H778.5V177.7H777.5V176.2H776.5V174.7H775.5V174.4H774.5V174.6H773.5V174.5H772.5V174H771.5H771.5H770.5V175.4H769.5V175.7H768.5V176H767.5V176.3H766.5V174.7H765.5V175.2H764.5V176.1H763.5V175.7H762.5V176.1H761.5V175H760.5V175.2H759.5V175.9H758.5V174.8H757.5V175.7H756.5V174.4H755.5H755.5H754.5V177.1H753.5V174.1H752.5V174.3H751.5V174.1H750.5V175H749.5V176.3H748.5V175.9H747.5V174.3H746.5V174.7H745.5V175H744.5V174H743.5V175H742.5V174.3H741.5V175.1H740.5V174.3H739.5V176.2H738.5V175.8H737.5V174.4H736.5V177H735.5V176.1H734.5V174.3H733.5V174.1H732.5V174.8H731.5V174.9H730.5V175H729.5V178.5H728.5V176.2H727.5V175.9H726.5V175.2H725.5V175.3H724.5V174.1H723.5V175.7H722.5V177H721.5V174.6H720.5V176.2H719.5V174.6H718.5V174.1H717.5V174.3H716.5V174.9H715.5V174.1H714.5V174.4H713.5V174.6H712.5V174.1H711.5V176.3H710.5V174.4H709.5V175.6H708.5V174.4H707.5V174.5H706.5H706.5H705.5V175.3H704.5V176.1H703.5V174.1H702.5V175.3H701.5V175.9H700.5V176.1H699.5V174.2H698.5V174H697.5V175.8H696.5V174.8H695.5V175.1H694.5H694.5H693.5V174.3H692.5V174.7H691.5V174.6H690.5V176.2H689.5V174H688.5V174.9H687.5V175H686.5V174H685.5V175.3H684.5V175.9H683.5V174.6H682.5V176.4H681.5V175.6H680.5V176H679.5V176.6H678.5V174H677.5V175.8H676.5V174.4H675.5V175.9H674.5V174.9H673.5V175.7H672.5V174.6H671.5V176.4H670.5V174.3H669.5V176.4H668.5V174.4H667.5V175.4H666.5V175.1H665.5V173.9H664.5V175.3H663.5V176.2H662.5V175.1H661.5V174.2H660.5V174.4H659.5V176.4H658.5V174.9H657.5V174.6H656.5V175.1H655.5V175.3H654.5V174.3H653.5V174.9H652.5V176.1H651.5V174.3H650.5V176.1H649.5V174.3H648.5V174.5H647.5V174.8H646.5V173.8H645.5V176.1H644.5V174.5H643.5V174.3H642.5V175.5H641.5V174.7H640.5V174.8H639.5V174.6H638.5V175.4H637.5V174.8H636.5H636.5H635.5V175H634.5V174.1H633.5V175.1H632.5V174.5H631.5V174H630.5H630.5H629.5V175.3H628.5V174.8H627.5V174.1H626.5V175H625.5V175.5H624.5V173.6H623.5V173.9H622.5V174.6H621.5V175.5H620.5V173.8H619.5V174.8H618.5V173.6H617.5V174.4H616.5V174.7H615.5V173.8H614.5V173.9H613.5V174.1H612.5V174.7H611.5V174.2H610.5V176H609.5V174.6H608.5V174.5H607.5V173.9H606.5V174.8H605.5V175.6H604.5V174.1H603.5V173.5H602.5V175.4H601.5V174.5H600.5V174.2H599.5V174.3H598.5V173.9H597.5V175.1H596.5V174.6H595.5V174.5H594.5V174.6H593.5V173.6H592.5V173.8H591.5V174H590.5V175.1H589.5V173.4H588.5V172.9H587.5V174.4H586.5V173.8H585.5V174.8H584.5V174.3H583.5V173.6H582.5V173.1H581.5V174.1H580.5V173.8H579.5V172.8H578.5V173.2H577.5V173.4H576.5V174.2H575.5V175.4H574.5V172.3H573.5V173.5H572.5V172.6H571.5V172.5H570.5V172.3H569.5V172.8H568.5V172.2H567.5V172.4H566.5V172.8H565.5V173.1H564.5V171.7H563.5V172H562.5V171.8H561.5V172.3H560.5V172.2H559.5V171.8H558.5V171.3H557.5V171.6H556.5V171.9H555.5V171H554.5V170.9H553.5V171.9H552.5V171.1H551.5V174.8H550.5V170.9H549.5V170.8H548.5V171.6H547.5V171.1H546.5V170.9H545.5V170.2H544.5V171.1H543.5V169.7H542.5V169.6H541.5V169.7H540.5V169.3H539.5V170.1H538.5V169.8H537.5V171.2H536.5V169.4H535.5V169H534.5V168.7H533.5V170.4H532.5V168.5H531.5V169.8H530.5V170H529.5V168.5H528.5V169.2H527.5V168.6H526.5V168H525.5H525.5H524.5V167.3H523.5V167.9H522.5V169.5H521.5V168.7H520.5V168.5H519.5V169.3H518.5V168.7H517.5V169.3H516.5V169.6H515.5V170.8H514.5V173.5H513.5V175H512.5V178.6H511.5V184.6H510.5V191.4H509.5V202.9H508.5Z" fill="#00ff00"/>
<path d="M203.2 168.7L203.4 168.7L203.5 168.7L203.6 173.6L203.8 196.5L203.9 217L204 235.5L204.1 252.1L204.2 267L204.4 280.4L204.5 292.5L204.6 303.3L204.8 313.1L204.9 321.9L205 329.8L205.1 336.9L205.2 343.3L205.4 349.1L205.5 354.3L205.6 359L205.8 363.3L205.9 367.1L206 370.5L206.1 373.7L206.2 376.5L206.4 379L206.5 381.4L206.6 383.5L206.8 385.4M502.2 406L502.4 406L502.5 405.9L502.6 405.9L502.8 405.9L502.9 405.9L503 406L503.1 395.8L503.2 386.1L503.4 376.8L503.5 367.9L503.6 359.3L503.8 351.1L503.9 343.3L504 335.8L504.1 328.6L504.2 321.6L504.4 315L504.5 308.7L504.6 302.6L504.8 296.8L504.9 291.2L505 285.9L505.1 280.8L505.2 275.8L505.4 271.1L505.5 266.6L505.6 262.3L505.8 258.2L505.9 254.2L506 250.4L506.1 246.8L506.2 243.3L506.4 240L506.5 236.7L506.6 233.7L506.8 230.7L506.9 227.9L507 225.2L507.1 222.6L507.2 220.1L507.4 217.8L507.5 215.5L507.6 213.3L507.8 211.2L507.9 209.2L508 207.3L508.1 205.4L508.2 203.7L508.4 202L508.5 200.4L508.6 198.8L508.8 197.3" fill="none" stroke="#00a000" stroke-width="1.3"/>
<path d="M95 280.3H1245" stroke="#fff" stroke-width="1"/><path d="M95 279.3H1245" stroke="#fff" stroke-width="1" stroke-dasharray="3 3"/>
<path d="M1245 280.5l5-5v10z" fill="#fff"/><text class="sb" transform="translate(1259.30 286.00) scale(0.8391 1)" font-size="15" fill="#ff8000" text-anchor="middle">4</text>
<text class="sb" transform="translate(1258.30 285.60) scale(0.8391 1)" font-size="15" fill="#fff" text-anchor="middle">4</text>
<path d="M462.5 118V591M479.5 118V591" stroke="#fff" stroke-width="1" stroke-dasharray="2 2.1"/>
<path d="M462.5 591.8l5 6.2h-10zM479.5 591.8l5 6.2h-10z" fill="#fff"/><text class="s" transform="translate(462.40 613.60) scale(0.8000 1)" font-size="17.5" fill="#fff" text-anchor="middle">1</text>
<text class="s" transform="translate(479.30 613.60) scale(0.8000 1)" font-size="17.5" fill="#fff" text-anchor="middle">2</text>
<rect x="94.5" y="117.5" width="1200.0" height="515.0" fill="none" stroke="#fff" stroke-width="1"/>
<text class="m" transform="translate(96.70 162.10) scale(0.8673 1)" font-size="11.3" fill="#00f000" text-anchor="start">0 V</text>
<text class="m" transform="translate(96.70 213.60) scale(0.8673 1)" font-size="11.3" fill="#00f000" text-anchor="start">-20 mV</text>
<text class="m" transform="translate(96.70 265.10) scale(0.8673 1)" font-size="11.3" fill="#00f000" text-anchor="start">-40 mV</text>
<text class="m" transform="translate(96.70 316.60) scale(0.8673 1)" font-size="11.3" fill="#00f000" text-anchor="start">-60 mV</text>
<text class="m" transform="translate(96.70 368.10) scale(0.8673 1)" font-size="11.3" fill="#00f000" text-anchor="start">-80 mV</text>
<text class="m" transform="translate(96.70 419.60) scale(0.8673 1)" font-size="11.3" fill="#00f000" text-anchor="start">-100 mV</text>
<text class="m" transform="translate(96.70 471.10) scale(0.8673 1)" font-size="11.3" fill="#00f000" text-anchor="start">-120 mV</text>
<text class="m" transform="translate(96.70 522.60) scale(0.8673 1)" font-size="11.3" fill="#00f000" text-anchor="start">-140 mV</text>
<text class="m" transform="translate(96.70 574.10) scale(0.8673 1)" font-size="11.3" fill="#00f000" text-anchor="start">-160 mV</text>
<text class="m" transform="translate(96.70 625.60) scale(0.8673 1)" font-size="11.3" fill="#00f000" text-anchor="start">-180 mV</text>
<text class="m" transform="translate(196.70 625.60) scale(0.8673 1)" font-size="11.3" fill="#00f000" text-anchor="start">960 ns</text>
<text class="m" transform="translate(296.70 625.60) scale(0.8673 1)" font-size="11.3" fill="#00f000" text-anchor="start">1.96 µs</text>
<text class="m" transform="translate(396.70 625.60) scale(0.8673 1)" font-size="11.3" fill="#00f000" text-anchor="start">2.96 µs</text>
<text class="m" transform="translate(496.70 625.60) scale(0.8673 1)" font-size="11.3" fill="#00f000" text-anchor="start">3.96 µs</text>
<text class="m" transform="translate(596.70 625.60) scale(0.8673 1)" font-size="11.3" fill="#00f000" text-anchor="start">4.96 µs</text>
<text class="m" transform="translate(696.70 625.60) scale(0.8673 1)" font-size="11.3" fill="#00f000" text-anchor="start">5.96 µs</text>
<text class="m" transform="translate(796.70 625.60) scale(0.8673 1)" font-size="11.3" fill="#00f000" text-anchor="start">6.96 µs</text>
<text class="m" transform="translate(896.70 625.60) scale(0.8673 1)" font-size="11.3" fill="#00f000" text-anchor="start">7.96 µs</text>
<text class="m" transform="translate(996.70 625.60) scale(0.8673 1)" font-size="11.3" fill="#00f000" text-anchor="start">8.96 µs</text>
<text class="m" transform="translate(1096.70 625.60) scale(0.8673 1)" font-size="11.3" fill="#00f000" text-anchor="start">9.96 µs</text>
<text class="m" transform="translate(1196.70 625.60) scale(0.8673 1)" font-size="11.3" fill="#00f000" text-anchor="start">10.96 µs</text>
<path d="M194.6 614.4l15.6 15.4h-31.2z" fill="none" stroke="#8a8a8a" stroke-width="2"/>
<path d="M93.8 119.6h10.4l-5.2 10.8z" fill="#f4f400"/>
<text class="sb" transform="translate(99.10 145.80) scale(1.0453 1)" font-size="16.6" fill="#f4f400" text-anchor="middle">T</text>
<path d="M55.5 160h29l9.3 9.3-9.3 9.6h-29z" fill="#00ff00"/><text class="s" transform="translate(67.50 175.40) scale(0.6705 1)" font-size="17.5" fill="#000" text-anchor="middle">C2</text>
<path d="M55.5 211.3h29l9 9.3-9 9.3h-29" fill="none" stroke="#4b4b80" stroke-width="1"/><text class="s" transform="translate(67.50 227.00) scale(0.6705 1)" font-size="17.5" fill="#4b4b80" text-anchor="middle">C4</text>
<path d="M55.5 314.3h29l9 9.1-9 9.1h-29" fill="none" stroke="#8a4400" stroke-width="1"/><text class="s" transform="translate(67.50 329.80) scale(0.6705 1)" font-size="17.5" fill="#8a4400" text-anchor="middle">C3</text>
<rect x="1275" y="160" width="14.5" height="10.4" fill="#000"/>
<text class="s" transform="translate(1275.60 169.00) scale(0.9255 1)" font-size="10.5" fill="#00ff00" text-anchor="start">Pis</text>
<rect x="1262" y="210.7" width="27.2" height="10.6" fill="#000"/>
<text class="s" transform="translate(1262.60 220.00) scale(0.9681 1)" font-size="10.5" fill="#9999ff" text-anchor="start">Pload</text>
<rect x="1274.4" y="313.8" width="14.8" height="10.8" fill="#000"/>
<text class="s" transform="translate(1275.00 323.00) scale(0.8634 1)" font-size="10.5" fill="#ff8000" text-anchor="start">Prs</text>
<rect x="55" y="634" width="1280" height="36" fill="#181f24"/>
<rect x="55" y="634" width="49.7" height="36" fill="#2b353d"/>
<rect x="106" y="634" width="138" height="36" fill="#2b353d"/>
<rect x="246" y="634" width="138" height="36" fill="#0090ef"/>
<rect x="55" y="670" width="1280" height="3" fill="#0090ef"/>
<rect x="1285" y="634" width="50" height="36" fill="#2b353d"/>
<path d="M72.10000000000001 649.2h16.6l-8.3-8.6zM72.10000000000001 655h16.6l-8.3 8.6z" fill="#fff"/>
<path d="M1302.3 649.2h16.6l-8.3-8.6zM1302.3 655h16.6l-8.3 8.6z" fill="#fff"/>
<text class="s" transform="translate(111.30 659.00) scale(0.8079 1)" font-size="18.5" fill="#fff" text-anchor="start" stroke="#fff" stroke-width="0.4">Meas. / Cursor</text>
<text class="s" transform="translate(251.00 659.00) scale(0.7701 1)" font-size="18.5" fill="#fff" text-anchor="start" stroke="#fff" stroke-width="0.4">Statistics</text>
<path d="M221 647l10.6 10.6M231.6 647l-10.6 10.6" stroke="#fff" stroke-width="2.2" fill="none"/>
<path d="M361 647l10.6 10.6M371.6 647l-10.6 10.6" stroke="#10151a" stroke-width="2.2" fill="none"/>
<rect x="55" y="673" width="1280" height="126" fill="#181f24"/>
<rect x="65" y="718" width="819" height="38" fill="#2b353d"/>
<text class="s" transform="translate(200.00 706.00) scale(0.8078 1)" font-size="18.5" fill="#fff" text-anchor="start" stroke="#fff" stroke-width="0.35">Type</text>
<text class="s" transform="translate(200.00 744.00) scale(0.8298 1)" font-size="18.5" fill="#fff" text-anchor="start" stroke="#fff" stroke-width="0.35">Mean</text>
<text class="s" transform="translate(200.00 781.60) scale(0.8366 1)" font-size="18.5" fill="#fff" text-anchor="start" stroke="#fff" stroke-width="0.35">VAmp</text>
<text class="s" transform="translate(280.50 706.00) scale(0.8202 1)" font-size="18.5" fill="#fff" text-anchor="start" stroke="#fff" stroke-width="0.35">Current</text>
<text class="s" transform="translate(280.50 744.00) scale(0.7720 1)" font-size="18.5" fill="#fff" text-anchor="start" stroke="#fff" stroke-width="0.35">-93.798 mV</text>
<text class="s" transform="translate(280.50 781.60) scale(0.7720 1)" font-size="18.5" fill="#fff" text-anchor="start" stroke="#fff" stroke-width="0.35">65.17 mV</text>
<text class="s" transform="translate(380.50 706.00) scale(0.8923 1)" font-size="18.5" fill="#fff" text-anchor="start" stroke="#fff" stroke-width="0.35">Min</text>
<text class="s" transform="translate(380.50 744.00) scale(0.7720 1)" font-size="18.5" fill="#fff" text-anchor="start" stroke="#fff" stroke-width="0.35">-93.818 mV</text>
<text class="s" transform="translate(380.50 781.60) scale(0.7720 1)" font-size="18.5" fill="#fff" text-anchor="start" stroke="#fff" stroke-width="0.35">0 V</text>
<text class="s" transform="translate(480.50 706.00) scale(0.8412 1)" font-size="18.5" fill="#fff" text-anchor="start" stroke="#fff" stroke-width="0.35">Max</text>
<text class="s" transform="translate(480.50 744.00) scale(0.7720 1)" font-size="18.5" fill="#fff" text-anchor="start" stroke="#fff" stroke-width="0.35">-748.8 µV</text>
<text class="s" transform="translate(480.50 781.60) scale(0.7720 1)" font-size="18.5" fill="#fff" text-anchor="start" stroke="#fff" stroke-width="0.35">176.89 mV</text>
<text class="s" transform="translate(580.50 706.00) scale(0.8341 1)" font-size="18.5" fill="#fff" text-anchor="start" stroke="#fff" stroke-width="0.35">Mean</text>
<text class="s" transform="translate(580.50 744.00) scale(0.7720 1)" font-size="18.5" fill="#fff" text-anchor="start" stroke="#fff" stroke-width="0.35">-70.094 mV</text>
<text class="s" transform="translate(580.50 781.60) scale(0.7720 1)" font-size="18.5" fill="#fff" text-anchor="start" stroke="#fff" stroke-width="0.35">54.957 mV</text>
<text class="s" transform="translate(680.50 706.00) scale(0.7747 1)" font-size="18.5" fill="#fff" text-anchor="start" stroke="#fff" stroke-width="0.35">StdDev</text>
<text class="s" transform="translate(680.50 744.00) scale(0.7720 1)" font-size="18.5" fill="#fff" text-anchor="start" stroke="#fff" stroke-width="0.35">35.832 mV</text>
<text class="s" transform="translate(680.50 781.60) scale(0.7720 1)" font-size="18.5" fill="#fff" text-anchor="start" stroke="#fff" stroke-width="0.35">28.944 mV</text>
<text class="s" transform="translate(781.00 706.00) scale(0.8144 1)" font-size="18.5" fill="#fff" text-anchor="start" stroke="#fff" stroke-width="0.35">Wave count</text>
<text class="s" transform="translate(781.00 744.00) scale(0.7720 1)" font-size="18.5" fill="#fff" text-anchor="start" stroke="#fff" stroke-width="0.35">1241</text>
<text class="s" transform="translate(781.00 781.60) scale(0.7720 1)" font-size="18.5" fill="#fff" text-anchor="start" stroke="#fff" stroke-width="0.35">1241</text>
<text class="s" transform="translate(75.60 744.00) scale(0.7700 1)" font-size="18.5" fill="#fff" text-anchor="start" stroke="#fff" stroke-width="0.35">1:</text>
<text class="s" transform="translate(75.60 781.60) scale(0.7700 1)" font-size="18.5" fill="#fff" text-anchor="start" stroke="#fff" stroke-width="0.35">2:</text>
<rect x="107.6" y="724.6" width="25.8" height="25.8" fill="#000"/>
<rect x="108.8" y="725.8" width="23.4" height="23.4" fill="#00ff00"/>
<rect x="107.6" y="762.6" width="25.8" height="25.8" fill="#000"/>
<rect x="108.8" y="763.8" width="23.4" height="23.4" fill="#9999ff"/>
<text class="s" transform="translate(120.60 743.40) scale(0.6999 1)" font-size="15.2" fill="#000" text-anchor="middle">C2</text>
<text class="s" transform="translate(120.60 781.40) scale(0.7102 1)" font-size="15.2" fill="#000" text-anchor="middle">C4</text>
<text class="s" transform="translate(166.10 744.60) scale(0.8000 1)" font-size="26.5" fill="#fff" text-anchor="start" stroke="#fff" stroke-width="0.3">[</text>
<text class="s" transform="translate(175.20 744.60) scale(0.8000 1)" font-size="26.5" fill="#fff" text-anchor="start" stroke="#fff" stroke-width="0.3">]</text>
<rect x="895" y="683.8" width="51.1" height="51.2" fill="#3c4a54"/>
<rect x="895" y="745.2" width="51.1" height="50.4" fill="#3c4a54"/>
<g fill="none" stroke="#fff" stroke-width="3.3"><path d="M931.19 709.04A10.3 10.3 0 0 0 920.54 699.11"/><path d="M910.61 709.76A10.3 10.3 0 0 0 921.26 719.69"/></g><path d="M914.6 699.3L920.4 693.8L920.9 704.1999999999999Z M927.4 719.4L921.4 713.9L921.4 724.3Z" fill="#fff"/>
<path d="M903.75 753.9h27l5.4 5.4v26.8h-32.4z M905.85 756.0v28h28.2v-23.7l-4.3-4.3z" fill="#fff" fill-rule="evenodd"/><path d="M912.85 754.9h13.9v10.4h-13.9zM914.95 755.4h9.7v7.8h-9.7z" fill="#fff" fill-rule="evenodd"/><rect x="910.75" y="771.5" width="18.7" height="13.5" fill="#fff"/>
<rect x="953.6" y="675" width="2" height="123" fill="#000"/>
<rect x="963.1" y="681.2" width="24.8" height="24.5" fill="#101010"/>
<rect x="964.1" y="682.2" width="22.8" height="22.5" fill="#ff8000"/>
<text class="s" transform="translate(975.00 698.40) scale(0.6467 1)" font-size="15" fill="#000" text-anchor="middle">C3</text>
<text class="s" transform="translate(993.20 700.00) scale(0.7620 1)" font-size="18.5" fill="#fff" text-anchor="start" stroke="#fff" stroke-width="0.35">t1: 3.64 µs</text>
<text class="s" transform="translate(1151.00 700.00) scale(0.7680 1)" font-size="18.5" fill="#fff" text-anchor="start" stroke="#fff" stroke-width="0.35">V1: 4.2482 mV</text>
<text class="s" transform="translate(993.20 738.20) scale(0.7620 1)" font-size="18.5" fill="#fff" text-anchor="start" stroke="#fff" stroke-width="0.35">t2: 3.81 µs</text>
<text class="s" transform="translate(1151.00 738.20) scale(0.7680 1)" font-size="18.5" fill="#fff" text-anchor="start" stroke="#fff" stroke-width="0.35">V2: 4.1994 mV</text>
<text class="s" transform="translate(993.20 776.00) scale(0.7620 1)" font-size="18.5" fill="#fff" text-anchor="start" stroke="#fff" stroke-width="0.35">Δt: 170 ns</text>
<text class="s" transform="translate(1151.00 776.00) scale(0.7680 1)" font-size="18.5" fill="#fff" text-anchor="start" stroke="#fff" stroke-width="0.35">ΔV: 48.8 µV</text>
<rect x="55" y="799" width="1280" height="41.6" fill="#000"/>
<rect x="55" y="799" width="199" height="41.6" fill="#808080"/>
<rect x="98" y="801.2" width="156" height="39.4" fill="#2b353d"/>
<text class="s" transform="translate(76.00 826.00) scale(0.6519 1)" font-size="21" fill="#ffff00" text-anchor="middle">C1</text>
<text class="s" transform="translate(140.97 830.00) scale(0.7600 1)" font-size="25" fill="#fff" text-anchor="start">1</text>
<text class="s" transform="translate(156.03 830.00) scale(1.1208 1)" font-size="19.5" fill="#fff" text-anchor="start">v/</text>
<text class="s" transform="translate(243.60 817.60) scale(0.9497 1)" font-size="20" fill="#fff" text-anchor="middle">Ω</text>
<text class="s" transform="translate(252.00 837.60) scale(0.7193 1)" font-size="12" fill="#fff" text-anchor="end">1:1</text>
<rect x="256.6" y="799" width="199" height="41.6" fill="#00ff00"/>
<rect x="299.6" y="801.2" width="156" height="39.4" fill="#2b353d"/>
<text class="s" transform="translate(277.60 826.00) scale(0.6519 1)" font-size="21" fill="#000" text-anchor="middle">C2</text>
<text class="s" transform="translate(331.28 830.00) scale(0.7600 1)" font-size="25" fill="#fff" text-anchor="start">20</text>
<text class="s" transform="translate(356.92 830.00) scale(0.8365 1)" font-size="19.5" fill="#fff" text-anchor="start">mV/</text>
<text class="s" transform="translate(445.20 817.60) scale(0.9497 1)" font-size="20" fill="#fff" text-anchor="middle">Ω</text>
<text class="s" transform="translate(453.60 837.60) scale(0.7193 1)" font-size="12" fill="#fff" text-anchor="end">1:1</text>
<rect x="457.6" y="799" width="199" height="41.6" fill="#7f3f00"/>
<rect x="500.6" y="801.2" width="156" height="39.4" fill="#2b353d"/>
<text class="s" transform="translate(478.60 826.00) scale(0.6519 1)" font-size="21" fill="#1a1000" text-anchor="middle">C3</text>
<text class="s" transform="translate(537.57 830.00) scale(0.7600 1)" font-size="25" fill="#fff" text-anchor="start">5</text>
<text class="s" transform="translate(552.63 830.00) scale(0.8365 1)" font-size="19.5" fill="#fff" text-anchor="start">mV/</text>
<text class="s" transform="translate(646.20 817.60) scale(0.9497 1)" font-size="20" fill="#fff" text-anchor="middle">Ω</text>
<text class="s" transform="translate(654.60 837.60) scale(0.7193 1)" font-size="12" fill="#fff" text-anchor="end">1:1</text>
<rect x="658.6" y="799" width="199" height="41.6" fill="#4b4b80"/>
<rect x="701.6" y="801.2" width="156" height="39.4" fill="#2b353d"/>
<text class="s" transform="translate(679.60 826.00) scale(0.6519 1)" font-size="21" fill="#0c0c20" text-anchor="middle">C4</text>
<text class="s" transform="translate(733.28 830.00) scale(0.7600 1)" font-size="25" fill="#fff" text-anchor="start">50</text>
<text class="s" transform="translate(758.92 830.00) scale(0.8365 1)" font-size="19.5" fill="#fff" text-anchor="start">mV/</text>
<text class="s" transform="translate(847.20 817.60) scale(0.9497 1)" font-size="20" fill="#fff" text-anchor="middle">Ω</text>
<text class="s" transform="translate(855.60 837.60) scale(0.7193 1)" font-size="12" fill="#fff" text-anchor="end">1:1</text>
<rect x="860" y="799" width="397.5" height="41.6" fill="#2b353d"/>
<rect x="1259" y="799" width="76" height="41.6" fill="#2b353d"/>
<path d="M1259 799.5L1297.2 764.2L1335 799.5Z" fill="#2b353d"/><path d="M1297.2 766.6L1329.8 799.2L1297.2 831.8000000000001L1264.6000000000001 799.2ZM1297.2 769.0L1327.4 799.2L1297.2 829.4000000000001L1267.0 799.2Z" fill="#ff8000" fill-rule="evenodd"/><path d="M1297.2 772.0L1324.4 799.2L1297.2 826.4000000000001L1270.0 799.2ZM1297.2 778.4000000000001L1318.0 799.2L1297.2 820.0L1276.4 799.2Z" fill="#1e9bff" fill-rule="evenodd"/><clipPath id="mclip"><path d="M1297.2 775.2L1321.2 799.2L1297.2 823.2L1273.2 799.2Z"/></clipPath><path d="M1284.2 810.7C1291.2 802.2 1296.2 803.7 1298.7 798.7C1301.2 793.7 1302.2 791.2 1308.2 785.7" fill="none" stroke="#1e9bff" stroke-width="3.6" clip-path="url(#mclip)"/><text class="sb" transform="translate(1291.90 799.70) scale(0.9800 1)" font-size="14.8" fill="#1e9bff" text-anchor="middle" stroke="#1e9bff" stroke-width="0.5">R</text>
<text class="sb" transform="translate(1303.50 811.60) scale(1.0000 1)" font-size="15.5" fill="#1e9bff" text-anchor="middle" stroke="#1e9bff" stroke-width="0.5">S</text>
<text class="s" transform="translate(1297.20 838.40) scale(0.9328 1)" font-size="16.5" fill="#fff" text-anchor="middle" stroke="#fff" stroke-width="0.5">Menu</text>
</g>
<g id="panel">
<rect x="1421.3" y="19.2" width="335.4" height="861.1" fill="#4e72a9"/>
<rect x="1756.5" y="19.2" width="335.4" height="861.1" fill="#30354c"/>
<text class="sb" transform="translate(1452.50 48.30) scale(0.8020 1)" font-size="21.5" fill="#fff" text-anchor="start">Horizontal</text>
<text class="sb" transform="translate(1452.20 377.00) scale(0.8340 1)" font-size="21.5" fill="#fff" text-anchor="start">Vertical</text>
<text class="sb" transform="translate(1787.20 47.10) scale(0.8178 1)" font-size="21.5" fill="#fff" text-anchor="start">Trigger</text>
<text class="sb" transform="translate(1787.00 322.70) scale(0.7924 1)" font-size="21.5" fill="#fff" text-anchor="start">Action</text>
<text class="sb" transform="translate(1787.00 520.00) scale(0.7972 1)" font-size="21.5" fill="#fff" text-anchor="start">Analysis</text>
<text class="sb" transform="translate(1641.00 62.70) scale(0.7581 1)" font-size="20.5" fill="#fff" text-anchor="middle">Position</text>
<text class="sb" transform="translate(1641.00 222.40) scale(0.7653 1)" font-size="20.5" fill="#fff" text-anchor="middle">Scale</text>
<text class="sb" transform="translate(1641.00 627.60) scale(0.7653 1)" font-size="20.5" fill="#fff" text-anchor="middle">Scale</text>
<text class="sb" transform="translate(1921.50 121.20) scale(0.7427 1)" font-size="20.5" fill="#fff" text-anchor="middle">Levels</text>
<rect x="1442.7" y="59.7" width="87.6" height="62.6" rx="14.5" fill="#1d3668" opacity="0.5" filter="url(#bl3)"/><rect x="1447.2" y="65.2" width="78.6" height="53.6" rx="10" fill="#1d3668" opacity="0.75" filter="url(#bl4)"/>
<rect x="1449.2" y="69.2" width="74.6" height="49.6" rx="8" fill="#9c9ca1"/><rect x="1450.6000000000001" y="70.60000000000001" width="71.8" height="46.800000000000004" rx="6.8" fill="#6c6c73"/><rect x="1451.4" y="71.4" width="70.19999999999999" height="45.2" rx="6" fill="url(#gG)"/>
<text class="sb" transform="translate(1486.50 100.90) scale(0.7826 1)" font-size="20" fill="#000" text-anchor="middle">Zoom</text>
<rect x="1442.7" y="160.1" width="87.6" height="62.6" rx="14.5" fill="#1d3668" opacity="0.5" filter="url(#bl3)"/><rect x="1447.2" y="165.6" width="78.6" height="53.6" rx="10" fill="#1d3668" opacity="0.75" filter="url(#bl4)"/>
<rect x="1449.2" y="169.6" width="74.6" height="49.6" rx="8" fill="#9c9ca1"/><rect x="1450.6000000000001" y="171.0" width="71.8" height="46.800000000000004" rx="6.8" fill="#6c6c73"/><rect x="1451.4" y="171.79999999999998" width="70.19999999999999" height="45.2" rx="6" fill="url(#gG)"/>
<text class="sb" transform="translate(1486.50 191.20) scale(0.8165 1)" font-size="20" fill="#000" text-anchor="middle">Hori-</text>
<text class="sb" transform="translate(1486.50 211.60) scale(0.7945 1)" font-size="20" fill="#000" text-anchor="middle">zontal</text>
<rect x="1442.7" y="259.7" width="87.6" height="62.6" rx="14.5" fill="#1d3668" opacity="0.5" filter="url(#bl3)"/><rect x="1447.2" y="265.2" width="78.6" height="53.6" rx="10" fill="#1d3668" opacity="0.75" filter="url(#bl4)"/>
<rect x="1449.2" y="269.2" width="74.6" height="49.6" rx="8" fill="#9c9ca1"/><rect x="1450.6000000000001" y="270.59999999999997" width="71.8" height="46.800000000000004" rx="6.8" fill="#6c6c73"/><rect x="1451.4" y="271.4" width="70.19999999999999" height="45.2" rx="6" fill="url(#gG)"/>
<text class="sb" transform="translate(1486.50 290.80) scale(0.8117 1)" font-size="20" fill="#000" text-anchor="middle">Acqui-</text>
<text class="sb" transform="translate(1486.50 311.20) scale(0.7875 1)" font-size="20" fill="#000" text-anchor="middle">sition</text>
<rect x="1442.7" y="387.7" width="87.6" height="62.6" rx="14.5" fill="#1d3668" opacity="0.5" filter="url(#bl3)"/><rect x="1447.2" y="393.2" width="78.6" height="53.6" rx="10" fill="#1d3668" opacity="0.75" filter="url(#bl4)"/>
<rect x="1449.2" y="397.2" width="74.6" height="49.6" rx="8" fill="#c2c2c7"/><rect x="1450.3" y="398.2" width="72.39999999999999" height="46.800000000000004" rx="7" fill="url(#gW)"/>
<text class="sb" transform="translate(1486.50 428.90) scale(0.7675 1)" font-size="20" fill="#000" text-anchor="middle">Ch1</text>
<rect x="1442.7" y="490.3" width="87.6" height="62.6" rx="14.5" fill="#1d3668" opacity="0.5" filter="url(#bl3)"/><rect x="1447.2" y="495.8" width="78.6" height="53.6" rx="10" fill="#1d3668" opacity="0.75" filter="url(#bl4)"/>
<rect x="1449.2" y="499.8" width="74.6" height="49.6" rx="8" fill="#c2c2c7"/><rect x="1450.3" y="500.8" width="72.39999999999999" height="46.800000000000004" rx="7" fill="url(#gW)"/>
<text class="sb" transform="translate(1486.50 531.50) scale(0.7675 1)" font-size="20" fill="#000" text-anchor="middle">Ch2</text>
<rect x="1442.7" y="592.9" width="87.6" height="62.6" rx="14.5" fill="#1d3668" opacity="0.5" filter="url(#bl3)"/><rect x="1447.2" y="598.4" width="78.6" height="53.6" rx="10" fill="#1d3668" opacity="0.75" filter="url(#bl4)"/>
<rect x="1449.2" y="602.4" width="74.6" height="49.6" rx="8" fill="#c2c2c7"/><rect x="1450.3" y="603.4" width="72.39999999999999" height="46.800000000000004" rx="7" fill="url(#gW)"/>
<text class="sb" transform="translate(1486.50 634.10) scale(0.7675 1)" font-size="20" fill="#000" text-anchor="middle">Ch3</text>
<rect x="1442.7" y="695.5" width="87.6" height="62.6" rx="14.5" fill="#1d3668" opacity="0.5" filter="url(#bl3)"/><rect x="1447.2" y="701" width="78.6" height="53.6" rx="10" fill="#1d3668" opacity="0.75" filter="url(#bl4)"/>
<rect x="1449.2" y="705" width="74.6" height="49.6" rx="8" fill="#c2c2c7"/><rect x="1450.3" y="706" width="72.39999999999999" height="46.800000000000004" rx="7" fill="url(#gW)"/>
<text class="sb" transform="translate(1486.50 736.70) scale(0.7675 1)" font-size="20" fill="#000" text-anchor="middle">Ch4</text>
<rect x="1442.7" y="797.9" width="87.6" height="62.6" rx="14.5" fill="#1d3668" opacity="0.5" filter="url(#bl3)"/><rect x="1447.2" y="803.4" width="78.6" height="53.6" rx="10" fill="#1d3668" opacity="0.75" filter="url(#bl4)"/>
<rect x="1449.2" y="807.4" width="74.6" height="49.6" rx="8" fill="#c2c2c7"/><rect x="1450.3" y="808.4" width="72.39999999999999" height="46.800000000000004" rx="7" fill="url(#gW)"/>
<text class="sb" transform="translate(1486.50 839.10) scale(0.7575 1)" font-size="20" fill="#000" text-anchor="middle">Logic</text>
<rect x="1547.7" y="797.9" width="87.6" height="62.6" rx="14.5" fill="#1d3668" opacity="0.5" filter="url(#bl3)"/><rect x="1552.2" y="803.4" width="78.6" height="53.6" rx="10" fill="#1d3668" opacity="0.75" filter="url(#bl4)"/>
<rect x="1554.2" y="807.4" width="74.6" height="49.6" rx="8" fill="#c2c2c7"/><rect x="1555.3" y="808.4" width="72.39999999999999" height="46.800000000000004" rx="7" fill="url(#gW)"/>
<text class="sb" transform="translate(1591.50 839.10) scale(0.7726 1)" font-size="20" fill="#000" text-anchor="middle">Ref</text>
<rect x="1652.7" y="797.9" width="87.6" height="62.6" rx="14.5" fill="#1d3668" opacity="0.5" filter="url(#bl3)"/><rect x="1657.2" y="803.4" width="78.6" height="53.6" rx="10" fill="#1d3668" opacity="0.75" filter="url(#bl4)"/>
<rect x="1659.2" y="807.4" width="74.6" height="49.6" rx="8" fill="#c2c2c7"/><rect x="1660.3" y="808.4" width="72.39999999999999" height="46.800000000000004" rx="7" fill="url(#gW)"/>
<text class="sb" transform="translate(1696.50 839.10) scale(0.8658 1)" font-size="20" fill="#000" text-anchor="middle">Math</text>
<circle cx="1643.3" cy="113.3" r="40.3" fill="#1d3668" opacity="0.9" filter="url(#bl2)"/>
<circle cx="1640.8" cy="108.3" r="37.3" fill="url(#kR)"/><circle cx="1640.8" cy="106.7" r="35.3" fill="url(#kF)"/><clipPath id="c1640_108"><circle cx="1640.8" cy="108.3" r="37.3"/></clipPath><path d="M1643.9 70.4A3.1 3.1 0 1 0 1637.7 70.4A3.1 3.1 0 1 0 1643.9 70.4ZM1675.3 88.6A3.1 3.1 0 1 0 1669.1 88.6A3.1 3.1 0 1 0 1675.3 88.6ZM1675.3 124.8A3.1 3.1 0 1 0 1669.1 124.8A3.1 3.1 0 1 0 1675.3 124.8ZM1643.9 143.0A3.1 3.1 0 1 0 1637.7 143.0A3.1 3.1 0 1 0 1643.9 143.0ZM1612.5 124.8A3.1 3.1 0 1 0 1606.3 124.8A3.1 3.1 0 1 0 1612.5 124.8ZM1612.5 88.6A3.1 3.1 0 1 0 1606.3 88.6A3.1 3.1 0 1 0 1612.5 88.6Z" fill="#6c6c74" clip-path="url(#c1640_108)"/><circle cx="1640.8" cy="106.7" r="30.0" fill="none" stroke="#c0c0c7" stroke-width="1.2" opacity="0.35"/>
<circle cx="1643.1" cy="290" r="49" fill="#1d3668" opacity="0.9" filter="url(#bl2)"/>
<circle cx="1640.6" cy="285" r="46" fill="url(#kR)"/><circle cx="1640.6" cy="283.4" r="44.0" fill="url(#kF)"/><clipPath id="c1640_285"><circle cx="1640.6" cy="285" r="46"/></clipPath><path d="M1643.7 238.4A3.1 3.1 0 1 0 1637.5 238.4A3.1 3.1 0 1 0 1643.7 238.4ZM1682.7 260.9A3.1 3.1 0 1 0 1676.5 260.9A3.1 3.1 0 1 0 1682.7 260.9ZM1682.7 305.9A3.1 3.1 0 1 0 1676.5 305.9A3.1 3.1 0 1 0 1682.7 305.9ZM1643.7 328.4A3.1 3.1 0 1 0 1637.5 328.4A3.1 3.1 0 1 0 1643.7 328.4ZM1604.7 305.9A3.1 3.1 0 1 0 1598.5 305.9A3.1 3.1 0 1 0 1604.7 305.9ZM1604.7 260.9A3.1 3.1 0 1 0 1598.5 260.9A3.1 3.1 0 1 0 1604.7 260.9Z" fill="#6c6c74" clip-path="url(#c1640_285)"/><circle cx="1640.6" cy="283.4" r="37.4" fill="none" stroke="#c0c0c7" stroke-width="1.2" opacity="0.35"/>
<circle cx="1643.1" cy="478" r="55.8" fill="#1d3668" opacity="0.55" filter="url(#bl2)"/>
<circle cx="1640.6" cy="473" r="52.8" fill="url(#kW)"/><circle cx="1640.6" cy="473" r="48.3" fill="none" stroke="#e6e6ea" stroke-width="2.5"/><circle cx="1640.6" cy="473.6" r="39.1" fill="#dcdce0"/>
<circle cx="1640.6" cy="473" r="37.9" fill="url(#kR2)"/><circle cx="1640.6" cy="472.0" r="35.199999999999996" fill="url(#kF)"/><clipPath id="c1640_473"><circle cx="1640.6" cy="473" r="37.9"/></clipPath><path d="M1643.7 435.8A3.1 3.1 0 1 0 1637.5 435.8A3.1 3.1 0 1 0 1643.7 435.8ZM1675.1 453.9A3.1 3.1 0 1 0 1668.9 453.9A3.1 3.1 0 1 0 1675.1 453.9ZM1675.1 490.1A3.1 3.1 0 1 0 1668.9 490.1A3.1 3.1 0 1 0 1675.1 490.1ZM1643.7 508.2A3.1 3.1 0 1 0 1637.5 508.2A3.1 3.1 0 1 0 1643.7 508.2ZM1612.3 490.1A3.1 3.1 0 1 0 1606.1 490.1A3.1 3.1 0 1 0 1612.3 490.1ZM1612.3 453.9A3.1 3.1 0 1 0 1606.1 453.9A3.1 3.1 0 1 0 1612.3 453.9Z" fill="#6c6c74" clip-path="url(#c1640_473)"/><circle cx="1640.6" cy="472.0" r="29.9" fill="none" stroke="#c0c0c7" stroke-width="1.2" opacity="0.35"/>
<circle cx="1643.1" cy="707.6" r="64.6" fill="#1d3668" opacity="0.55" filter="url(#bl2)"/>
<circle cx="1640.6" cy="702.6" r="61.6" fill="url(#kW)"/><circle cx="1640.6" cy="702.6" r="57.1" fill="none" stroke="#e6e6ea" stroke-width="2.5"/><circle cx="1640.6" cy="703.2" r="47.0" fill="#dcdce0"/>
<circle cx="1640.6" cy="702.6" r="45.8" fill="url(#kR2)"/><circle cx="1640.6" cy="701.6" r="43.099999999999994" fill="url(#kF)"/><clipPath id="c1640_702"><circle cx="1640.6" cy="702.6" r="45.8"/></clipPath><path d="M1643.7 657.5A3.1 3.1 0 1 0 1637.5 657.5A3.1 3.1 0 1 0 1643.7 657.5ZM1681.9 679.6A3.1 3.1 0 1 0 1675.7 679.6A3.1 3.1 0 1 0 1681.9 679.6ZM1681.9 723.6A3.1 3.1 0 1 0 1675.7 723.6A3.1 3.1 0 1 0 1681.9 723.6ZM1643.7 745.7A3.1 3.1 0 1 0 1637.5 745.7A3.1 3.1 0 1 0 1643.7 745.7ZM1605.5 723.6A3.1 3.1 0 1 0 1599.3 723.6A3.1 3.1 0 1 0 1605.5 723.6ZM1605.5 679.6A3.1 3.1 0 1 0 1599.3 679.6A3.1 3.1 0 1 0 1605.5 679.6Z" fill="#6c6c74" clip-path="url(#c1640_702)"/><circle cx="1640.6" cy="701.6" r="36.6" fill="none" stroke="#c0c0c7" stroke-width="1.2" opacity="0.35"/>
<path d="M1608.7 73.3v13.4l-7-6.7z" fill="#fff"/><path d="M1673 73.3v13.4l7-6.7z" fill="#fff"/><path d="M1603.7 136.6h4.3v1.7h5.2l-7.35 4.8-7.35-4.8h5.2zM1603.0 143.1h6l2.6 6.5h-11.5zM1597.2 150.2h17.3v1.2h-17.3z" fill="#f2f2f4"/>
<text class="sb" transform="translate(1670.80 136.70) scale(0.7669 1)" font-size="12" fill="#fff" text-anchor="start">Push</text>
<text class="sb" transform="translate(1670.80 150.80) scale(0.7722 1)" font-size="12" fill="#fff" text-anchor="start">to Zero</text>
<path d="M1588.8 238v15l8-7.5z" fill="#fff"/><path d="M1606.1 238v15l-8-7.5z" fill="#fff"/><path d="M1683.5 239v13.4l-7.3-6.7z" fill="#fff"/><path d="M1684.8 239v13.4l7.3-6.7z" fill="#fff"/><path d="M1595.3 321.2h4.3v1.7h5.2l-7.35 4.8-7.35-4.8h5.2zM1594.6 327.7h6l2.6 6.5h-11.5zM1588.8 334.8h17.3v1.2h-17.3z" fill="#f2f2f4"/>
<text class="sb" transform="translate(1682.70 322.00) scale(0.7619 1)" font-size="12" fill="#fff" text-anchor="start">Coarse</text>
<text class="sb" transform="translate(1682.70 335.50) scale(0.7459 1)" font-size="12" fill="#fff" text-anchor="start">Fine</text>
<path d="M1583.6 428.6h14l-7.0 7z" fill="#fff"/><path d="M1684 435.6h14l-7.0-7z" fill="#fff"/><path d="M1593.3 512h4.3v1.7h5.2l-7.35 4.8-7.35-4.8h5.2zM1592.6 518.5h6l2.6 6.5h-11.5zM1586.8 525.6h17.3v1.2h-17.3z" fill="#f2f2f4"/>
<text class="sb" transform="translate(1689.40 511.70) scale(0.7669 1)" font-size="12" fill="#fff" text-anchor="start">Push</text>
<text class="sb" transform="translate(1689.40 526.00) scale(0.7722 1)" font-size="12" fill="#fff" text-anchor="start">to Zero</text>
<path d="M1582.4 636.4h14.4l-7.2 7.8z" fill="#fff"/><path d="M1582.4 653.0h14.4l-7.2-7.8z" fill="#fff"/><path d="M1685 644h14l-7.0-7z" fill="#fff"/><path d="M1685 645.4h14l-7.0 7z" fill="#fff"/><path d="M1585.1 748.6h4.3v1.7h5.2l-7.35 4.8-7.35-4.8h5.2zM1584.3999999999999 755.1h6l2.6 6.5h-11.5zM1578.6 762.2h17.3v1.2h-17.3z" fill="#f2f2f4"/>
<text class="sb" transform="translate(1695.40 749.00) scale(0.7619 1)" font-size="12" fill="#fff" text-anchor="start">Coarse</text>
<text class="sb" transform="translate(1695.40 763.50) scale(0.7459 1)" font-size="12" fill="#fff" text-anchor="start">Fine</text>
<rect x="1772.4" y="59.7" width="87.6" height="62.6" rx="14.5" fill="#171a2b" opacity="0.5" filter="url(#bl3)"/><rect x="1776.9" y="65.2" width="78.6" height="53.6" rx="10" fill="#171a2b" opacity="0.75" filter="url(#bl4)"/>
<rect x="1778.9" y="69.2" width="74.6" height="49.6" rx="8" fill="#9c9ca1"/><rect x="1780.3000000000002" y="70.60000000000001" width="71.8" height="46.800000000000004" rx="6.8" fill="#6c6c73"/><rect x="1781.1000000000001" y="71.4" width="70.19999999999999" height="45.2" rx="6" fill="url(#gG)"/>
<text class="sb" transform="translate(1816.20 98.20) scale(0.8172 1)" font-size="20" fill="#000" text-anchor="middle">Trigger</text>
<rect x="1772.4" y="132.9" width="87.6" height="62.6" rx="14.5" fill="#171a2b" opacity="0.5" filter="url(#bl3)"/><rect x="1776.9" y="138.4" width="78.6" height="53.6" rx="10" fill="#171a2b" opacity="0.75" filter="url(#bl4)"/>
<rect x="1778.9" y="142.4" width="74.6" height="49.6" rx="8" fill="#c2c2c7"/><rect x="1780.0" y="143.4" width="72.39999999999999" height="46.800000000000004" rx="7" fill="url(#gW)"/>
<text class="sb" transform="translate(1816.20 174.10) scale(0.7743 1)" font-size="20" fill="#000" text-anchor="middle">Source</text>
<rect x="1772.4" y="205.9" width="87.6" height="62.6" rx="14.5" fill="#171a2b" opacity="0.5" filter="url(#bl3)"/><rect x="1776.9" y="211.4" width="78.6" height="53.6" rx="10" fill="#171a2b" opacity="0.75" filter="url(#bl4)"/>
<rect x="1778.9" y="215.4" width="74.6" height="49.6" rx="8" fill="#c2c2c7"/><rect x="1780.0" y="216.4" width="72.39999999999999" height="46.800000000000004" rx="7" fill="url(#gW)"/>
<text class="sb" transform="translate(1816.20 237.40) scale(0.7861 1)" font-size="20" fill="#000" text-anchor="middle">Auto</text>
<text class="sb" transform="translate(1816.20 257.70) scale(0.7812 1)" font-size="20" fill="#000" text-anchor="middle">Norm</text>
<rect x="1983.1" y="59.7" width="87.6" height="62.6" rx="14.5" fill="#171a2b" opacity="0.5" filter="url(#bl3)"/><rect x="1987.6" y="65.2" width="78.6" height="53.6" rx="10" fill="#171a2b" opacity="0.75" filter="url(#bl4)"/>
<rect x="1989.6" y="69.2" width="74.6" height="49.6" rx="8" fill="#c2c2c7"/><rect x="1990.6999999999998" y="70.2" width="72.39999999999999" height="46.800000000000004" rx="7" fill="url(#gW)"/>
<text class="sb" transform="translate(2026.90 87.90) scale(0.7665 1)" font-size="20" fill="#000" text-anchor="middle">Run</text>
<text class="sb" transform="translate(2026.90 108.60) scale(0.7786 1)" font-size="20" fill="#000" text-anchor="middle">Stop</text>
<rect x="1983.1" y="132.9" width="87.6" height="62.6" rx="14.5" fill="#171a2b" opacity="0.5" filter="url(#bl3)"/><rect x="1987.6" y="138.4" width="78.6" height="53.6" rx="10" fill="#171a2b" opacity="0.75" filter="url(#bl4)"/>
<rect x="1989.6" y="142.4" width="74.6" height="49.6" rx="8" fill="#c2c2c7"/><rect x="1990.6999999999998" y="143.4" width="72.39999999999999" height="46.800000000000004" rx="7" fill="url(#gW)"/>
<text class="sb" transform="translate(2026.90 172.00) scale(0.7965 1)" font-size="20" fill="#000" text-anchor="middle">Single</text>
<rect x="1983.1" y="205.9" width="87.6" height="62.6" rx="14.5" fill="#171a2b" opacity="0.5" filter="url(#bl3)"/><rect x="1987.6" y="211.4" width="78.6" height="53.6" rx="10" fill="#171a2b" opacity="0.75" filter="url(#bl4)"/>
<rect x="1989.6" y="215.4" width="74.6" height="49.6" rx="8" fill="#9c9ca1"/><rect x="1991.0" y="216.8" width="71.8" height="46.800000000000004" rx="6.8" fill="#6c6c73"/><rect x="1991.8" y="217.6" width="70.19999999999999" height="45.2" rx="6" fill="url(#gG)"/>
<text class="sb" transform="translate(2026.90 235.60) scale(0.6922 1)" font-size="20" fill="#000" text-anchor="middle">Force</text>
<text class="sb" transform="translate(2026.90 255.20) scale(0.7405 1)" font-size="20" fill="#000" text-anchor="middle">Trigger</text>
<rect x="1900.7" y="67.3" width="41.6" height="17.6" fill="#f2f2f3"/>
<text class="sb" transform="translate(1921.50 80.20) scale(0.9321 1)" font-size="14" fill="#000" text-anchor="middle">Trig'd</text>
<circle cx="1923.6" cy="171.6" r="40.3" fill="#171a2b" opacity="0.9" filter="url(#bl2)"/>
<circle cx="1921.1" cy="166.6" r="37.3" fill="url(#kR)"/><circle cx="1921.1" cy="165.0" r="35.3" fill="url(#kF)"/><clipPath id="c1921_166"><circle cx="1921.1" cy="166.6" r="37.3"/></clipPath><path d="M1924.2 128.7A3.1 3.1 0 1 0 1918.0 128.7A3.1 3.1 0 1 0 1924.2 128.7ZM1955.6 146.8A3.1 3.1 0 1 0 1949.4 146.8A3.1 3.1 0 1 0 1955.6 146.8ZM1955.6 183.2A3.1 3.1 0 1 0 1949.4 183.2A3.1 3.1 0 1 0 1955.6 183.2ZM1924.2 201.3A3.1 3.1 0 1 0 1918.0 201.3A3.1 3.1 0 1 0 1924.2 201.3ZM1892.8 183.2A3.1 3.1 0 1 0 1886.6 183.2A3.1 3.1 0 1 0 1892.8 183.2ZM1892.8 146.8A3.1 3.1 0 1 0 1886.6 146.8A3.1 3.1 0 1 0 1892.8 146.8Z" fill="#6c6c74" clip-path="url(#c1921_166)"/><circle cx="1921.1" cy="165.0" r="30.0" fill="none" stroke="#c0c0c7" stroke-width="1.2" opacity="0.35"/>
<path d="M1873 135h14l-7.0 7z" fill="#fff"/><path d="M1955.5 142.6h14l-7.0-7z" fill="#fff"/><path d="M1878.1 196h4.3v1.7h5.2l-7.35 4.8-7.35-4.8h5.2zM1877.3999999999999 202.5h6l2.6 6.5h-11.5zM1871.6 209.6h17.3v1.2h-17.3z" fill="#f2f2f4"/>
<text class="sb" transform="translate(1980.00 195.00) scale(0.7669 1)" font-size="12" fill="#fff" text-anchor="end">Push</text>
<text class="sb" transform="translate(1980.00 209.40) scale(0.8443 1)" font-size="12" fill="#fff" text-anchor="end">for 50%</text>
<rect x="1772.4" y="334.1" width="87.6" height="62.6" rx="14.5" fill="#171a2b" opacity="0.5" filter="url(#bl3)"/><rect x="1776.9" y="339.6" width="78.6" height="53.6" rx="10" fill="#171a2b" opacity="0.75" filter="url(#bl4)"/>
<rect x="1778.9" y="343.6" width="74.6" height="49.6" rx="8" fill="#9c9ca1"/><rect x="1780.3000000000002" y="345.0" width="71.8" height="46.800000000000004" rx="6.8" fill="#6c6c73"/><rect x="1781.1000000000001" y="345.8" width="70.19999999999999" height="45.2" rx="6" fill="url(#gG)"/>
<path d="M1798.8 356.50000000000006h5.6l1.4-.6c4-3.4 7-3.9 10.4-3.9s7 .9 10.4 3.9l1.4 .6h5.6q2.5 0 2.5 2.5v19.799999999999955q0 2.5-2.5 2.5h-34.8q-2.5 0-2.5-2.5v-19.799999999999955q0-2.5 2.5-2.5z" fill="#050507"/><circle cx="1816.3" cy="368.6" r="8" fill="none" stroke="#c6c6cc" stroke-width="1.9"/>
<rect x="1877.9" y="334.1" width="87.6" height="62.6" rx="14.5" fill="#171a2b" opacity="0.5" filter="url(#bl3)"/><rect x="1882.4" y="339.6" width="78.6" height="53.6" rx="10" fill="#171a2b" opacity="0.75" filter="url(#bl4)"/>
<rect x="1884.4" y="343.6" width="74.6" height="49.6" rx="8" fill="#9c9ca1"/><rect x="1885.8000000000002" y="345.0" width="71.8" height="46.800000000000004" rx="6.8" fill="#6c6c73"/><rect x="1886.6000000000001" y="345.8" width="70.19999999999999" height="45.2" rx="6" fill="url(#gG)"/>
<text class="sb" transform="translate(1921.70 364.60) scale(0.7643 1)" font-size="20" fill="#000" text-anchor="middle">Save</text>
<text class="sb" transform="translate(1921.70 384.80) scale(0.7473 1)" font-size="20" fill="#000" text-anchor="middle">Load</text>
<rect x="1983.1" y="334.1" width="87.6" height="62.6" rx="14.5" fill="#171a2b" opacity="0.5" filter="url(#bl3)"/><rect x="1987.6" y="339.6" width="78.6" height="53.6" rx="10" fill="#171a2b" opacity="0.75" filter="url(#bl4)"/>
<rect x="1989.6" y="343.6" width="74.6" height="49.6" rx="8" fill="#7aa39c"/><rect x="1991.0" y="345.0" width="71.8" height="46.800000000000004" rx="6.8" fill="#1d6a5d"/><rect x="1991.8" y="345.8" width="70.19999999999999" height="45.2" rx="6" fill="url(#gT)"/>
<text class="sb" transform="translate(2026.90 375.30) scale(0.7912 1)" font-size="20" fill="#000" text-anchor="middle">Autoset</text>
<rect x="1772.4" y="407.1" width="87.6" height="62.6" rx="14.5" fill="#171a2b" opacity="0.5" filter="url(#bl3)"/><rect x="1776.9" y="412.6" width="78.6" height="53.6" rx="10" fill="#171a2b" opacity="0.75" filter="url(#bl4)"/>
<rect x="1778.9" y="416.6" width="74.6" height="49.6" rx="8" fill="#c2c2c7"/><rect x="1780.0" y="417.6" width="72.39999999999999" height="46.800000000000004" rx="7" fill="url(#gW)"/>
<text class="sb" transform="translate(1816.20 437.00) scale(0.7076 1)" font-size="20" fill="#000" text-anchor="middle">Touch</text>
<text class="sb" transform="translate(1816.20 459.50) scale(0.6855 1)" font-size="20" fill="#000" text-anchor="middle">Lock</text>
<rect x="1877.9" y="407.1" width="87.6" height="62.6" rx="14.5" fill="#171a2b" opacity="0.5" filter="url(#bl3)"/><rect x="1882.4" y="412.6" width="78.6" height="53.6" rx="10" fill="#171a2b" opacity="0.75" filter="url(#bl4)"/>
<rect x="1884.4" y="416.6" width="74.6" height="49.6" rx="8" fill="#9c9ca1"/><rect x="1885.8000000000002" y="418.0" width="71.8" height="46.800000000000004" rx="6.8" fill="#6c6c73"/><rect x="1886.6000000000001" y="418.8" width="70.19999999999999" height="45.2" rx="6" fill="url(#gG)"/>
<text class="sb" transform="translate(1921.70 438.20) scale(0.7735 1)" font-size="20" fill="#000" text-anchor="middle">Clear</text>
<text class="sb" transform="translate(1921.70 458.60) scale(0.7825 1)" font-size="20" fill="#000" text-anchor="middle">Screen</text>
<rect x="1983.1" y="407.1" width="87.6" height="62.6" rx="14.5" fill="#171a2b" opacity="0.5" filter="url(#bl3)"/><rect x="1987.6" y="412.6" width="78.6" height="53.6" rx="10" fill="#171a2b" opacity="0.75" filter="url(#bl4)"/>
<rect x="1989.6" y="416.6" width="74.6" height="49.6" rx="8" fill="#7aa39c"/><rect x="1991.0" y="418.0" width="71.8" height="46.800000000000004" rx="6.8" fill="#1d6a5d"/><rect x="1991.8" y="418.8" width="70.19999999999999" height="45.2" rx="6" fill="url(#gT)"/>
<text class="sb" transform="translate(2026.90 448.30) scale(0.7146 1)" font-size="20" fill="#000" text-anchor="middle">Preset</text>
<path d="M1827.4 593.4A12 12 0 1 1 1819.5 578.9" fill="none" stroke="#ececee" stroke-width="3.8"/><path d="M1830.7 583.6999999999999L1822.0 574.0L1817.3 584.0z" fill="#ececee"/>
<circle cx="1923.4" cy="595.7" r="49.1" fill="#171a2b" opacity="0.9" filter="url(#bl2)"/>
<circle cx="1920.9" cy="590.7" r="46.1" fill="url(#kR)"/><circle cx="1920.9" cy="589.1" r="44.1" fill="url(#kF)"/><clipPath id="c1920_590"><circle cx="1920.9" cy="590.7" r="46.1"/></clipPath><path d="M1924.0 544.0A3.1 3.1 0 1 0 1917.8 544.0A3.1 3.1 0 1 0 1924.0 544.0ZM1963.1 566.6A3.1 3.1 0 1 0 1956.9 566.6A3.1 3.1 0 1 0 1963.1 566.6ZM1963.1 611.6A3.1 3.1 0 1 0 1956.9 611.6A3.1 3.1 0 1 0 1963.1 611.6ZM1924.0 634.2A3.1 3.1 0 1 0 1917.8 634.2A3.1 3.1 0 1 0 1924.0 634.2ZM1884.9 611.6A3.1 3.1 0 1 0 1878.7 611.6A3.1 3.1 0 1 0 1884.9 611.6ZM1884.9 566.6A3.1 3.1 0 1 0 1878.7 566.6A3.1 3.1 0 1 0 1884.9 566.6Z" fill="#6c6c74" clip-path="url(#c1920_590)"/><circle cx="1920.9" cy="589.1" r="37.5" fill="none" stroke="#c0c0c7" stroke-width="1.2" opacity="0.35"/>
<path d="M1876.5 627.6h4.3v1.7h5.2l-7.35 4.8-7.35-4.8h5.2zM1875.8 634.1h6l2.6 6.5h-11.5zM1870 641.2h17.3v1.2h-17.3z" fill="#f2f2f4"/>
<text class="sb" transform="translate(1993.00 627.00) scale(0.7669 1)" font-size="12" fill="#fff" text-anchor="end">Push</text>
<text class="sb" transform="translate(1993.00 641.40) scale(0.8037 1)" font-size="12" fill="#fff" text-anchor="end">to Select</text>
<rect x="1772.4" y="651.5" width="87.6" height="62.6" rx="14.5" fill="#171a2b" opacity="0.5" filter="url(#bl3)"/><rect x="1776.9" y="657" width="78.6" height="53.6" rx="10" fill="#171a2b" opacity="0.75" filter="url(#bl4)"/>
<rect x="1778.9" y="661" width="74.6" height="49.6" rx="8" fill="#9c9ca1"/><rect x="1780.3000000000002" y="662.4" width="71.8" height="46.800000000000004" rx="6.8" fill="#6c6c73"/><rect x="1781.1000000000001" y="663.2" width="70.19999999999999" height="45.2" rx="6" fill="url(#gG)"/>
<text class="sb" transform="translate(1816.20 692.70) scale(0.7702 1)" font-size="20" fill="#000" text-anchor="middle">Cursor</text>
<rect x="1877.9" y="651.5" width="87.6" height="62.6" rx="14.5" fill="#171a2b" opacity="0.5" filter="url(#bl3)"/><rect x="1882.4" y="657" width="78.6" height="53.6" rx="10" fill="#171a2b" opacity="0.75" filter="url(#bl4)"/>
<rect x="1884.4" y="661" width="74.6" height="49.6" rx="8" fill="#9c9ca1"/><rect x="1885.8000000000002" y="662.4" width="71.8" height="46.800000000000004" rx="6.8" fill="#6c6c73"/><rect x="1886.6000000000001" y="663.2" width="70.19999999999999" height="45.2" rx="6" fill="url(#gG)"/>
<text class="sb" transform="translate(1921.70 692.70) scale(0.8335 1)" font-size="20" fill="#000" text-anchor="middle">Meas</text>
<rect x="1983.1" y="651.5" width="87.6" height="62.6" rx="14.5" fill="#171a2b" opacity="0.5" filter="url(#bl3)"/><rect x="1987.6" y="657" width="78.6" height="53.6" rx="10" fill="#171a2b" opacity="0.75" filter="url(#bl4)"/>
<rect x="1989.6" y="661" width="74.6" height="49.6" rx="8" fill="#9c9ca1"/><rect x="1991.0" y="662.4" width="71.8" height="46.800000000000004" rx="6.8" fill="#6c6c73"/><rect x="1991.8" y="663.2" width="70.19999999999999" height="45.2" rx="6" fill="url(#gG)"/>
<circle cx="2026.8999999999999" cy="685.8" r="6.6" fill="none" stroke="#000" stroke-width="1.5"/><path d="M2031.8 680.9A6.9 6.9 0 0 1 2021.9999999999998 690.6999999999999Z" fill="#000"/><path d="M2037.1 685.8L2041.5 685.8M2035.7 690.9L2039.5 693.1M2032.0 694.6L2034.2 698.4M2026.9 696.0L2026.9 700.4M2021.8 694.6L2019.6 698.4M2018.1 690.9L2014.3 693.1M2016.7 685.8L2012.3 685.8M2018.1 680.7L2014.3 678.5M2021.8 677.0L2019.6 673.2M2026.9 675.6L2026.9 671.2M2032.0 677.0L2034.2 673.2M2035.7 680.7L2039.5 678.5" stroke="#000" stroke-width="1.5"/>
<rect x="1772.4" y="724.7" width="87.6" height="62.6" rx="14.5" fill="#171a2b" opacity="0.5" filter="url(#bl3)"/><rect x="1776.9" y="730.2" width="78.6" height="53.6" rx="10" fill="#171a2b" opacity="0.75" filter="url(#bl4)"/>
<rect x="1778.9" y="734.2" width="74.6" height="49.6" rx="8" fill="#9c9ca1"/><rect x="1780.3000000000002" y="735.6" width="71.8" height="46.800000000000004" rx="6.8" fill="#6c6c73"/><rect x="1781.1000000000001" y="736.4000000000001" width="70.19999999999999" height="45.2" rx="6" fill="url(#gG)"/>
<text class="sb" transform="translate(1816.20 753.10) scale(0.7863 1)" font-size="20" fill="#000" text-anchor="middle">Quick</text>
<text class="sb" transform="translate(1816.20 776.60) scale(0.8395 1)" font-size="20" fill="#000" text-anchor="middle">Meas</text>
<rect x="1877.9" y="724.7" width="87.6" height="62.6" rx="14.5" fill="#171a2b" opacity="0.5" filter="url(#bl3)"/><rect x="1882.4" y="730.2" width="78.6" height="53.6" rx="10" fill="#171a2b" opacity="0.75" filter="url(#bl4)"/>
<rect x="1884.4" y="734.2" width="74.6" height="49.6" rx="8" fill="#9c9ca1"/><rect x="1885.8000000000002" y="735.6" width="71.8" height="46.800000000000004" rx="6.8" fill="#6c6c73"/><rect x="1886.6000000000001" y="736.4000000000001" width="70.19999999999999" height="45.2" rx="6" fill="url(#gG)"/>
<text class="sb" transform="translate(1921.70 765.90) scale(0.7825 1)" font-size="20" fill="#000" text-anchor="middle">Search</text>
<rect x="1983.1" y="724.7" width="87.6" height="62.6" rx="14.5" fill="#171a2b" opacity="0.5" filter="url(#bl3)"/><rect x="1987.6" y="730.2" width="78.6" height="53.6" rx="10" fill="#171a2b" opacity="0.75" filter="url(#bl4)"/>
<rect x="1989.6" y="734.2" width="74.6" height="49.6" rx="8" fill="#9c9ca1"/><rect x="1991.0" y="735.6" width="71.8" height="46.800000000000004" rx="6.8" fill="#6c6c73"/><rect x="1991.8" y="736.4000000000001" width="70.19999999999999" height="45.2" rx="6" fill="url(#gG)"/>
<text class="sb" transform="translate(2026.90 765.90) scale(0.7094 1)" font-size="20" fill="#000" text-anchor="middle">FFT</text>
<rect x="1772.4" y="797.9" width="87.6" height="62.6" rx="14.5" fill="#171a2b" opacity="0.5" filter="url(#bl3)"/><rect x="1776.9" y="803.4" width="78.6" height="53.6" rx="10" fill="#171a2b" opacity="0.75" filter="url(#bl4)"/>
<rect x="1778.9" y="807.4" width="74.6" height="49.6" rx="8" fill="#c2c2c7"/><rect x="1780.0" y="808.4" width="72.39999999999999" height="46.800000000000004" rx="7" fill="url(#gW)"/>
<text class="sb" transform="translate(1816.20 839.10) scale(0.7052 1)" font-size="20" fill="#000" text-anchor="middle">Protocol</text>
<rect x="1877.9" y="797.9" width="87.6" height="62.6" rx="14.5" fill="#171a2b" opacity="0.5" filter="url(#bl3)"/><rect x="1882.4" y="803.4" width="78.6" height="53.6" rx="10" fill="#171a2b" opacity="0.75" filter="url(#bl4)"/>
<rect x="1884.4" y="807.4" width="74.6" height="49.6" rx="8" fill="#c2c2c7"/><rect x="1885.5" y="808.4" width="72.39999999999999" height="46.800000000000004" rx="7" fill="url(#gW)"/>
<text class="sb" transform="translate(1921.70 839.10) scale(0.7353 1)" font-size="20" fill="#000" text-anchor="middle">Gen</text>
<rect x="1983.1" y="797.9" width="87.6" height="62.6" rx="14.5" fill="#171a2b" opacity="0.5" filter="url(#bl3)"/><rect x="1987.6" y="803.4" width="78.6" height="53.6" rx="10" fill="#171a2b" opacity="0.75" filter="url(#bl4)"/>
<rect x="1989.6" y="807.4" width="74.6" height="49.6" rx="8" fill="#9c9ca1"/><rect x="1991.0" y="808.8" width="71.8" height="46.800000000000004" rx="6.8" fill="#6c6c73"/><rect x="1991.8" y="809.6" width="70.19999999999999" height="45.2" rx="6" fill="url(#gG)"/>
<rect x="2003.3" y="817.8" width="11.6" height="11.2" fill="#000"/><rect x="2020.9" y="817.8" width="11.6" height="11.2" fill="#000"/><rect x="2038.5" y="817.8" width="11.6" height="11.2" fill="#000"/><rect x="2003.3" y="835.2" width="11.6" height="11.2" fill="#000"/><rect x="2020.9" y="835.2" width="11.6" height="11.2" fill="#000"/><rect x="2038.5" y="835.2" width="11.6" height="11.2" fill="#000"/>
<rect x="1433" y="342.4" width="312" height="3" fill="#f4f4f6"/>
<rect x="1768.3" y="288.6" width="311.4" height="3" fill="#f4f4f6"/>
<rect x="1768.3" y="487.3" width="311.4" height="3" fill="#f4f4f6"/>
</g>
</svg>
</body></html>
